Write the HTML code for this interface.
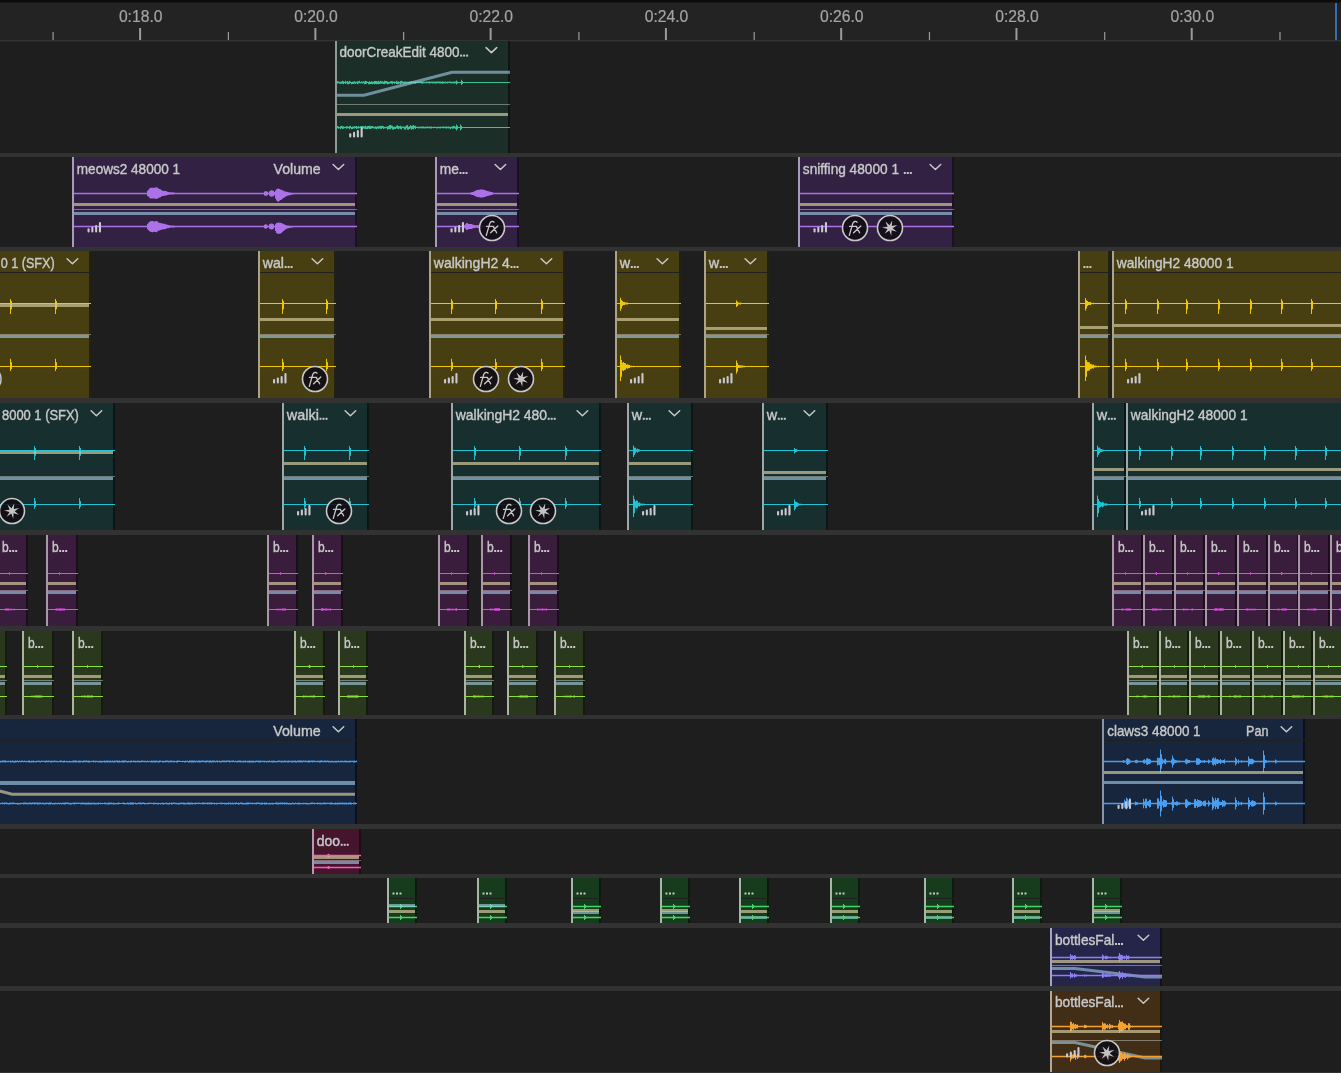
<!DOCTYPE html><html><head><meta charset="utf-8"><style>html,body{margin:0;padding:0;background:#1e1e1e;width:1341px;height:1073px;overflow:hidden}</style></head><body><svg width="1341" height="1073" viewBox="0 0 1341 1073" style="display:block;font-family:'Liberation Sans';will-change:transform">
<rect x="0" y="0" width="1341" height="1073" fill="#1e1e1e"/>
<rect x="0" y="0" width="1341" height="2" fill="#0b0b0b"/>
<rect x="0" y="2" width="1341" height="1" fill="#171717"/>
<rect x="0" y="3" width="1341" height="37" fill="#232323"/>
<rect x="0" y="40" width="1341" height="1" fill="#333333"/>
<rect x="0" y="41" width="1341" height="1" fill="#262626"/>
<g opacity="0.999">
<rect x="139.1" y="28" width="2" height="12" fill="#9b9b9b"/>
<text x="140.7" y="22" font-size="15.6" fill="#a4a4a4" stroke="#a4a4a4" stroke-width="0.2" text-anchor="middle" textLength="43.6" lengthAdjust="spacingAndGlyphs">0:18.0</text>
<rect x="314.37" y="28" width="2" height="12" fill="#9b9b9b"/>
<text x="315.97" y="22" font-size="15.6" fill="#a4a4a4" stroke="#a4a4a4" stroke-width="0.2" text-anchor="middle" textLength="43.6" lengthAdjust="spacingAndGlyphs">0:20.0</text>
<rect x="489.64" y="28" width="2" height="12" fill="#9b9b9b"/>
<text x="491.24" y="22" font-size="15.6" fill="#a4a4a4" stroke="#a4a4a4" stroke-width="0.2" text-anchor="middle" textLength="43.6" lengthAdjust="spacingAndGlyphs">0:22.0</text>
<rect x="664.91" y="28" width="2" height="12" fill="#9b9b9b"/>
<text x="666.51" y="22" font-size="15.6" fill="#a4a4a4" stroke="#a4a4a4" stroke-width="0.2" text-anchor="middle" textLength="43.6" lengthAdjust="spacingAndGlyphs">0:24.0</text>
<rect x="840.18" y="28" width="2" height="12" fill="#9b9b9b"/>
<text x="841.78" y="22" font-size="15.6" fill="#a4a4a4" stroke="#a4a4a4" stroke-width="0.2" text-anchor="middle" textLength="43.6" lengthAdjust="spacingAndGlyphs">0:26.0</text>
<rect x="1015.45" y="28" width="2" height="12" fill="#9b9b9b"/>
<text x="1017.05" y="22" font-size="15.6" fill="#a4a4a4" stroke="#a4a4a4" stroke-width="0.2" text-anchor="middle" textLength="43.6" lengthAdjust="spacingAndGlyphs">0:28.0</text>
<rect x="1190.72" y="28" width="2" height="12" fill="#9b9b9b"/>
<text x="1192.32" y="22" font-size="15.6" fill="#a4a4a4" stroke="#a4a4a4" stroke-width="0.2" text-anchor="middle" textLength="43.6" lengthAdjust="spacingAndGlyphs">0:30.0</text>
<rect x="52.5" y="32" width="1.2" height="8" fill="#9b9b9b"/>
<rect x="227.77" y="32" width="1.2" height="8" fill="#9b9b9b"/>
<rect x="403.04" y="32" width="1.2" height="8" fill="#9b9b9b"/>
<rect x="578.31" y="32" width="1.2" height="8" fill="#9b9b9b"/>
<rect x="753.58" y="32" width="1.2" height="8" fill="#9b9b9b"/>
<rect x="928.85" y="32" width="1.2" height="8" fill="#9b9b9b"/>
<rect x="1104.12" y="32" width="1.2" height="8" fill="#9b9b9b"/>
<rect x="1279.39" y="32" width="1.2" height="8" fill="#9b9b9b"/>
</g>
<rect x="1335" y="3" width="2" height="37" fill="#2f6cb0"/>
<rect x="0" y="153" width="1341" height="4" fill="#323232"/>
<rect x="0" y="247" width="1341" height="4" fill="#323232"/>
<rect x="0" y="398" width="1341" height="5" fill="#323232"/>
<rect x="0" y="530" width="1341" height="5" fill="#323232"/>
<rect x="0" y="626" width="1341" height="5" fill="#323232"/>
<rect x="0" y="715" width="1341" height="4" fill="#323232"/>
<rect x="0" y="824" width="1341" height="5" fill="#323232"/>
<rect x="0" y="874" width="1341" height="4" fill="#323232"/>
<rect x="0" y="923" width="1341" height="5" fill="#323232"/>
<rect x="0" y="986" width="1341" height="5" fill="#323232"/>
<g opacity="0.999">
<svg x="335" y="41" width="175" height="112" overflow="hidden"><g transform="translate(-335,-41)">
<rect x="335" y="41" width="173" height="112" fill="#1c2f29"/>
<rect x="508" y="41" width="2" height="112" fill="#0e1714"/>
<rect x="460.1" y="54.6" width="2" height="2" fill="#c9c9c9"/>
<rect x="463.1" y="54.6" width="2" height="2" fill="#c9c9c9"/>
<rect x="466.1" y="54.6" width="2" height="2" fill="#c9c9c9"/>
<text x="339.5" y="56.6" font-size="14.6" fill="#c9c9c9" stroke="#c9c9c9" stroke-width="0.4" text-anchor="start" textLength="120" lengthAdjust="spacingAndGlyphs">doorCreakEdit 4800</text>
<polyline points="486.1,47.6 491.4,52.6 496.7,47.6" fill="none" stroke="#c9c9c9" stroke-width="1.5" stroke-linecap="round" stroke-linejoin="round"/>
<polygon points="336,81.75 337,81.75 337,81 338,81 338,81.5 339,81.5 339,81.75 341,81.75 341,81.5 342,81.5 342,80.75 343,80.75 343,81.25 344,81.25 344,81.75 345,81.75 345,80.75 346,80.75 346,81.75 347,81.75 347,81 348,81 348,81.75 349,81.75 349,80.75 350,80.75 350,81.5 351,81.5 351,82 352,82 352,81.75 353,81.75 353,81.5 354,81.5 354,81.25 355,81.25 355,81.75 356,81.75 356,81.75 357,81.75 357,81.25 358,81.25 358,81.25 359,81.25 359,80.75 360,80.75 360,82 361,82 361,81.25 362,81.25 362,81.75 363,81.75 363,81.25 364,81.25 364,81.5 365,81.5 365,80.75 366,80.75 366,81 367,81 367,81.75 368,81.75 368,82 369,82 369,81 370,81 370,82 371,82 371,81.25 372,81.25 372,81.5 373,81.5 373,81.75 374,81.75 374,81 375,81 375,81 376,81 376,81 377,81 377,81.5 378,81.5 378,80.75 379,80.75 379,81.5 380,81.5 380,80.75 381,80.75 381,81.25 382,81.25 382,81.25 383,81.25 383,81.75 384,81.75 384,80.75 385,80.75 385,81 386,81 386,81 387,81 387,81.5 388,81.5 388,81.75 389,81.75 389,82 390,82 390,81.25 391,81.25 391,81 392,81 392,81.25 393,81.25 393,81.5 394,81.5 394,81.5 395,81.5 395,81.75 396,81.75 396,80.75 397,80.75 397,81.5 398,81.5 398,81.5 399,81.5 399,81.75 400,81.75 400,81 401,81 401,80.75 402,80.75 402,81.25 403,81.25 403,81.75 404,81.75 404,81.5 406,81.5 406,81.75 409,81.75 409,81.5 410,81.5 410,81.75 411,81.75 411,81.25 412,81.25 412,82 413,82 413,81.5 414,81.5 414,81.5 415,81.5 415,81.75 416,81.75 416,82 417,82 417,81.75 418,81.75 418,81.5 419,81.5 419,81.75 420,81.75 420,81.5 421,81.5 421,81.5 422,81.5 422,81.5 423,81.5 423,81.5 424,81.5 424,81.75 425,81.75 425,82 426,82 426,81.5 427,81.5 427,81.75 428,81.75 428,81.5 429,81.5 429,81.5 430,81.5 430,81.75 431,81.75 431,81.5 432,81.5 432,81.5 433,81.5 433,81.75 434,81.75 434,81.5 435,81.5 435,81.75 436,81.75 436,81.5 437,81.5 437,81.5 439,81.5 439,81.5 441,81.5 441,81.75 442,81.75 442,81.25 443,81.25 443,81.75 445,81.75 445,81.5 446,81.5 446,82 447,82 447,81.5 448,81.5 448,81.75 449,81.75 449,81.5 450,81.5 450,81.5 451,81.5 451,81.75 452,81.75 452,81.75 453,81.75 453,81.75 454,81.75 454,81.5 455,81.5 455,81.5 456,81.5 456,80.5 457,80.5 457,81.5 458,81.5 458,82 461,82 461,79.75 462,79.75 462,81 463,81 463,82 510,82 510,83 463,83 463,84 462,84 462,85 461,85 461,83 458,83 458,83.5 457,83.5 457,84.5 456,84.5 456,83.25 455,83.25 455,83.5 454,83.5 454,83.5 453,83.5 453,83.25 452,83.25 452,83.5 451,83.5 451,83.25 450,83.25 450,83 449,83 449,83 448,83 448,83.5 447,83.5 447,83.25 446,83.25 446,83.25 445,83.25 445,83.5 443,83.5 443,83.75 442,83.75 442,83.5 441,83.5 441,83.5 439,83.5 439,83.25 437,83.25 437,83.5 436,83.5 436,83.5 435,83.5 435,83.5 434,83.5 434,83.25 433,83.25 433,83.5 432,83.5 432,83 431,83 431,83.5 430,83.5 430,83.5 429,83.5 429,83.25 428,83.25 428,83.25 427,83.25 427,83.25 426,83.25 426,83.25 425,83.25 425,83.25 424,83.25 424,83.25 423,83.25 423,83.75 422,83.75 422,83.5 421,83.5 421,83.25 420,83.25 420,83 419,83 419,83.25 418,83.25 418,83 417,83 417,83.25 416,83.25 416,83.5 415,83.5 415,83.5 414,83.5 414,83 413,83 413,83 412,83 412,83.25 411,83.25 411,83.5 410,83.5 410,83.25 409,83.25 409,83.25 406,83.25 406,83.5 404,83.5 404,83.75 403,83.75 403,83.5 402,83.5 402,83.5 401,83.5 401,84.25 400,84.25 400,83.5 399,83.5 399,84 398,84 398,84.25 397,84.25 397,84 396,84 396,83.25 395,83.25 395,84 394,84 394,83 393,83 393,84.25 392,84.25 392,83.75 391,83.75 391,83.25 390,83.25 390,83.75 389,83.75 389,84 388,84 388,84.25 387,84.25 387,83.75 386,83.75 386,83.5 385,83.5 385,84.25 384,84.25 384,84 383,84 383,83.75 382,83.75 382,83.5 381,83.5 381,83.75 380,83.75 380,84 379,84 379,84.25 378,84.25 378,84 377,84 377,84.25 376,84.25 376,84 375,84 375,84.25 374,84.25 374,83.75 373,83.75 373,84.25 372,84.25 372,84 371,84 371,84 370,84 370,84.25 369,84.25 369,84.25 368,84.25 368,83 367,83 367,83.75 366,83.75 366,84 365,84 365,84.25 364,84.25 364,83.25 363,83.25 363,83.5 362,83.5 362,83.25 361,83.25 361,83.5 360,83.5 360,83.25 359,83.25 359,83.5 358,83.5 358,84.25 357,84.25 357,83.25 356,83.25 356,84 355,84 355,83.5 354,83.5 354,84 353,84 353,84 352,84 352,84.25 351,84.25 351,83.25 350,83.25 350,83.75 349,83.75 349,84.25 348,84.25 348,84.25 347,84.25 347,83.25 346,83.25 346,84 345,84 345,83.25 344,83.25 344,84.25 343,84.25 343,83.75 342,83.75 342,83.75 341,83.75 341,83.75 339,83.75 339,83.25 338,83.25 338,83.5 337,83.5 337,83.5 336,83.5" fill="#3cc397"/>
<polygon points="336,126 337,126 337,126 338,126 338,126.5 339,126.5 339,127 340,127 340,126.25 341,126.25 341,125.75 342,125.75 342,126.25 343,126.25 343,126.25 344,126.25 344,126.75 345,126.75 345,126.75 346,126.75 346,126.25 347,126.25 347,126.25 348,126.25 348,126.75 349,126.75 349,126 350,126 350,125.75 351,125.75 351,127 352,127 352,126.5 353,126.5 353,126.5 354,126.5 354,126.25 355,126.25 355,126.25 356,126.25 356,126 357,126 357,126.75 358,126.75 358,126 359,126 359,126.75 360,126.75 360,126.25 361,126.25 361,126 363,126 363,126.25 364,126.25 364,126.25 365,126.25 365,125.75 366,125.75 366,126.75 367,126.75 367,126 368,126 368,126 369,126 369,125.75 370,125.75 370,126 371,126 371,126 372,126 372,126 373,126 373,126.5 374,126.5 374,127 375,127 375,126.25 376,126.25 376,126.75 377,126.75 377,126.25 378,126.25 378,126.25 379,126.25 379,126.25 380,126.25 380,125.75 381,125.75 381,126 382,126 382,125.75 383,125.75 383,126.25 384,126.25 384,126.75 385,126.75 385,127 386,127 386,126.5 387,126.5 387,126.5 388,126.5 388,126 389,126 389,125 391,125 391,125.5 392,125.5 392,125.75 393,125.75 393,126.75 394,126.75 394,126.75 396,126.75 396,125.75 397,125.75 397,125.25 398,125.25 398,126 399,126 399,126.25 400,126.25 400,125.75 401,125.75 401,126.5 402,126.5 402,126.5 403,126.5 403,126.5 404,126.5 404,126.75 405,126.75 405,126.25 406,126.25 406,125.5 407,125.5 407,125 408,125 408,126.75 409,126.75 409,126.25 410,126.25 410,125 411,125 411,126 412,126 412,125.5 413,125.5 413,125 414,125 414,125.75 415,125.75 415,125.75 416,125.75 416,126.75 418,126.75 418,126.75 419,126.75 419,126.75 421,126.75 421,126.5 422,126.5 422,126.5 423,126.5 423,126.5 424,126.5 424,127 425,127 425,126.5 426,126.5 426,126.75 427,126.75 427,126.5 428,126.5 428,126.75 429,126.75 429,126.5 430,126.5 430,126.75 431,126.75 431,126.5 432,126.5 432,127 433,127 433,126.75 434,126.75 434,126.75 436,126.75 436,127 437,127 437,126.75 440,126.75 440,126.5 441,126.5 441,127 442,127 442,126.5 444,126.5 444,126.75 445,126.75 445,126.5 446,126.5 446,126.5 447,126.5 447,126.75 448,126.75 448,126.5 449,126.5 449,126.75 450,126.75 450,126.75 451,126.75 451,126.75 452,126.75 452,126.25 453,126.25 453,126 454,126 454,125.75 455,125.75 455,126.75 456,126.75 456,124.5 457,124.5 457,125.75 458,125.75 458,127 460,127 460,124.5 461,124.5 461,125.75 462,125.75 462,127 510,127 510,128 462,128 462,129.25 461,129.25 461,130.5 460,130.5 460,128 458,128 458,129.25 457,129.25 457,130.5 456,130.5 456,129 455,129 455,128.25 454,128.25 454,128.5 453,128.5 453,128.75 452,128.75 452,128.25 451,128.25 451,129.25 450,129.25 450,128.25 449,128.25 449,128.5 448,128.5 448,128.25 447,128.25 447,128.5 446,128.5 446,128.25 445,128.25 445,128.25 444,128.25 444,128.25 442,128.25 442,128 441,128 441,128.5 440,128.5 440,128.25 437,128.25 437,128.5 436,128.5 436,128 434,128 434,128.25 433,128.25 433,128 432,128 432,128.5 431,128.5 431,128.5 430,128.5 430,128.25 429,128.25 429,128.25 428,128.25 428,128.25 427,128.25 427,128.25 426,128.25 426,128.25 425,128.25 425,128.5 424,128.5 424,128.25 423,128.25 423,128.5 422,128.5 422,128.25 421,128.25 421,128.25 419,128.25 419,128.5 418,128.5 418,128 416,128 416,129 415,129 415,128.25 414,128.25 414,129.5 413,129.5 413,129 412,129 412,129.75 411,129.75 411,128.5 410,128.5 410,129 409,129 409,129.75 408,129.75 408,129.75 407,129.75 407,128.25 406,128.25 406,129.75 405,129.75 405,129.5 404,129.5 404,128.25 403,128.25 403,128 402,128 402,129.5 401,129.5 401,129 400,129 400,128.5 399,128.5 399,129.25 398,129.25 398,128.75 397,128.75 397,128.25 396,128.25 396,129 394,129 394,129.75 393,129.75 393,129.5 392,129.5 392,128.25 391,128.25 391,129.25 389,129.25 389,129 388,129 388,129.75 387,129.75 387,128.25 386,128.25 386,128.25 385,128.25 385,128.5 384,128.5 384,129 383,129 383,128 382,128 382,129 381,129 381,128.75 380,128.75 380,128.5 379,128.5 379,128.75 378,128.75 378,128.5 377,128.5 377,129.25 376,129.25 376,128.75 375,128.75 375,128.5 374,128.5 374,128.5 373,128.5 373,128.25 372,128.25 372,128.5 371,128.5 371,129 370,129 370,129 369,129 369,128.5 368,128.5 368,129 367,129 367,129.25 366,129.25 366,129 365,129 365,128.75 364,128.75 364,128.5 363,128.5 363,129 361,129 361,128 360,128 360,128.25 359,128.25 359,128.5 358,128.5 358,128.5 357,128.5 357,129 356,129 356,128 355,128 355,128.5 354,128.5 354,128.5 353,128.5 353,129 352,129 352,129.25 351,129.25 351,128.25 350,128.25 350,129.25 349,129.25 349,128.25 348,128.25 348,128.25 347,128.25 347,128.75 346,128.75 346,128 345,128 345,128.25 344,128.25 344,128.75 343,128.75 343,129 342,129 342,128.25 341,128.25 341,129.25 340,129.25 340,128.25 339,128.25 339,128.75 338,128.75 338,128.25 337,128.25 337,128.5 336,128.5" fill="#3cc397"/>
<polyline points="335,95.3 364,95.3 452,72.2 510,72.2" fill="none" stroke="rgba(163,206,233,0.62)" stroke-width="3"/>
<rect x="335" y="104" width="175" height="1" fill="rgba(200,200,200,0.5)"/>
<rect x="335" y="113" width="173" height="3" fill="rgba(205,196,152,0.72)"/>
<rect x="349.2" y="133.3" width="2.1" height="4.3" rx="1" fill="#cbc8cf"/>
<rect x="353" y="131.8" width="2.1" height="5.8" rx="1" fill="#cbc8cf"/>
<rect x="356.8" y="130.1" width="2.1" height="7.5" rx="1" fill="#cbc8cf"/>
<rect x="360.6" y="127.1" width="2.1" height="10.5" rx="1" fill="#cbc8cf"/>
<rect x="335" y="41" width="2" height="112" fill="#8f9c95"/>
</g></svg>
<svg x="72" y="157" width="285" height="90" overflow="hidden"><g transform="translate(-72,-157)">
<rect x="72" y="157" width="283" height="90" fill="#332244"/>
<rect x="355" y="157" width="2" height="90" fill="#1c1226"/>
<text x="76.8" y="174" font-size="14.6" fill="#c9c9c9" stroke="#c9c9c9" stroke-width="0.4" text-anchor="start" textLength="103.3" lengthAdjust="spacingAndGlyphs">meows2 48000 1</text>
<text x="273.6" y="174" font-size="14.6" fill="#c9c9c9" stroke="#c9c9c9" stroke-width="0.4" text-anchor="start" textLength="47" lengthAdjust="spacingAndGlyphs">Volume</text>
<polyline points="333.1,164.5 338.4,169.5 343.7,164.5" fill="none" stroke="#c9c9c9" stroke-width="1.5" stroke-linecap="round" stroke-linejoin="round"/>
<polygon points="72,192.75 147,192.75 147,190.75 148,190.75 148,189.75 149,189.75 149,188.5 150,188.5 150,187.75 155,187.75 155,187.5 156,187.5 156,187.25 157,187.25 157,187.75 158,187.75 158,188.5 159,188.5 159,189 160,189 160,189.25 161,189.25 161,190 162,190 162,190.75 164,190.75 164,191 165,191 165,191 166,191 166,191.25 167,191.25 167,191.75 168,191.75 168,192 169,192 169,192.25 170,192.25 170,192.25 173,192.25 173,192.5 174,192.5 174,192.5 175,192.5 175,192.75 264,192.75 264,191.5 265,191.5 265,191.25 267,191.25 267,191.75 268,191.75 268,192.75 269,192.75 269,191.25 270,191.25 270,190.5 271,190.5 271,190.25 272,190.25 272,190.5 273,190.5 273,190.75 274,190.75 274,192 275,192 275,190.5 276,190.5 276,189.25 277,189.25 277,188.75 278,188.75 278,188.5 279,188.5 279,189 280,189 280,189.5 281,189.5 281,189.75 282,189.75 282,190.25 283,190.25 283,190.75 284,190.75 284,191.25 285,191.25 285,191.5 286,191.5 286,191.75 287,191.75 287,192 288,192 288,192.25 289,192.25 289,192.5 290,192.5 290,192.5 291,192.5 291,192.75 292,192.75 292,192.75 294,192.75 294,192.75 357,192.75 357,194.25 294,194.25 294,194.5 292,194.5 292,194.75 291,194.75 291,195 290,195 290,195.25 289,195.25 289,195.5 288,195.5 288,195.75 287,195.75 287,196.25 286,196.25 286,196.75 285,196.75 285,197.5 284,197.5 284,198 283,198 283,198.75 282,198.75 282,199.75 281,199.75 281,200 280,200 280,200.75 279,200.75 279,201.75 278,201.75 278,201.25 277,201.25 277,200.5 276,200.5 276,198.5 275,198.5 275,195 274,195 274,196.25 273,196.25 273,196.5 272,196.5 272,196.75 271,196.75 271,196.5 270,196.5 270,195.75 269,195.75 269,194.25 268,194.25 268,195.25 267,195.25 267,195.75 265,195.75 265,195.5 264,195.5 264,194.25 175,194.25 175,194.25 174,194.25 174,194.5 173,194.5 173,194.5 170,194.5 170,194.75 169,194.75 169,194.75 168,194.75 168,195 167,195 167,195.5 166,195.5 166,195.5 165,195.5 165,195.75 164,195.75 164,196 162,196 162,196.5 161,196.5 161,197.25 160,197.25 160,197.5 159,197.5 159,198 158,198 158,198.5 157,198.5 157,199 156,199 156,198.75 155,198.75 155,198.5 150,198.5 150,197.75 149,197.75 149,196.75 148,196.75 148,196 147,196 147,194.25 72,194.25" fill="#ad72ea"/>
<rect x="72" y="203" width="283" height="3" fill="rgba(205,196,152,0.72)"/>
<rect x="72" y="209" width="285" height="1" fill="rgba(200,200,200,0.5)"/>
<rect x="72" y="212" width="283" height="3" fill="rgba(163,206,233,0.62)"/>
<polygon points="72,225.75 147,225.75 147,224 148,224 148,222.75 149,222.75 149,221.75 150,221.75 150,221.25 151,221.25 151,221 152,221 152,221 153,221 153,221.25 154,221.25 154,221.5 155,221.5 155,221.25 156,221.25 156,221 157,221 157,221.5 158,221.5 158,222.5 159,222.5 159,222.75 160,222.75 160,223 161,223 161,223.25 162,223.25 162,223.5 163,223.5 163,223.75 165,223.75 165,224.25 166,224.25 166,224.5 167,224.5 167,224.75 168,224.75 168,225 169,225 169,225.25 170,225.25 170,225.5 171,225.5 171,225.5 174,225.5 174,225.75 175,225.75 175,225.75 264,225.75 264,224.75 265,224.75 265,224.25 266,224.25 266,224.5 267,224.5 267,225.25 268,225.25 268,225.75 269,225.75 269,224.25 270,224.25 270,223.75 271,223.75 271,223.5 272,223.5 272,223.75 273,223.75 273,224.25 274,224.25 274,225.75 275,225.75 275,224.25 276,224.25 276,223 277,223 277,222.75 278,222.75 278,222.5 279,222.5 279,222.75 280,222.75 280,222.75 281,222.75 281,223 282,223 282,223.5 283,223.5 283,224 284,224 284,224.5 285,224.5 285,225 286,225 286,225.25 287,225.25 287,225.5 288,225.5 288,225.5 289,225.5 289,225.75 290,225.75 290,225.75 292,225.75 292,225.75 293,225.75 293,225.75 357,225.75 357,227.25 293,227.25 293,227.5 292,227.5 292,227.75 290,227.75 290,228 289,228 289,228.25 288,228.25 288,228.5 287,228.5 287,228.75 286,228.75 286,229.5 285,229.5 285,230.25 284,230.25 284,231 283,231 283,232 282,232 282,233 281,233 281,233.5 280,233.5 280,233.75 279,233.75 279,233.75 278,233.75 278,233.75 277,233.75 277,233 276,233 276,231 275,231 275,227.25 274,227.25 274,228.75 273,228.75 273,229.25 272,229.25 272,229.5 271,229.5 271,229.25 270,229.25 270,228.75 269,228.75 269,227.25 268,227.25 268,227.75 267,227.75 267,228.5 266,228.5 266,228.75 265,228.75 265,228.25 264,228.25 264,227.25 175,227.25 175,227.5 174,227.5 174,227.5 171,227.5 171,227.75 170,227.75 170,227.75 169,227.75 169,228.25 168,228.25 168,228.25 167,228.25 167,228.5 166,228.5 166,229 165,229 165,229.25 163,229.25 163,229.5 162,229.5 162,229.75 161,229.75 161,230 160,230 160,230.5 159,230.5 159,230.75 158,230.75 158,231.5 157,231.5 157,232.25 156,232.25 156,232 155,232 155,231.75 154,231.75 154,232 153,232 153,232.25 152,232.25 152,232 151,232 151,231.75 150,231.75 150,231.25 149,231.25 149,230.25 148,230.25 148,229.25 147,229.25 147,227.25 72,227.25" fill="#ad72ea"/>
<rect x="87.5" y="228.2" width="2.1" height="4.3" rx="1" fill="#cbc8cf"/>
<rect x="91.3" y="226.7" width="2.1" height="5.8" rx="1" fill="#cbc8cf"/>
<rect x="95.1" y="225" width="2.1" height="7.5" rx="1" fill="#cbc8cf"/>
<rect x="98.9" y="222" width="2.1" height="10.5" rx="1" fill="#cbc8cf"/>
<rect x="72" y="157" width="2" height="90" fill="#a79cba"/>
</g></svg>
<svg x="435" y="157" width="84" height="90" overflow="hidden"><g transform="translate(-435,-157)">
<rect x="435" y="157" width="82" height="90" fill="#332244"/>
<rect x="517" y="157" width="2" height="90" fill="#1c1226"/>
<rect x="459.5" y="172" width="2" height="2" fill="#c9c9c9"/>
<rect x="462.5" y="172" width="2" height="2" fill="#c9c9c9"/>
<rect x="465.5" y="172" width="2" height="2" fill="#c9c9c9"/>
<text x="439.8" y="174" font-size="14.6" fill="#c9c9c9" stroke="#c9c9c9" stroke-width="0.4" text-anchor="start" textLength="19.1" lengthAdjust="spacingAndGlyphs">me</text>
<polyline points="495.1,164.5 500.4,169.5 505.7,164.5" fill="none" stroke="#c9c9c9" stroke-width="1.5" stroke-linecap="round" stroke-linejoin="round"/>
<polygon points="435,192.75 470,192.75 470,192.5 471,192.5 471,192.25 472,192.25 472,192 473,192 473,191.75 474,191.75 474,191.25 475,191.25 475,190.75 476,190.75 476,190.25 477,190.25 477,190 478,190 478,189.75 480,189.75 480,189.5 483,189.5 483,189.75 484,189.75 484,190 485,190 485,190.25 486,190.25 486,190.75 487,190.75 487,191 488,191 488,191.25 489,191.25 489,191.5 490,191.5 490,191.75 491,191.75 491,192 492,192 492,192.25 493,192.25 493,192.75 519,192.75 519,194.25 493,194.25 493,194.75 492,194.75 492,195 491,195 491,195.25 490,195.25 490,195.5 489,195.5 489,195.75 488,195.75 488,196 487,196 487,196.25 486,196.25 486,196.75 485,196.75 485,197 484,197 484,197.25 483,197.25 483,197.5 480,197.5 480,197.25 478,197.25 478,197 477,197 477,196.75 476,196.75 476,196.25 475,196.25 475,195.75 474,195.75 474,195.25 473,195.25 473,195 472,195 472,194.75 471,194.75 471,194.5 470,194.5 470,194.25 435,194.25" fill="#ad72ea"/>
<rect x="435" y="203" width="82" height="3" fill="rgba(205,196,152,0.72)"/>
<rect x="435" y="209" width="84" height="1" fill="rgba(200,200,200,0.5)"/>
<rect x="435" y="212" width="82" height="3" fill="rgba(163,206,233,0.62)"/>
<polygon points="435,225.75 464,225.75 464,225.25 465,225.25 465,224.25 466,224.25 466,223 467,223 467,223.25 468,223.25 468,223.75 469,223.75 469,224 472,224 472,224.5 473,224.5 473,224.75 474,224.75 474,225 475,225 475,225.25 477,225.25 477,225 478,225 478,225.25 480,225.25 480,225.5 483,225.5 483,225.75 519,225.75 519,227.25 483,227.25 483,227.5 480,227.5 480,227.75 478,227.75 478,228 477,228 477,227.75 475,227.75 475,228 474,228 474,228.25 473,228.25 473,228.5 472,228.5 472,229 469,229 469,229.25 468,229.25 468,229.75 467,229.75 467,230 466,230 466,228.75 465,228.75 465,227.75 464,227.75 464,227.25 435,227.25" fill="#ad72ea"/>
<rect x="450.5" y="228.2" width="2.1" height="4.3" rx="1" fill="#cbc8cf"/>
<rect x="454.3" y="226.7" width="2.1" height="5.8" rx="1" fill="#cbc8cf"/>
<rect x="458.1" y="225" width="2.1" height="7.5" rx="1" fill="#cbc8cf"/>
<rect x="461.9" y="222" width="2.1" height="10.5" rx="1" fill="#cbc8cf"/>
<circle cx="492" cy="228" r="12.5" fill="#120e15" fill-opacity="0.9" stroke="#c8c8c8" stroke-width="1.6"/>
<g transform="translate(492,228)" fill="none" stroke="#c8c8c8" stroke-width="1.35" stroke-linecap="round"><path d="M2,-5.8 C1,-7.3 -1.6,-6.6 -2.3,-4.4 L-5.7,7.4 M-5.4,-1.6 L1.4,-1.6 M1.3,-1.6 L4.6,4.8 M5.8,-2.1 L-1.4,4.8"/></g>
<rect x="435" y="157" width="2" height="90" fill="#a79cba"/>
</g></svg>
<svg x="798" y="157" width="156" height="90" overflow="hidden"><g transform="translate(-798,-157)">
<rect x="798" y="157" width="154" height="90" fill="#332244"/>
<rect x="952" y="157" width="2" height="90" fill="#1c1226"/>
<rect x="903.8" y="172" width="2" height="2" fill="#c9c9c9"/>
<rect x="906.8" y="172" width="2" height="2" fill="#c9c9c9"/>
<rect x="909.8" y="172" width="2" height="2" fill="#c9c9c9"/>
<text x="802.8" y="174" font-size="14.6" fill="#c9c9c9" stroke="#c9c9c9" stroke-width="0.4" text-anchor="start" textLength="96.2" lengthAdjust="spacingAndGlyphs">sniffing 48000 1</text>
<polyline points="930.1,164.5 935.4,169.5 940.7,164.5" fill="none" stroke="#c9c9c9" stroke-width="1.5" stroke-linecap="round" stroke-linejoin="round"/>
<polygon points="798,192.75 954,192.75 954,194.25 798,194.25" fill="#ad72ea"/>
<rect x="798" y="203" width="154" height="3" fill="rgba(205,196,152,0.72)"/>
<rect x="798" y="209" width="156" height="1" fill="rgba(200,200,200,0.5)"/>
<rect x="798" y="212" width="154" height="3" fill="rgba(163,206,233,0.62)"/>
<polygon points="798,225.75 954,225.75 954,227.25 798,227.25" fill="#ad72ea"/>
<rect x="813.5" y="228.2" width="2.1" height="4.3" rx="1" fill="#cbc8cf"/>
<rect x="817.3" y="226.7" width="2.1" height="5.8" rx="1" fill="#cbc8cf"/>
<rect x="821.1" y="225" width="2.1" height="7.5" rx="1" fill="#cbc8cf"/>
<rect x="824.9" y="222" width="2.1" height="10.5" rx="1" fill="#cbc8cf"/>
<circle cx="855" cy="228" r="12.5" fill="#120e15" fill-opacity="0.9" stroke="#c8c8c8" stroke-width="1.6"/>
<g transform="translate(855,228)" fill="none" stroke="#c8c8c8" stroke-width="1.35" stroke-linecap="round"><path d="M2,-5.8 C1,-7.3 -1.6,-6.6 -2.3,-4.4 L-5.7,7.4 M-5.4,-1.6 L1.4,-1.6 M1.3,-1.6 L4.6,4.8 M5.8,-2.1 L-1.4,4.8"/></g>
<circle cx="890" cy="228" r="12.5" fill="#120e15" fill-opacity="0.9" stroke="#c8c8c8" stroke-width="1.6"/>
<polygon points="885.47,221.53 889.56,225.34 892.23,220.42 891.81,226 897.32,225.02 892.69,228.17 896.89,231.86 891.55,230.21 891.27,235.8 889.24,230.59 884.7,233.86 887.5,229.02 882.12,227.51 887.65,226.68" fill="#c4c4c4"/>
<rect x="798" y="157" width="2" height="90" fill="#a79cba"/>
</g></svg>
<svg x="-200" y="251" width="291" height="147" overflow="hidden"><g transform="translate(200,-251)">
<rect x="-200" y="251" width="289" height="147" fill="#484013"/>
<rect x="89" y="251" width="2" height="147" fill="#262210"/>
<text x="0.7" y="268" font-size="14.6" fill="#c9c9c9" stroke="#c9c9c9" stroke-width="0.4" text-anchor="start" textLength="53.9" lengthAdjust="spacingAndGlyphs">0 1 (SFX)</text>
<polyline points="67.1,258.7 72.4,263.7 77.7,258.7" fill="none" stroke="#c9c9c9" stroke-width="1.5" stroke-linecap="round" stroke-linejoin="round"/>
<polygon points="-200,303 10,303 10,299 11,299 11,301 12,301 12,303 55,303 55,299 56,299 56,301 57,301 57,303 91,303 91,304 57,304 57,309.25 56,309.25 56,314 55,314 55,304 12,304 12,309.25 11,309.25 11,314 10,314 10,304 -200,304" fill="#f0c800"/>
<rect x="-200" y="304" width="289" height="3" fill="rgba(205,196,152,0.72)"/>
<rect x="-200" y="334" width="291" height="1" fill="rgba(200,200,200,0.5)"/>
<rect x="-200" y="335" width="289" height="3" fill="rgba(163,206,233,0.62)"/>
<polygon points="-200,366 10,366 10,358.75 11,358.75 11,362.25 12,362.25 12,366 55,366 55,358.75 56,358.75 56,362.25 57,362.25 57,366 91,366 91,367 57,367 57,369 56,369 56,371 55,371 55,367 12,367 12,369 11,369 11,371 10,371 10,367 -200,367" fill="#f0c800"/>
<rect x="-100" y="379.1" width="2.1" height="4.3" rx="1" fill="#cbc8cf"/>
<rect x="-96.2" y="377.6" width="2.1" height="5.8" rx="1" fill="#cbc8cf"/>
<rect x="-92.4" y="375.9" width="2.1" height="7.5" rx="1" fill="#cbc8cf"/>
<rect x="-88.6" y="372.9" width="2.1" height="10.5" rx="1" fill="#cbc8cf"/>
<circle cx="-11.5" cy="379" r="12.5" fill="#120e15" fill-opacity="0.9" stroke="#c8c8c8" stroke-width="1.6"/>
<polygon points="-16.03,372.53 -11.94,376.34 -9.27,371.42 -9.69,377 -4.18,376.02 -8.81,379.17 -4.61,382.86 -9.95,381.21 -10.23,386.8 -12.26,381.59 -16.8,384.86 -14,380.02 -19.38,378.51 -13.85,377.68" fill="#c4c4c4"/>
<rect x="-200" y="272" width="291" height="1" fill="#222222"/>
</g></svg>
<svg x="258" y="251" width="78" height="147" overflow="hidden"><g transform="translate(-258,-251)">
<rect x="258" y="251" width="76" height="147" fill="#484013"/>
<rect x="334" y="251" width="2" height="147" fill="#262210"/>
<rect x="284.6" y="266" width="2" height="2" fill="#c9c9c9"/>
<rect x="287.6" y="266" width="2" height="2" fill="#c9c9c9"/>
<rect x="290.6" y="266" width="2" height="2" fill="#c9c9c9"/>
<text x="262.8" y="268" font-size="14.6" fill="#c9c9c9" stroke="#c9c9c9" stroke-width="0.4" text-anchor="start" textLength="21.2" lengthAdjust="spacingAndGlyphs">wal</text>
<polyline points="312.1,258.7 317.4,263.7 322.7,258.7" fill="none" stroke="#c9c9c9" stroke-width="1.5" stroke-linecap="round" stroke-linejoin="round"/>
<polygon points="258,303 282,303 282,299 283,299 283,301 284,301 284,303 326,303 326,299 327,299 327,301 328,301 328,303 336,303 336,304 328,304 328,309.25 327,309.25 327,314 326,314 326,304 284,304 284,309.25 283,309.25 283,314 282,314 282,304 258,304" fill="#f0c800"/>
<rect x="258" y="318" width="76" height="3" fill="rgba(205,196,152,0.72)"/>
<rect x="258" y="334" width="78" height="1" fill="rgba(200,200,200,0.5)"/>
<rect x="258" y="335" width="76" height="3" fill="rgba(163,206,233,0.62)"/>
<polygon points="258,366 282,366 282,358.75 283,358.75 283,362.25 284,362.25 284,366 326,366 326,358.75 327,358.75 327,362.25 328,362.25 328,366 336,366 336,367 328,367 328,369 327,369 327,371 326,371 326,367 284,367 284,369 283,369 283,371 282,371 282,367 258,367" fill="#f0c800"/>
<rect x="273" y="379.1" width="2.1" height="4.3" rx="1" fill="#cbc8cf"/>
<rect x="276.8" y="377.6" width="2.1" height="5.8" rx="1" fill="#cbc8cf"/>
<rect x="280.6" y="375.9" width="2.1" height="7.5" rx="1" fill="#cbc8cf"/>
<rect x="284.4" y="372.9" width="2.1" height="10.5" rx="1" fill="#cbc8cf"/>
<circle cx="315" cy="379" r="12.5" fill="#120e15" fill-opacity="0.9" stroke="#c8c8c8" stroke-width="1.6"/>
<g transform="translate(315,379)" fill="none" stroke="#c8c8c8" stroke-width="1.35" stroke-linecap="round"><path d="M2,-5.8 C1,-7.3 -1.6,-6.6 -2.3,-4.4 L-5.7,7.4 M-5.4,-1.6 L1.4,-1.6 M1.3,-1.6 L4.6,4.8 M5.8,-2.1 L-1.4,4.8"/></g>
<rect x="258" y="272" width="78" height="1" fill="#222222"/>
<rect x="258" y="251" width="2" height="147" fill="#aba68a"/>
</g></svg>
<svg x="429" y="251" width="136" height="147" overflow="hidden"><g transform="translate(-429,-251)">
<rect x="429" y="251" width="134" height="147" fill="#484013"/>
<rect x="563" y="251" width="2" height="147" fill="#262210"/>
<rect x="510.5" y="266" width="2" height="2" fill="#c9c9c9"/>
<rect x="513.5" y="266" width="2" height="2" fill="#c9c9c9"/>
<rect x="516.5" y="266" width="2" height="2" fill="#c9c9c9"/>
<text x="433.8" y="268" font-size="14.6" fill="#c9c9c9" stroke="#c9c9c9" stroke-width="0.4" text-anchor="start" textLength="76.1" lengthAdjust="spacingAndGlyphs">walkingH2 4</text>
<polyline points="541.1,258.7 546.4,263.7 551.7,258.7" fill="none" stroke="#c9c9c9" stroke-width="1.5" stroke-linecap="round" stroke-linejoin="round"/>
<polygon points="429,303 451,303 451,299 452,299 452,301 453,301 453,303 495,303 495,299 496,299 496,301 497,301 497,303 541,303 541,299 542,299 542,301 543,301 543,303 565,303 565,304 543,304 543,309.25 542,309.25 542,314 541,314 541,304 497,304 497,309.25 496,309.25 496,314 495,314 495,304 453,304 453,309.25 452,309.25 452,314 451,314 451,304 429,304" fill="#f0c800"/>
<rect x="429" y="318" width="134" height="3" fill="rgba(205,196,152,0.72)"/>
<rect x="429" y="334" width="136" height="1" fill="rgba(200,200,200,0.5)"/>
<rect x="429" y="335" width="134" height="3" fill="rgba(163,206,233,0.62)"/>
<polygon points="429,366 451,366 451,358.75 452,358.75 452,362.25 453,362.25 453,366 495,366 495,358.75 496,358.75 496,362.25 497,362.25 497,366 541,366 541,358.75 542,358.75 542,362.25 543,362.25 543,366 565,366 565,367 543,367 543,369 542,369 542,371 541,371 541,367 497,367 497,369 496,369 496,371 495,371 495,367 453,367 453,369 452,369 452,371 451,371 451,367 429,367" fill="#f0c800"/>
<rect x="444" y="379.1" width="2.1" height="4.3" rx="1" fill="#cbc8cf"/>
<rect x="447.8" y="377.6" width="2.1" height="5.8" rx="1" fill="#cbc8cf"/>
<rect x="451.6" y="375.9" width="2.1" height="7.5" rx="1" fill="#cbc8cf"/>
<rect x="455.4" y="372.9" width="2.1" height="10.5" rx="1" fill="#cbc8cf"/>
<circle cx="486" cy="379" r="12.5" fill="#120e15" fill-opacity="0.9" stroke="#c8c8c8" stroke-width="1.6"/>
<g transform="translate(486,379)" fill="none" stroke="#c8c8c8" stroke-width="1.35" stroke-linecap="round"><path d="M2,-5.8 C1,-7.3 -1.6,-6.6 -2.3,-4.4 L-5.7,7.4 M-5.4,-1.6 L1.4,-1.6 M1.3,-1.6 L4.6,4.8 M5.8,-2.1 L-1.4,4.8"/></g>
<circle cx="521" cy="379" r="12.5" fill="#120e15" fill-opacity="0.9" stroke="#c8c8c8" stroke-width="1.6"/>
<polygon points="516.47,372.53 520.56,376.34 523.23,371.42 522.81,377 528.32,376.02 523.69,379.17 527.89,382.86 522.55,381.21 522.27,386.8 520.24,381.59 515.7,384.86 518.5,380.02 513.12,378.51 518.65,377.68" fill="#c4c4c4"/>
<rect x="429" y="272" width="136" height="1" fill="#222222"/>
<rect x="429" y="251" width="2" height="147" fill="#aba68a"/>
</g></svg>
<svg x="615" y="251" width="66" height="147" overflow="hidden"><g transform="translate(-615,-251)">
<rect x="615" y="251" width="64" height="147" fill="#484013"/>
<rect x="679" y="251" width="2" height="147" fill="#262210"/>
<rect x="630.8" y="266" width="2" height="2" fill="#c9c9c9"/>
<rect x="633.8" y="266" width="2" height="2" fill="#c9c9c9"/>
<rect x="636.8" y="266" width="2" height="2" fill="#c9c9c9"/>
<text x="619.8" y="268" font-size="14.6" fill="#c9c9c9" stroke="#c9c9c9" stroke-width="0.4" text-anchor="start" textLength="10.4" lengthAdjust="spacingAndGlyphs">w</text>
<polyline points="657.1,258.7 662.4,263.7 667.7,258.7" fill="none" stroke="#c9c9c9" stroke-width="1.5" stroke-linecap="round" stroke-linejoin="round"/>
<polygon points="615,303 620,303 620,297.75 621,297.75 621,300 622,300 622,301 623,301 623,302 625,302 625,302.5 628,302.5 628,303 681,303 681,304 628,304 628,304.5 625,304.5 625,305 623,305 623,306 622,306 622,308.5 621,308.5 621,310.75 620,310.75 620,304 615,304" fill="#f0c800"/>
<rect x="615" y="318" width="64" height="3" fill="rgba(205,196,152,0.72)"/>
<rect x="615" y="334" width="66" height="1" fill="rgba(200,200,200,0.5)"/>
<rect x="615" y="335" width="64" height="3" fill="rgba(163,206,233,0.62)"/>
<polygon points="615,366 620,366 620,355.5 621,355.5 621,360 622,360 622,362.75 623,362.75 623,362 624,362 624,363 625,363 625,363.25 626,363.25 626,364.75 627,364.75 627,364.25 628,364.25 628,364.75 629,364.75 629,365 630,365 630,365.75 632,365.75 632,366 633,366 633,365.75 634,365.75 634,366 681,366 681,367 634,367 634,367.25 633,367.25 633,367 632,367 632,367.25 630,367.25 630,368 629,368 629,368.25 628,368.25 628,368.75 627,368.75 627,368.25 626,368.25 626,369.75 625,369.75 625,370 624,370 624,371 623,371 623,370.25 622,370.25 622,376.75 621,376.75 621,381 620,381 620,367 615,367" fill="#f0c800"/>
<rect x="630" y="379.1" width="2.1" height="4.3" rx="1" fill="#cbc8cf"/>
<rect x="633.8" y="377.6" width="2.1" height="5.8" rx="1" fill="#cbc8cf"/>
<rect x="637.6" y="375.9" width="2.1" height="7.5" rx="1" fill="#cbc8cf"/>
<rect x="641.4" y="372.9" width="2.1" height="10.5" rx="1" fill="#cbc8cf"/>
<rect x="615" y="272" width="66" height="1" fill="#222222"/>
<rect x="615" y="251" width="2" height="147" fill="#aba68a"/>
</g></svg>
<svg x="704" y="251" width="65" height="147" overflow="hidden"><g transform="translate(-704,-251)">
<rect x="704" y="251" width="63" height="147" fill="#484013"/>
<rect x="767" y="251" width="2" height="147" fill="#262210"/>
<rect x="719.8" y="266" width="2" height="2" fill="#c9c9c9"/>
<rect x="722.8" y="266" width="2" height="2" fill="#c9c9c9"/>
<rect x="725.8" y="266" width="2" height="2" fill="#c9c9c9"/>
<text x="708.8" y="268" font-size="14.6" fill="#c9c9c9" stroke="#c9c9c9" stroke-width="0.4" text-anchor="start" textLength="10.4" lengthAdjust="spacingAndGlyphs">w</text>
<polyline points="745.1,258.7 750.4,263.7 755.7,258.7" fill="none" stroke="#c9c9c9" stroke-width="1.5" stroke-linecap="round" stroke-linejoin="round"/>
<polygon points="704,303 736,303 736,300.5 737,300.5 737,301.75 738,301.75 738,302.5 739,302.5 739,302.75 740,302.75 740,302.5 741,302.5 741,303 769,303 769,304 741,304 741,304.5 740,304.5 740,304.25 739,304.25 739,304.5 738,304.5 738,306 737,306 737,307 736,307 736,304 704,304" fill="#f0c800"/>
<rect x="704" y="327" width="63" height="3" fill="rgba(205,196,152,0.72)"/>
<rect x="704" y="334" width="65" height="1" fill="rgba(200,200,200,0.5)"/>
<rect x="704" y="335" width="63" height="3" fill="rgba(163,206,233,0.62)"/>
<polygon points="704,366 736,366 736,360.5 737,360.5 737,363 738,363 738,365 739,365 739,365.25 741,365.25 741,365.5 743,365.5 743,365.75 745,365.75 745,366 769,366 769,367 745,367 745,367.25 743,367.25 743,367.5 741,367.5 741,367.75 739,367.75 739,368 738,368 738,371.5 737,371.5 737,373.5 736,373.5 736,367 704,367" fill="#f0c800"/>
<rect x="719" y="379.1" width="2.1" height="4.3" rx="1" fill="#cbc8cf"/>
<rect x="722.8" y="377.6" width="2.1" height="5.8" rx="1" fill="#cbc8cf"/>
<rect x="726.6" y="375.9" width="2.1" height="7.5" rx="1" fill="#cbc8cf"/>
<rect x="730.4" y="372.9" width="2.1" height="10.5" rx="1" fill="#cbc8cf"/>
<rect x="704" y="272" width="65" height="1" fill="#222222"/>
<rect x="704" y="251" width="2" height="147" fill="#aba68a"/>
</g></svg>
<svg x="1078" y="251" width="32" height="147" overflow="hidden"><g transform="translate(-1078,-251)">
<rect x="1078" y="251" width="30" height="147" fill="#484013"/>
<rect x="1108" y="251" width="2" height="147" fill="#262210"/>
<rect x="1083.4" y="266" width="2" height="2" fill="#c9c9c9"/>
<rect x="1086.4" y="266" width="2" height="2" fill="#c9c9c9"/>
<rect x="1089.4" y="266" width="2" height="2" fill="#c9c9c9"/>
<polygon points="1078,303 1085,303 1085,298 1086,298 1086,300.25 1087,300.25 1087,301 1088,301 1088,302 1091,302 1091,302.75 1092,302.75 1092,303 1093,303 1093,302.75 1094,302.75 1094,303 1110,303 1110,304 1094,304 1094,304.25 1093,304.25 1093,304 1092,304 1092,304.25 1091,304.25 1091,305 1088,305 1088,306 1087,306 1087,308.5 1086,308.5 1086,310.5 1085,310.5 1085,304 1078,304" fill="#f0c800"/>
<rect x="1078" y="326" width="30" height="3" fill="rgba(205,196,152,0.72)"/>
<rect x="1078" y="334" width="32" height="1" fill="rgba(200,200,200,0.5)"/>
<rect x="1078" y="335" width="30" height="3" fill="rgba(163,206,233,0.62)"/>
<polygon points="1078,366 1085,366 1085,355.5 1086,355.5 1086,360 1087,360 1087,362 1088,362 1088,362.25 1089,362.25 1089,362.5 1090,362.5 1090,364 1091,364 1091,364.25 1092,364.25 1092,364.75 1093,364.75 1093,364.5 1094,364.5 1094,365.5 1096,365.5 1096,365.75 1097,365.75 1097,366 1098,366 1098,365.75 1099,365.75 1099,366 1110,366 1110,367 1099,367 1099,367.25 1098,367.25 1098,367 1097,367 1097,367.25 1096,367.25 1096,367.5 1094,367.5 1094,368.5 1093,368.5 1093,368.25 1092,368.25 1092,368.75 1091,368.75 1091,369 1090,369 1090,370.5 1089,370.5 1089,370.75 1088,370.75 1088,371 1087,371 1087,376.75 1086,376.75 1086,381 1085,381 1085,367 1078,367" fill="#f0c800"/>
<rect x="-100" y="379.1" width="2.1" height="4.3" rx="1" fill="#cbc8cf"/>
<rect x="-96.2" y="377.6" width="2.1" height="5.8" rx="1" fill="#cbc8cf"/>
<rect x="-92.4" y="375.9" width="2.1" height="7.5" rx="1" fill="#cbc8cf"/>
<rect x="-88.6" y="372.9" width="2.1" height="10.5" rx="1" fill="#cbc8cf"/>
<rect x="1078" y="272" width="32" height="1" fill="#222222"/>
<rect x="1078" y="251" width="2" height="147" fill="#aba68a"/>
</g></svg>
<svg x="1112" y="251" width="290" height="147" overflow="hidden"><g transform="translate(-1112,-251)">
<rect x="1112" y="251" width="288" height="147" fill="#484013"/>
<text x="1116.8" y="268" font-size="14.6" fill="#c9c9c9" stroke="#c9c9c9" stroke-width="0.4" text-anchor="start" textLength="116.8" lengthAdjust="spacingAndGlyphs">walkingH2 48000 1</text>
<polygon points="1112,303 1125,303 1125,299 1126,299 1126,301 1127,301 1127,303 1157,303 1157,299 1158,299 1158,301 1159,301 1159,303 1186,303 1186,299 1187,299 1187,301 1188,301 1188,303 1218,303 1218,299 1219,299 1219,301 1220,301 1220,303 1250,303 1250,299 1251,299 1251,301 1252,301 1252,303 1281,303 1281,299 1282,299 1282,301 1283,301 1283,303 1311,303 1311,299 1312,299 1312,301 1313,301 1313,303 1402,303 1402,304 1313,304 1313,309.25 1312,309.25 1312,314 1311,314 1311,304 1283,304 1283,309.25 1282,309.25 1282,314 1281,314 1281,304 1252,304 1252,309.25 1251,309.25 1251,314 1250,314 1250,304 1220,304 1220,309.25 1219,309.25 1219,314 1218,314 1218,304 1188,304 1188,309.25 1187,309.25 1187,314 1186,314 1186,304 1159,304 1159,309.25 1158,309.25 1158,314 1157,314 1157,304 1127,304 1127,309.25 1126,309.25 1126,314 1125,314 1125,304 1112,304" fill="#f0c800"/>
<rect x="1112" y="324" width="288" height="3" fill="rgba(205,196,152,0.72)"/>
<rect x="1112" y="334" width="290" height="1" fill="rgba(200,200,200,0.5)"/>
<rect x="1112" y="335" width="288" height="3" fill="rgba(163,206,233,0.62)"/>
<polygon points="1112,366 1125,366 1125,358.75 1126,358.75 1126,362.25 1127,362.25 1127,366 1157,366 1157,358.75 1158,358.75 1158,362.25 1159,362.25 1159,366 1186,366 1186,358.75 1187,358.75 1187,362.25 1188,362.25 1188,366 1218,366 1218,358.75 1219,358.75 1219,362.25 1220,362.25 1220,366 1250,366 1250,358.75 1251,358.75 1251,362.25 1252,362.25 1252,366 1281,366 1281,358.75 1282,358.75 1282,362.25 1283,362.25 1283,366 1311,366 1311,358.75 1312,358.75 1312,362.25 1313,362.25 1313,366 1402,366 1402,367 1313,367 1313,369 1312,369 1312,371 1311,371 1311,367 1283,367 1283,369 1282,369 1282,371 1281,371 1281,367 1252,367 1252,369 1251,369 1251,371 1250,371 1250,367 1220,367 1220,369 1219,369 1219,371 1218,371 1218,367 1188,367 1188,369 1187,369 1187,371 1186,371 1186,367 1159,367 1159,369 1158,369 1158,371 1157,371 1157,367 1127,367 1127,369 1126,369 1126,371 1125,371 1125,367 1112,367" fill="#f0c800"/>
<rect x="1127" y="379.1" width="2.1" height="4.3" rx="1" fill="#cbc8cf"/>
<rect x="1130.8" y="377.6" width="2.1" height="5.8" rx="1" fill="#cbc8cf"/>
<rect x="1134.6" y="375.9" width="2.1" height="7.5" rx="1" fill="#cbc8cf"/>
<rect x="1138.4" y="372.9" width="2.1" height="10.5" rx="1" fill="#cbc8cf"/>
<rect x="1112" y="272" width="290" height="1" fill="#222222"/>
<rect x="1112" y="251" width="2" height="147" fill="#aba68a"/>
</g></svg>
<svg x="-200" y="403" width="315" height="127" overflow="hidden"><g transform="translate(200,-403)">
<rect x="-200" y="403" width="313" height="127" fill="#193030"/>
<rect x="113" y="403" width="2" height="127" fill="#0b1817"/>
<text x="2" y="419.8" font-size="14.6" fill="#c9c9c9" stroke="#c9c9c9" stroke-width="0.4" text-anchor="start" textLength="76.9" lengthAdjust="spacingAndGlyphs">8000 1 (SFX)</text>
<polyline points="91.1,410.7 96.4,415.7 101.7,410.7" fill="none" stroke="#c9c9c9" stroke-width="1.5" stroke-linecap="round" stroke-linejoin="round"/>
<polygon points="-200,450 34,450 34,446 35,446 35,448 36,448 36,450 79,450 79,446 80,446 80,448 81,448 81,450 115,450 115,451 81,451 81,455.75 80,455.75 80,460 79,460 79,451 36,451 36,455.75 35,455.75 35,460 34,460 34,451 -200,451" fill="#22c3d2"/>
<rect x="-200" y="451" width="313" height="3" fill="rgba(205,196,152,0.72)"/>
<rect x="-200" y="476" width="315" height="1" fill="rgba(200,200,200,0.5)"/>
<rect x="-200" y="477" width="313" height="3" fill="rgba(163,206,233,0.62)"/>
<polygon points="-200,504 34,504 34,498 35,498 35,501 36,501 36,504 79,504 79,498 80,498 80,501 81,501 81,504 115,504 115,505 81,505 81,506.75 80,506.75 80,508.75 79,508.75 79,505 36,505 36,506.75 35,506.75 35,508.75 34,508.75 34,505 -200,505" fill="#22c3d2"/>
<rect x="-100" y="511.1" width="2.1" height="4.3" rx="1" fill="#cbc8cf"/>
<rect x="-96.2" y="509.6" width="2.1" height="5.8" rx="1" fill="#cbc8cf"/>
<rect x="-92.4" y="507.9" width="2.1" height="7.5" rx="1" fill="#cbc8cf"/>
<rect x="-88.6" y="504.9" width="2.1" height="10.5" rx="1" fill="#cbc8cf"/>
<circle cx="12" cy="511" r="12.5" fill="#120e15" fill-opacity="0.9" stroke="#c8c8c8" stroke-width="1.6"/>
<polygon points="7.47,504.53 11.56,508.34 14.23,503.42 13.81,509 19.32,508.02 14.69,511.17 18.89,514.86 13.55,513.21 13.27,518.8 11.24,513.59 6.7,516.86 9.5,512.02 4.12,510.51 9.65,509.68" fill="#c4c4c4"/>
</g></svg>
<svg x="282" y="403" width="87" height="127" overflow="hidden"><g transform="translate(-282,-403)">
<rect x="282" y="403" width="85" height="127" fill="#193030"/>
<rect x="367" y="403" width="2" height="127" fill="#0b1817"/>
<rect x="319.5" y="417.8" width="2" height="2" fill="#c9c9c9"/>
<rect x="322.5" y="417.8" width="2" height="2" fill="#c9c9c9"/>
<rect x="325.5" y="417.8" width="2" height="2" fill="#c9c9c9"/>
<text x="286.8" y="419.8" font-size="14.6" fill="#c9c9c9" stroke="#c9c9c9" stroke-width="0.4" text-anchor="start" textLength="32.1" lengthAdjust="spacingAndGlyphs">walki</text>
<polyline points="345.1,410.7 350.4,415.7 355.7,410.7" fill="none" stroke="#c9c9c9" stroke-width="1.5" stroke-linecap="round" stroke-linejoin="round"/>
<polygon points="282,450 304,450 304,446 305,446 305,448 306,448 306,450 349,450 349,446 350,446 350,448 351,448 351,450 369,450 369,451 351,451 351,455.75 350,455.75 350,460 349,460 349,451 306,451 306,455.75 305,455.75 305,460 304,460 304,451 282,451" fill="#22c3d2"/>
<rect x="282" y="462" width="85" height="3" fill="rgba(205,196,152,0.72)"/>
<rect x="282" y="476" width="87" height="1" fill="rgba(200,200,200,0.5)"/>
<rect x="282" y="477" width="85" height="3" fill="rgba(163,206,233,0.62)"/>
<polygon points="282,504 304,504 304,498 305,498 305,501 306,501 306,504 349,504 349,498 350,498 350,501 351,501 351,504 369,504 369,505 351,505 351,506.75 350,506.75 350,508.75 349,508.75 349,505 306,505 306,506.75 305,506.75 305,508.75 304,508.75 304,505 282,505" fill="#22c3d2"/>
<rect x="297" y="511.1" width="2.1" height="4.3" rx="1" fill="#cbc8cf"/>
<rect x="300.8" y="509.6" width="2.1" height="5.8" rx="1" fill="#cbc8cf"/>
<rect x="304.6" y="507.9" width="2.1" height="7.5" rx="1" fill="#cbc8cf"/>
<rect x="308.4" y="504.9" width="2.1" height="10.5" rx="1" fill="#cbc8cf"/>
<circle cx="339" cy="511" r="12.5" fill="#120e15" fill-opacity="0.9" stroke="#c8c8c8" stroke-width="1.6"/>
<g transform="translate(339,511)" fill="none" stroke="#c8c8c8" stroke-width="1.35" stroke-linecap="round"><path d="M2,-5.8 C1,-7.3 -1.6,-6.6 -2.3,-4.4 L-5.7,7.4 M-5.4,-1.6 L1.4,-1.6 M1.3,-1.6 L4.6,4.8 M5.8,-2.1 L-1.4,4.8"/></g>
<rect x="282" y="403" width="2" height="127" fill="#9eaaaa"/>
</g></svg>
<svg x="451" y="403" width="150" height="127" overflow="hidden"><g transform="translate(-451,-403)">
<rect x="451" y="403" width="148" height="127" fill="#193030"/>
<rect x="599" y="403" width="2" height="127" fill="#0b1817"/>
<rect x="547.7" y="417.8" width="2" height="2" fill="#c9c9c9"/>
<rect x="550.7" y="417.8" width="2" height="2" fill="#c9c9c9"/>
<rect x="553.7" y="417.8" width="2" height="2" fill="#c9c9c9"/>
<text x="455.8" y="419.8" font-size="14.6" fill="#c9c9c9" stroke="#c9c9c9" stroke-width="0.4" text-anchor="start" textLength="91.3" lengthAdjust="spacingAndGlyphs">walkingH2 480</text>
<polyline points="577.1,410.7 582.4,415.7 587.7,410.7" fill="none" stroke="#c9c9c9" stroke-width="1.5" stroke-linecap="round" stroke-linejoin="round"/>
<polygon points="451,450 474,450 474,446 475,446 475,448 476,448 476,450 519,450 519,446 520,446 520,448 521,448 521,450 565,450 565,446 566,446 566,448 567,448 567,450 601,450 601,451 567,451 567,455.75 566,455.75 566,460 565,460 565,451 521,451 521,455.75 520,455.75 520,460 519,460 519,451 476,451 476,455.75 475,455.75 475,460 474,460 474,451 451,451" fill="#22c3d2"/>
<rect x="451" y="462" width="148" height="3" fill="rgba(205,196,152,0.72)"/>
<rect x="451" y="476" width="150" height="1" fill="rgba(200,200,200,0.5)"/>
<rect x="451" y="477" width="148" height="3" fill="rgba(163,206,233,0.62)"/>
<polygon points="451,504 474,504 474,498 475,498 475,501 476,501 476,504 519,504 519,498 520,498 520,501 521,501 521,504 565,504 565,498 566,498 566,501 567,501 567,504 601,504 601,505 567,505 567,506.75 566,506.75 566,508.75 565,508.75 565,505 521,505 521,506.75 520,506.75 520,508.75 519,508.75 519,505 476,505 476,506.75 475,506.75 475,508.75 474,508.75 474,505 451,505" fill="#22c3d2"/>
<rect x="466" y="511.1" width="2.1" height="4.3" rx="1" fill="#cbc8cf"/>
<rect x="469.8" y="509.6" width="2.1" height="5.8" rx="1" fill="#cbc8cf"/>
<rect x="473.6" y="507.9" width="2.1" height="7.5" rx="1" fill="#cbc8cf"/>
<rect x="477.4" y="504.9" width="2.1" height="10.5" rx="1" fill="#cbc8cf"/>
<circle cx="509" cy="511" r="12.5" fill="#120e15" fill-opacity="0.9" stroke="#c8c8c8" stroke-width="1.6"/>
<g transform="translate(509,511)" fill="none" stroke="#c8c8c8" stroke-width="1.35" stroke-linecap="round"><path d="M2,-5.8 C1,-7.3 -1.6,-6.6 -2.3,-4.4 L-5.7,7.4 M-5.4,-1.6 L1.4,-1.6 M1.3,-1.6 L4.6,4.8 M5.8,-2.1 L-1.4,4.8"/></g>
<circle cx="543" cy="511" r="12.5" fill="#120e15" fill-opacity="0.9" stroke="#c8c8c8" stroke-width="1.6"/>
<polygon points="538.47,504.53 542.56,508.34 545.23,503.42 544.81,509 550.32,508.02 545.69,511.17 549.89,514.86 544.55,513.21 544.27,518.8 542.24,513.59 537.7,516.86 540.5,512.02 535.12,510.51 540.65,509.68" fill="#c4c4c4"/>
<rect x="451" y="403" width="2" height="127" fill="#9eaaaa"/>
</g></svg>
<svg x="627" y="403" width="66" height="127" overflow="hidden"><g transform="translate(-627,-403)">
<rect x="627" y="403" width="64" height="127" fill="#193030"/>
<rect x="691" y="403" width="2" height="127" fill="#0b1817"/>
<rect x="642.8" y="417.8" width="2" height="2" fill="#c9c9c9"/>
<rect x="645.8" y="417.8" width="2" height="2" fill="#c9c9c9"/>
<rect x="648.8" y="417.8" width="2" height="2" fill="#c9c9c9"/>
<text x="631.8" y="419.8" font-size="14.6" fill="#c9c9c9" stroke="#c9c9c9" stroke-width="0.4" text-anchor="start" textLength="10.4" lengthAdjust="spacingAndGlyphs">w</text>
<polyline points="669.1,410.7 674.4,415.7 679.7,410.7" fill="none" stroke="#c9c9c9" stroke-width="1.5" stroke-linecap="round" stroke-linejoin="round"/>
<polygon points="627,450 633,450 633,445.5 634,445.5 634,447.5 635,447.5 635,447.75 636,447.75 636,449.25 637,449.25 637,448.5 638,448.5 638,449.25 639,449.25 639,449.5 640,449.5 640,450 693,450 693,451 640,451 640,451.5 639,451.5 639,451.75 638,451.75 638,452.5 637,452.5 637,451.75 636,451.75 636,453.25 635,453.25 635,455 634,455 634,457 633,457 633,451 627,451" fill="#22c3d2"/>
<rect x="627" y="462" width="64" height="3" fill="rgba(205,196,152,0.72)"/>
<rect x="627" y="476" width="66" height="1" fill="rgba(200,200,200,0.5)"/>
<rect x="627" y="477" width="64" height="3" fill="rgba(163,206,233,0.62)"/>
<polygon points="627,504 633,504 633,495.5 634,495.5 634,499 635,499 635,501.25 636,501.25 636,500.5 637,500.5 637,500.75 638,500.75 638,502.75 639,502.75 639,502.5 640,502.5 640,503.25 641,503.25 641,503.75 642,503.75 642,503.5 643,503.5 643,503.75 645,503.75 645,504 693,504 693,505 645,505 645,505.25 643,505.25 643,505.5 642,505.5 642,505.25 641,505.25 641,505.75 640,505.75 640,506.5 639,506.5 639,506.25 638,506.25 638,508.25 637,508.25 637,508.5 636,508.5 636,507.75 635,507.75 635,513.25 634,513.25 634,517 633,517 633,505 627,505" fill="#22c3d2"/>
<rect x="642" y="511.1" width="2.1" height="4.3" rx="1" fill="#cbc8cf"/>
<rect x="645.8" y="509.6" width="2.1" height="5.8" rx="1" fill="#cbc8cf"/>
<rect x="649.6" y="507.9" width="2.1" height="7.5" rx="1" fill="#cbc8cf"/>
<rect x="653.4" y="504.9" width="2.1" height="10.5" rx="1" fill="#cbc8cf"/>
<rect x="627" y="403" width="2" height="127" fill="#9eaaaa"/>
</g></svg>
<svg x="762" y="403" width="66" height="127" overflow="hidden"><g transform="translate(-762,-403)">
<rect x="762" y="403" width="64" height="127" fill="#193030"/>
<rect x="826" y="403" width="2" height="127" fill="#0b1817"/>
<rect x="777.8" y="417.8" width="2" height="2" fill="#c9c9c9"/>
<rect x="780.8" y="417.8" width="2" height="2" fill="#c9c9c9"/>
<rect x="783.8" y="417.8" width="2" height="2" fill="#c9c9c9"/>
<text x="766.8" y="419.8" font-size="14.6" fill="#c9c9c9" stroke="#c9c9c9" stroke-width="0.4" text-anchor="start" textLength="10.4" lengthAdjust="spacingAndGlyphs">w</text>
<polyline points="804.1,410.7 809.4,415.7 814.7,410.7" fill="none" stroke="#c9c9c9" stroke-width="1.5" stroke-linecap="round" stroke-linejoin="round"/>
<polygon points="762,450 794,450 794,448 795,448 795,449 796,449 796,449 797,449 797,449.75 798,449.75 798,450 828,450 828,451 798,451 798,451.25 797,451.25 797,452 796,452 796,452.5 795,452.5 795,453.5 794,453.5 794,451 762,451" fill="#22c3d2"/>
<rect x="762" y="471" width="64" height="3" fill="rgba(205,196,152,0.72)"/>
<rect x="762" y="476" width="66" height="1" fill="rgba(200,200,200,0.5)"/>
<rect x="762" y="477" width="64" height="3" fill="rgba(163,206,233,0.62)"/>
<polygon points="762,504 794,504 794,499.5 795,499.5 795,501.5 796,501.5 796,502 797,502 797,502.5 798,502.5 798,503.25 799,503.25 799,503.75 802,503.75 802,504 828,504 828,505 802,505 802,505.25 799,505.25 799,505.75 798,505.75 798,506.5 797,506.5 797,507 796,507 796,508.75 795,508.75 795,510.5 794,510.5 794,505 762,505" fill="#22c3d2"/>
<rect x="777" y="511.1" width="2.1" height="4.3" rx="1" fill="#cbc8cf"/>
<rect x="780.8" y="509.6" width="2.1" height="5.8" rx="1" fill="#cbc8cf"/>
<rect x="784.6" y="507.9" width="2.1" height="7.5" rx="1" fill="#cbc8cf"/>
<rect x="788.4" y="504.9" width="2.1" height="10.5" rx="1" fill="#cbc8cf"/>
<rect x="762" y="403" width="2" height="127" fill="#9eaaaa"/>
</g></svg>
<svg x="1092" y="403" width="34" height="127" overflow="hidden"><g transform="translate(-1092,-403)">
<rect x="1092" y="403" width="32" height="127" fill="#193030"/>
<rect x="1124" y="403" width="2" height="127" fill="#0b1817"/>
<rect x="1107.8" y="417.8" width="2" height="2" fill="#c9c9c9"/>
<rect x="1110.8" y="417.8" width="2" height="2" fill="#c9c9c9"/>
<rect x="1113.8" y="417.8" width="2" height="2" fill="#c9c9c9"/>
<text x="1096.8" y="419.8" font-size="14.6" fill="#c9c9c9" stroke="#c9c9c9" stroke-width="0.4" text-anchor="start" textLength="10.4" lengthAdjust="spacingAndGlyphs">w</text>
<polygon points="1092,450 1097,450 1097,445.5 1098,445.5 1098,447.5 1099,447.5 1099,447.5 1100,447.5 1100,448.75 1101,448.75 1101,449 1102,449 1102,449.5 1103,449.5 1103,449.75 1104,449.75 1104,450 1126,450 1126,451 1104,451 1104,451.25 1103,451.25 1103,451.5 1102,451.5 1102,452 1101,452 1101,452.25 1100,452.25 1100,453.5 1099,453.5 1099,455 1098,455 1098,457 1097,457 1097,451 1092,451" fill="#22c3d2"/>
<rect x="1092" y="468" width="32" height="3" fill="rgba(205,196,152,0.72)"/>
<rect x="1092" y="476" width="34" height="1" fill="rgba(200,200,200,0.5)"/>
<rect x="1092" y="477" width="32" height="3" fill="rgba(163,206,233,0.62)"/>
<polygon points="1092,504 1097,504 1097,495.5 1098,495.5 1098,499 1099,499 1099,501.25 1100,501.25 1100,502 1101,502 1101,502.5 1102,502.5 1102,501.75 1103,501.75 1103,502.5 1104,502.5 1104,503.5 1105,503.5 1105,503.25 1106,503.25 1106,503.5 1107,503.5 1107,503.75 1108,503.75 1108,504 1126,504 1126,505 1108,505 1108,505.25 1107,505.25 1107,505.5 1106,505.5 1106,505.75 1105,505.75 1105,505.5 1104,505.5 1104,506.5 1103,506.5 1103,507.25 1102,507.25 1102,506.5 1101,506.5 1101,507 1100,507 1100,507.75 1099,507.75 1099,513.25 1098,513.25 1098,517 1097,517 1097,505 1092,505" fill="#22c3d2"/>
<rect x="-100" y="511.1" width="2.1" height="4.3" rx="1" fill="#cbc8cf"/>
<rect x="-96.2" y="509.6" width="2.1" height="5.8" rx="1" fill="#cbc8cf"/>
<rect x="-92.4" y="507.9" width="2.1" height="7.5" rx="1" fill="#cbc8cf"/>
<rect x="-88.6" y="504.9" width="2.1" height="10.5" rx="1" fill="#cbc8cf"/>
<rect x="1092" y="403" width="2" height="127" fill="#9eaaaa"/>
</g></svg>
<svg x="1126" y="403" width="276" height="127" overflow="hidden"><g transform="translate(-1126,-403)">
<rect x="1126" y="403" width="274" height="127" fill="#193030"/>
<text x="1130.8" y="419.8" font-size="14.6" fill="#c9c9c9" stroke="#c9c9c9" stroke-width="0.4" text-anchor="start" textLength="116.8" lengthAdjust="spacingAndGlyphs">walkingH2 48000 1</text>
<polygon points="1126,450 1139,450 1139,446 1140,446 1140,448 1141,448 1141,450 1171,450 1171,446 1172,446 1172,448 1173,448 1173,450 1200,450 1200,446 1201,446 1201,448 1202,448 1202,450 1232,450 1232,446 1233,446 1233,448 1234,448 1234,450 1264,450 1264,446 1265,446 1265,448 1266,448 1266,450 1295,450 1295,446 1296,446 1296,448 1297,448 1297,450 1325,450 1325,446 1326,446 1326,448 1327,448 1327,450 1402,450 1402,451 1327,451 1327,455.75 1326,455.75 1326,460 1325,460 1325,451 1297,451 1297,455.75 1296,455.75 1296,460 1295,460 1295,451 1266,451 1266,455.75 1265,455.75 1265,460 1264,460 1264,451 1234,451 1234,455.75 1233,455.75 1233,460 1232,460 1232,451 1202,451 1202,455.75 1201,455.75 1201,460 1200,460 1200,451 1173,451 1173,455.75 1172,455.75 1172,460 1171,460 1171,451 1141,451 1141,455.75 1140,455.75 1140,460 1139,460 1139,451 1126,451" fill="#22c3d2"/>
<rect x="1126" y="468" width="274" height="3" fill="rgba(205,196,152,0.72)"/>
<rect x="1126" y="476" width="276" height="1" fill="rgba(200,200,200,0.5)"/>
<rect x="1126" y="477" width="274" height="3" fill="rgba(163,206,233,0.62)"/>
<polygon points="1126,504 1139,504 1139,498 1140,498 1140,501 1141,501 1141,504 1171,504 1171,498 1172,498 1172,501 1173,501 1173,504 1200,504 1200,498 1201,498 1201,501 1202,501 1202,504 1232,504 1232,498 1233,498 1233,501 1234,501 1234,504 1264,504 1264,498 1265,498 1265,501 1266,501 1266,504 1295,504 1295,498 1296,498 1296,501 1297,501 1297,504 1325,504 1325,498 1326,498 1326,501 1327,501 1327,504 1402,504 1402,505 1327,505 1327,506.75 1326,506.75 1326,508.75 1325,508.75 1325,505 1297,505 1297,506.75 1296,506.75 1296,508.75 1295,508.75 1295,505 1266,505 1266,506.75 1265,506.75 1265,508.75 1264,508.75 1264,505 1234,505 1234,506.75 1233,506.75 1233,508.75 1232,508.75 1232,505 1202,505 1202,506.75 1201,506.75 1201,508.75 1200,508.75 1200,505 1173,505 1173,506.75 1172,506.75 1172,508.75 1171,508.75 1171,505 1141,505 1141,506.75 1140,506.75 1140,508.75 1139,508.75 1139,505 1126,505" fill="#22c3d2"/>
<rect x="1141" y="511.1" width="2.1" height="4.3" rx="1" fill="#cbc8cf"/>
<rect x="1144.8" y="509.6" width="2.1" height="5.8" rx="1" fill="#cbc8cf"/>
<rect x="1148.6" y="507.9" width="2.1" height="7.5" rx="1" fill="#cbc8cf"/>
<rect x="1152.4" y="504.9" width="2.1" height="10.5" rx="1" fill="#cbc8cf"/>
<rect x="1126" y="403" width="2" height="127" fill="#9eaaaa"/>
</g></svg>
<svg x="-4" y="535" width="32" height="91" overflow="hidden"><g transform="translate(4,-535)">
<rect x="-4" y="535" width="30" height="91" fill="#3b1d3d"/>
<rect x="26" y="535" width="2" height="91" fill="#1c0e1d"/>
<rect x="9.2" y="550" width="2" height="2" fill="#c9c9c9"/>
<rect x="12.2" y="550" width="2" height="2" fill="#c9c9c9"/>
<rect x="15.2" y="550" width="2" height="2" fill="#c9c9c9"/>
<text x="1.9" y="552" font-size="14.6" fill="#c9c9c9" stroke="#c9c9c9" stroke-width="0.4" text-anchor="start" textLength="6.7" lengthAdjust="spacingAndGlyphs">b</text>
<polygon points="-4,573 9,573 9,572.25 10,572.25 10,573 28,573 28,574 10,574 10,574.75 9,574.75 9,574 -4,574" fill="#e04ae4"/>
<rect x="-4" y="582" width="30" height="3" fill="rgba(205,196,152,0.72)"/>
<rect x="-4" y="590" width="32" height="1" fill="rgba(200,200,200,0.5)"/>
<rect x="-4" y="591" width="30" height="3" fill="rgba(163,206,233,0.62)"/>
<polygon points="-4,609 5,609 5,608.5 9,608.5 9,608.75 12,608.75 12,609 13,609 13,608.75 15,608.75 15,609 28,609 28,610 15,610 15,610.25 13,610.25 13,610 12,610 12,610.25 9,610.25 9,610.5 5,610.5 5,610 -4,610" fill="#e04ae4"/>
</g></svg>
<svg x="46" y="535" width="32" height="91" overflow="hidden"><g transform="translate(-46,-535)">
<rect x="46" y="535" width="30" height="91" fill="#3b1d3d"/>
<rect x="76" y="535" width="2" height="91" fill="#1c0e1d"/>
<rect x="59.2" y="550" width="2" height="2" fill="#c9c9c9"/>
<rect x="62.2" y="550" width="2" height="2" fill="#c9c9c9"/>
<rect x="65.2" y="550" width="2" height="2" fill="#c9c9c9"/>
<text x="51.9" y="552" font-size="14.6" fill="#c9c9c9" stroke="#c9c9c9" stroke-width="0.4" text-anchor="start" textLength="6.7" lengthAdjust="spacingAndGlyphs">b</text>
<polygon points="46,573 59,573 59,572.25 60,572.25 60,573 78,573 78,574 60,574 60,574.75 59,574.75 59,574 46,574" fill="#e04ae4"/>
<rect x="46" y="582" width="30" height="3" fill="rgba(205,196,152,0.72)"/>
<rect x="46" y="590" width="32" height="1" fill="rgba(200,200,200,0.5)"/>
<rect x="46" y="591" width="30" height="3" fill="rgba(163,206,233,0.62)"/>
<polygon points="46,609 55,609 55,608.75 56,608.75 56,608.5 60,608.5 60,608.25 61,608.25 61,608.5 65,608.5 65,609 78,609 78,610 65,610 65,610.5 61,610.5 61,610.75 60,610.75 60,610.5 56,610.5 56,610.25 55,610.25 55,610 46,610" fill="#e04ae4"/>
<rect x="46" y="535" width="2" height="91" fill="#a898a8"/>
</g></svg>
<svg x="267" y="535" width="31" height="91" overflow="hidden"><g transform="translate(-267,-535)">
<rect x="267" y="535" width="29" height="91" fill="#3b1d3d"/>
<rect x="296" y="535" width="2" height="91" fill="#1c0e1d"/>
<rect x="280.2" y="550" width="2" height="2" fill="#c9c9c9"/>
<rect x="283.2" y="550" width="2" height="2" fill="#c9c9c9"/>
<rect x="286.2" y="550" width="2" height="2" fill="#c9c9c9"/>
<text x="272.9" y="552" font-size="14.6" fill="#c9c9c9" stroke="#c9c9c9" stroke-width="0.4" text-anchor="start" textLength="6.7" lengthAdjust="spacingAndGlyphs">b</text>
<polygon points="267,573 280,573 280,572.25 281,572.25 281,573 298,573 298,574 281,574 281,574.75 280,574.75 280,574 267,574" fill="#e04ae4"/>
<rect x="267" y="582" width="29" height="3" fill="rgba(205,196,152,0.72)"/>
<rect x="267" y="590" width="31" height="1" fill="rgba(200,200,200,0.5)"/>
<rect x="267" y="591" width="29" height="3" fill="rgba(163,206,233,0.62)"/>
<polygon points="267,609 276,609 276,608.75 282,608.75 282,608.5 286,608.5 286,609 298,609 298,610 286,610 286,610.5 282,610.5 282,610.25 276,610.25 276,610 267,610" fill="#e04ae4"/>
<rect x="267" y="535" width="2" height="91" fill="#a898a8"/>
</g></svg>
<svg x="312" y="535" width="31" height="91" overflow="hidden"><g transform="translate(-312,-535)">
<rect x="312" y="535" width="29" height="91" fill="#3b1d3d"/>
<rect x="341" y="535" width="2" height="91" fill="#1c0e1d"/>
<rect x="325.2" y="550" width="2" height="2" fill="#c9c9c9"/>
<rect x="328.2" y="550" width="2" height="2" fill="#c9c9c9"/>
<rect x="331.2" y="550" width="2" height="2" fill="#c9c9c9"/>
<text x="317.9" y="552" font-size="14.6" fill="#c9c9c9" stroke="#c9c9c9" stroke-width="0.4" text-anchor="start" textLength="6.7" lengthAdjust="spacingAndGlyphs">b</text>
<polygon points="312,573 325,573 325,572.25 326,572.25 326,572.75 327,572.75 327,573 343,573 343,574 327,574 327,574.25 326,574.25 326,574.75 325,574.75 325,574 312,574" fill="#e04ae4"/>
<rect x="312" y="582" width="29" height="3" fill="rgba(205,196,152,0.72)"/>
<rect x="312" y="590" width="31" height="1" fill="rgba(200,200,200,0.5)"/>
<rect x="312" y="591" width="29" height="3" fill="rgba(163,206,233,0.62)"/>
<polygon points="312,609 321,609 321,608.25 323,608.25 323,608.5 324,608.5 324,608.75 325,608.75 325,608.5 327,608.5 327,608.75 330,608.75 330,608.5 331,608.5 331,609 343,609 343,610 331,610 331,610.5 330,610.5 330,610.25 327,610.25 327,610.5 325,610.5 325,610.25 324,610.25 324,610.5 323,610.5 323,610.75 321,610.75 321,610 312,610" fill="#e04ae4"/>
<rect x="312" y="535" width="2" height="91" fill="#a898a8"/>
</g></svg>
<svg x="438" y="535" width="31" height="91" overflow="hidden"><g transform="translate(-438,-535)">
<rect x="438" y="535" width="29" height="91" fill="#3b1d3d"/>
<rect x="467" y="535" width="2" height="91" fill="#1c0e1d"/>
<rect x="451.2" y="550" width="2" height="2" fill="#c9c9c9"/>
<rect x="454.2" y="550" width="2" height="2" fill="#c9c9c9"/>
<rect x="457.2" y="550" width="2" height="2" fill="#c9c9c9"/>
<text x="443.9" y="552" font-size="14.6" fill="#c9c9c9" stroke="#c9c9c9" stroke-width="0.4" text-anchor="start" textLength="6.7" lengthAdjust="spacingAndGlyphs">b</text>
<polygon points="438,573 451,573 451,572.25 452,572.25 452,573 469,573 469,574 452,574 452,574.75 451,574.75 451,574 438,574" fill="#e04ae4"/>
<rect x="438" y="582" width="29" height="3" fill="rgba(205,196,152,0.72)"/>
<rect x="438" y="590" width="31" height="1" fill="rgba(200,200,200,0.5)"/>
<rect x="438" y="591" width="29" height="3" fill="rgba(163,206,233,0.62)"/>
<polygon points="438,609 447,609 447,608.5 450,608.5 450,608.75 454,608.75 454,609 455,609 455,608.5 456,608.5 456,608.25 457,608.25 457,609 469,609 469,610 457,610 457,610.75 456,610.75 456,610.5 455,610.5 455,610 454,610 454,610.25 450,610.25 450,610.5 447,610.5 447,610 438,610" fill="#e04ae4"/>
<rect x="438" y="535" width="2" height="91" fill="#a898a8"/>
</g></svg>
<svg x="481" y="535" width="31" height="91" overflow="hidden"><g transform="translate(-481,-535)">
<rect x="481" y="535" width="29" height="91" fill="#3b1d3d"/>
<rect x="510" y="535" width="2" height="91" fill="#1c0e1d"/>
<rect x="494.2" y="550" width="2" height="2" fill="#c9c9c9"/>
<rect x="497.2" y="550" width="2" height="2" fill="#c9c9c9"/>
<rect x="500.2" y="550" width="2" height="2" fill="#c9c9c9"/>
<text x="486.9" y="552" font-size="14.6" fill="#c9c9c9" stroke="#c9c9c9" stroke-width="0.4" text-anchor="start" textLength="6.7" lengthAdjust="spacingAndGlyphs">b</text>
<polygon points="481,573 494,573 494,572.25 495,572.25 495,573 512,573 512,574 495,574 495,574.75 494,574.75 494,574 481,574" fill="#e04ae4"/>
<rect x="481" y="582" width="29" height="3" fill="rgba(205,196,152,0.72)"/>
<rect x="481" y="590" width="31" height="1" fill="rgba(200,200,200,0.5)"/>
<rect x="481" y="591" width="29" height="3" fill="rgba(163,206,233,0.62)"/>
<polygon points="481,609 490,609 490,608.5 491,608.5 491,608.75 494,608.75 494,608.5 495,608.5 495,608.25 500,608.25 500,609 512,609 512,610 500,610 500,610.75 495,610.75 495,610.5 494,610.5 494,610.25 491,610.25 491,610.5 490,610.5 490,610 481,610" fill="#e04ae4"/>
<rect x="481" y="535" width="2" height="91" fill="#a898a8"/>
</g></svg>
<svg x="528" y="535" width="31" height="91" overflow="hidden"><g transform="translate(-528,-535)">
<rect x="528" y="535" width="29" height="91" fill="#3b1d3d"/>
<rect x="557" y="535" width="2" height="91" fill="#1c0e1d"/>
<rect x="541.2" y="550" width="2" height="2" fill="#c9c9c9"/>
<rect x="544.2" y="550" width="2" height="2" fill="#c9c9c9"/>
<rect x="547.2" y="550" width="2" height="2" fill="#c9c9c9"/>
<text x="533.9" y="552" font-size="14.6" fill="#c9c9c9" stroke="#c9c9c9" stroke-width="0.4" text-anchor="start" textLength="6.7" lengthAdjust="spacingAndGlyphs">b</text>
<polygon points="528,573 541,573 541,572.25 542,572.25 542,573 559,573 559,574 542,574 542,574.75 541,574.75 541,574 528,574" fill="#e04ae4"/>
<rect x="528" y="582" width="29" height="3" fill="rgba(205,196,152,0.72)"/>
<rect x="528" y="590" width="31" height="1" fill="rgba(200,200,200,0.5)"/>
<rect x="528" y="591" width="29" height="3" fill="rgba(163,206,233,0.62)"/>
<polygon points="528,609 537,609 537,608.5 538,608.5 538,608.75 542,608.75 542,608.5 543,608.5 543,608.75 546,608.75 546,608.5 547,608.5 547,609 559,609 559,610 547,610 547,610.5 546,610.5 546,610.25 543,610.25 543,610.5 542,610.5 542,610.25 538,610.25 538,610.5 537,610.5 537,610 528,610" fill="#e04ae4"/>
<rect x="528" y="535" width="2" height="91" fill="#a898a8"/>
</g></svg>
<svg x="1112" y="535" width="31" height="91" overflow="hidden"><g transform="translate(-1112,-535)">
<rect x="1112" y="535" width="29" height="91" fill="#3b1d3d"/>
<rect x="1141" y="535" width="2" height="91" fill="#1c0e1d"/>
<rect x="1125.2" y="550" width="2" height="2" fill="#c9c9c9"/>
<rect x="1128.2" y="550" width="2" height="2" fill="#c9c9c9"/>
<rect x="1131.2" y="550" width="2" height="2" fill="#c9c9c9"/>
<text x="1117.9" y="552" font-size="14.6" fill="#c9c9c9" stroke="#c9c9c9" stroke-width="0.4" text-anchor="start" textLength="6.7" lengthAdjust="spacingAndGlyphs">b</text>
<polygon points="1112,573 1125,573 1125,572.25 1126,572.25 1126,573 1143,573 1143,574 1126,574 1126,574.75 1125,574.75 1125,574 1112,574" fill="#e04ae4"/>
<rect x="1112" y="582" width="29" height="3" fill="rgba(205,196,152,0.72)"/>
<rect x="1112" y="590" width="31" height="1" fill="rgba(200,200,200,0.5)"/>
<rect x="1112" y="591" width="29" height="3" fill="rgba(163,206,233,0.62)"/>
<polygon points="1112,609 1121,609 1121,608.75 1122,608.75 1122,608.5 1123,608.5 1123,608.75 1124,608.75 1124,609 1125,609 1125,608.75 1126,608.75 1126,608.5 1131,608.5 1131,609 1143,609 1143,610 1131,610 1131,610.5 1126,610.5 1126,610.25 1125,610.25 1125,610 1124,610 1124,610.25 1123,610.25 1123,610.5 1122,610.5 1122,610.25 1121,610.25 1121,610 1112,610" fill="#e04ae4"/>
<rect x="1112" y="535" width="2" height="91" fill="#a898a8"/>
</g></svg>
<svg x="1143" y="535" width="31" height="91" overflow="hidden"><g transform="translate(-1143,-535)">
<rect x="1143" y="535" width="29" height="91" fill="#3b1d3d"/>
<rect x="1172" y="535" width="2" height="91" fill="#1c0e1d"/>
<rect x="1156.2" y="550" width="2" height="2" fill="#c9c9c9"/>
<rect x="1159.2" y="550" width="2" height="2" fill="#c9c9c9"/>
<rect x="1162.2" y="550" width="2" height="2" fill="#c9c9c9"/>
<text x="1148.9" y="552" font-size="14.6" fill="#c9c9c9" stroke="#c9c9c9" stroke-width="0.4" text-anchor="start" textLength="6.7" lengthAdjust="spacingAndGlyphs">b</text>
<polygon points="1143,573 1155,573 1155,572.75 1156,572.75 1156,572 1157,572 1157,573 1174,573 1174,574 1157,574 1157,575 1156,575 1156,574.25 1155,574.25 1155,574 1143,574" fill="#e04ae4"/>
<rect x="1143" y="582" width="29" height="3" fill="rgba(205,196,152,0.72)"/>
<rect x="1143" y="590" width="31" height="1" fill="rgba(200,200,200,0.5)"/>
<rect x="1143" y="591" width="29" height="3" fill="rgba(163,206,233,0.62)"/>
<polygon points="1143,609 1152,609 1152,608.5 1157,608.5 1157,608.75 1162,608.75 1162,609 1174,609 1174,610 1162,610 1162,610.25 1157,610.25 1157,610.5 1152,610.5 1152,610 1143,610" fill="#e04ae4"/>
<rect x="1143" y="535" width="2" height="91" fill="#a898a8"/>
</g></svg>
<svg x="1174" y="535" width="31" height="91" overflow="hidden"><g transform="translate(-1174,-535)">
<rect x="1174" y="535" width="29" height="91" fill="#3b1d3d"/>
<rect x="1203" y="535" width="2" height="91" fill="#1c0e1d"/>
<rect x="1187.2" y="550" width="2" height="2" fill="#c9c9c9"/>
<rect x="1190.2" y="550" width="2" height="2" fill="#c9c9c9"/>
<rect x="1193.2" y="550" width="2" height="2" fill="#c9c9c9"/>
<text x="1179.9" y="552" font-size="14.6" fill="#c9c9c9" stroke="#c9c9c9" stroke-width="0.4" text-anchor="start" textLength="6.7" lengthAdjust="spacingAndGlyphs">b</text>
<polygon points="1174,573 1187,573 1187,572.25 1188,572.25 1188,573 1205,573 1205,574 1188,574 1188,574.75 1187,574.75 1187,574 1174,574" fill="#e04ae4"/>
<rect x="1174" y="582" width="29" height="3" fill="rgba(205,196,152,0.72)"/>
<rect x="1174" y="590" width="31" height="1" fill="rgba(200,200,200,0.5)"/>
<rect x="1174" y="591" width="29" height="3" fill="rgba(163,206,233,0.62)"/>
<polygon points="1174,609 1183,609 1183,608.5 1184,608.5 1184,608.75 1188,608.75 1188,609 1191,609 1191,608.75 1192,608.75 1192,608.5 1193,608.5 1193,609 1205,609 1205,610 1193,610 1193,610.5 1192,610.5 1192,610.25 1191,610.25 1191,610 1188,610 1188,610.25 1184,610.25 1184,610.5 1183,610.5 1183,610 1174,610" fill="#e04ae4"/>
<rect x="1174" y="535" width="2" height="91" fill="#a898a8"/>
</g></svg>
<svg x="1205" y="535" width="32" height="91" overflow="hidden"><g transform="translate(-1205,-535)">
<rect x="1205" y="535" width="30" height="91" fill="#3b1d3d"/>
<rect x="1235" y="535" width="2" height="91" fill="#1c0e1d"/>
<rect x="1218.2" y="550" width="2" height="2" fill="#c9c9c9"/>
<rect x="1221.2" y="550" width="2" height="2" fill="#c9c9c9"/>
<rect x="1224.2" y="550" width="2" height="2" fill="#c9c9c9"/>
<text x="1210.9" y="552" font-size="14.6" fill="#c9c9c9" stroke="#c9c9c9" stroke-width="0.4" text-anchor="start" textLength="6.7" lengthAdjust="spacingAndGlyphs">b</text>
<polygon points="1205,573 1218,573 1218,572 1219,572 1219,572.75 1220,572.75 1220,573 1237,573 1237,574 1220,574 1220,574.25 1219,574.25 1219,575 1218,575 1218,574 1205,574" fill="#e04ae4"/>
<rect x="1205" y="582" width="30" height="3" fill="rgba(205,196,152,0.72)"/>
<rect x="1205" y="590" width="32" height="1" fill="rgba(200,200,200,0.5)"/>
<rect x="1205" y="591" width="30" height="3" fill="rgba(163,206,233,0.62)"/>
<polygon points="1205,609 1214,609 1214,608.5 1215,608.5 1215,608.25 1217,608.25 1217,608.5 1220,608.5 1220,608.25 1222,608.25 1222,608.5 1224,608.5 1224,609 1237,609 1237,610 1224,610 1224,610.5 1222,610.5 1222,610.75 1220,610.75 1220,610.5 1217,610.5 1217,610.75 1215,610.75 1215,610.5 1214,610.5 1214,610 1205,610" fill="#e04ae4"/>
<rect x="1205" y="535" width="2" height="91" fill="#a898a8"/>
</g></svg>
<svg x="1237" y="535" width="31" height="91" overflow="hidden"><g transform="translate(-1237,-535)">
<rect x="1237" y="535" width="29" height="91" fill="#3b1d3d"/>
<rect x="1266" y="535" width="2" height="91" fill="#1c0e1d"/>
<rect x="1250.2" y="550" width="2" height="2" fill="#c9c9c9"/>
<rect x="1253.2" y="550" width="2" height="2" fill="#c9c9c9"/>
<rect x="1256.2" y="550" width="2" height="2" fill="#c9c9c9"/>
<text x="1242.9" y="552" font-size="14.6" fill="#c9c9c9" stroke="#c9c9c9" stroke-width="0.4" text-anchor="start" textLength="6.7" lengthAdjust="spacingAndGlyphs">b</text>
<polygon points="1237,573 1250,573 1250,572.25 1251,572.25 1251,573 1268,573 1268,574 1251,574 1251,574.75 1250,574.75 1250,574 1237,574" fill="#e04ae4"/>
<rect x="1237" y="582" width="29" height="3" fill="rgba(205,196,152,0.72)"/>
<rect x="1237" y="590" width="31" height="1" fill="rgba(200,200,200,0.5)"/>
<rect x="1237" y="591" width="29" height="3" fill="rgba(163,206,233,0.62)"/>
<polygon points="1237,609 1246,609 1246,608.5 1248,608.5 1248,608.75 1256,608.75 1256,609 1268,609 1268,610 1256,610 1256,610.25 1248,610.25 1248,610.5 1246,610.5 1246,610 1237,610" fill="#e04ae4"/>
<rect x="1237" y="535" width="2" height="91" fill="#a898a8"/>
</g></svg>
<svg x="1268" y="535" width="31" height="91" overflow="hidden"><g transform="translate(-1268,-535)">
<rect x="1268" y="535" width="29" height="91" fill="#3b1d3d"/>
<rect x="1297" y="535" width="2" height="91" fill="#1c0e1d"/>
<rect x="1281.2" y="550" width="2" height="2" fill="#c9c9c9"/>
<rect x="1284.2" y="550" width="2" height="2" fill="#c9c9c9"/>
<rect x="1287.2" y="550" width="2" height="2" fill="#c9c9c9"/>
<text x="1273.9" y="552" font-size="14.6" fill="#c9c9c9" stroke="#c9c9c9" stroke-width="0.4" text-anchor="start" textLength="6.7" lengthAdjust="spacingAndGlyphs">b</text>
<polygon points="1268,573 1281,573 1281,572 1282,572 1282,572.75 1283,572.75 1283,573 1299,573 1299,574 1283,574 1283,574.25 1282,574.25 1282,575 1281,575 1281,574 1268,574" fill="#e04ae4"/>
<rect x="1268" y="582" width="29" height="3" fill="rgba(205,196,152,0.72)"/>
<rect x="1268" y="590" width="31" height="1" fill="rgba(200,200,200,0.5)"/>
<rect x="1268" y="591" width="29" height="3" fill="rgba(163,206,233,0.62)"/>
<polygon points="1268,609 1277,609 1277,608.75 1280,608.75 1280,609 1281,609 1281,608.75 1282,608.75 1282,608.5 1287,608.5 1287,609 1299,609 1299,610 1287,610 1287,610.5 1282,610.5 1282,610.25 1281,610.25 1281,610 1280,610 1280,610.25 1277,610.25 1277,610 1268,610" fill="#e04ae4"/>
<rect x="1268" y="535" width="2" height="91" fill="#a898a8"/>
</g></svg>
<svg x="1298" y="535" width="32" height="91" overflow="hidden"><g transform="translate(-1298,-535)">
<rect x="1298" y="535" width="30" height="91" fill="#3b1d3d"/>
<rect x="1328" y="535" width="2" height="91" fill="#1c0e1d"/>
<rect x="1311.2" y="550" width="2" height="2" fill="#c9c9c9"/>
<rect x="1314.2" y="550" width="2" height="2" fill="#c9c9c9"/>
<rect x="1317.2" y="550" width="2" height="2" fill="#c9c9c9"/>
<text x="1303.9" y="552" font-size="14.6" fill="#c9c9c9" stroke="#c9c9c9" stroke-width="0.4" text-anchor="start" textLength="6.7" lengthAdjust="spacingAndGlyphs">b</text>
<polygon points="1298,573 1311,573 1311,572.25 1312,572.25 1312,573 1330,573 1330,574 1312,574 1312,574.75 1311,574.75 1311,574 1298,574" fill="#e04ae4"/>
<rect x="1298" y="582" width="30" height="3" fill="rgba(205,196,152,0.72)"/>
<rect x="1298" y="590" width="32" height="1" fill="rgba(200,200,200,0.5)"/>
<rect x="1298" y="591" width="30" height="3" fill="rgba(163,206,233,0.62)"/>
<polygon points="1298,609 1307,609 1307,608.75 1313,608.75 1313,608.5 1316,608.5 1316,608.75 1317,608.75 1317,609 1330,609 1330,610 1317,610 1317,610.25 1316,610.25 1316,610.5 1313,610.5 1313,610.25 1307,610.25 1307,610 1298,610" fill="#e04ae4"/>
<rect x="1298" y="535" width="2" height="91" fill="#a898a8"/>
</g></svg>
<svg x="1330" y="535" width="31" height="91" overflow="hidden"><g transform="translate(-1330,-535)">
<rect x="1330" y="535" width="29" height="91" fill="#3b1d3d"/>
<rect x="1359" y="535" width="2" height="91" fill="#1c0e1d"/>
<rect x="1343.2" y="550" width="2" height="2" fill="#c9c9c9"/>
<rect x="1346.2" y="550" width="2" height="2" fill="#c9c9c9"/>
<rect x="1349.2" y="550" width="2" height="2" fill="#c9c9c9"/>
<text x="1335.9" y="552" font-size="14.6" fill="#c9c9c9" stroke="#c9c9c9" stroke-width="0.4" text-anchor="start" textLength="6.7" lengthAdjust="spacingAndGlyphs">b</text>
<polygon points="1330,573 1343,573 1343,572.25 1344,572.25 1344,573 1361,573 1361,574 1344,574 1344,574.75 1343,574.75 1343,574 1330,574" fill="#e04ae4"/>
<rect x="1330" y="582" width="29" height="3" fill="rgba(205,196,152,0.72)"/>
<rect x="1330" y="590" width="31" height="1" fill="rgba(200,200,200,0.5)"/>
<rect x="1330" y="591" width="29" height="3" fill="rgba(163,206,233,0.62)"/>
<polygon points="1330,609 1339,609 1339,608.5 1342,608.5 1342,608.75 1343,608.75 1343,608.5 1346,608.5 1346,608.75 1347,608.75 1347,608.5 1349,608.5 1349,609 1361,609 1361,610 1349,610 1349,610.5 1347,610.5 1347,610.25 1346,610.25 1346,610.5 1343,610.5 1343,610.25 1342,610.25 1342,610.5 1339,610.5 1339,610 1330,610" fill="#e04ae4"/>
<rect x="1330" y="535" width="2" height="91" fill="#a898a8"/>
</g></svg>
<svg x="-25" y="631" width="32" height="84" overflow="hidden"><g transform="translate(25,-631)">
<rect x="-25" y="631" width="30" height="84" fill="#2b3a1e"/>
<rect x="5" y="631" width="2" height="84" fill="#141c0d"/>
<rect x="-11.8" y="646" width="2" height="2" fill="#c9c9c9"/>
<rect x="-8.8" y="646" width="2" height="2" fill="#c9c9c9"/>
<rect x="-5.8" y="646" width="2" height="2" fill="#c9c9c9"/>
<text x="-19.1" y="648" font-size="14.6" fill="#c9c9c9" stroke="#c9c9c9" stroke-width="0.4" text-anchor="start" textLength="6.7" lengthAdjust="spacingAndGlyphs">b</text>
<polygon points="-25,666 -10,666 -10,665.25 -9,665.25 -9,666 7,666 7,667 -9,667 -9,667.75 -10,667.75 -10,667 -25,667" fill="#8ee040"/>
<rect x="-25" y="675" width="30" height="3" fill="rgba(205,196,152,0.72)"/>
<rect x="-25" y="680" width="32" height="1" fill="rgba(200,200,200,0.5)"/>
<rect x="-25" y="682" width="30" height="3" fill="rgba(163,206,233,0.62)"/>
<polygon points="-25,696 -16,696 -16,695.75 -13,695.75 -13,696 -12,696 -12,695.75 -11,695.75 -11,695.5 -9,695.5 -9,695.75 -4,695.75 -4,696 7,696 7,697 -4,697 -4,697.25 -9,697.25 -9,697.5 -11,697.5 -11,697.25 -12,697.25 -12,697 -13,697 -13,697.25 -16,697.25 -16,697 -25,697" fill="#8ee040"/>
</g></svg>
<svg x="22" y="631" width="32" height="84" overflow="hidden"><g transform="translate(-22,-631)">
<rect x="22" y="631" width="30" height="84" fill="#2b3a1e"/>
<rect x="52" y="631" width="2" height="84" fill="#141c0d"/>
<rect x="35.2" y="646" width="2" height="2" fill="#c9c9c9"/>
<rect x="38.2" y="646" width="2" height="2" fill="#c9c9c9"/>
<rect x="41.2" y="646" width="2" height="2" fill="#c9c9c9"/>
<text x="27.9" y="648" font-size="14.6" fill="#c9c9c9" stroke="#c9c9c9" stroke-width="0.4" text-anchor="start" textLength="6.7" lengthAdjust="spacingAndGlyphs">b</text>
<polygon points="22,666 37,666 37,665.25 38,665.25 38,666 54,666 54,667 38,667 38,667.75 37,667.75 37,667 22,667" fill="#8ee040"/>
<rect x="22" y="675" width="30" height="3" fill="rgba(205,196,152,0.72)"/>
<rect x="22" y="680" width="32" height="1" fill="rgba(200,200,200,0.5)"/>
<rect x="22" y="682" width="30" height="3" fill="rgba(163,206,233,0.62)"/>
<polygon points="22,696 31,696 31,695.75 35,695.75 35,695.5 41,695.5 41,695.75 43,695.75 43,696 54,696 54,697 43,697 43,697.25 41,697.25 41,697.5 35,697.5 35,697.25 31,697.25 31,697 22,697" fill="#8ee040"/>
<rect x="22" y="631" width="2" height="84" fill="#adb5a0"/>
</g></svg>
<svg x="72" y="631" width="31" height="84" overflow="hidden"><g transform="translate(-72,-631)">
<rect x="72" y="631" width="29" height="84" fill="#2b3a1e"/>
<rect x="101" y="631" width="2" height="84" fill="#141c0d"/>
<rect x="85.2" y="646" width="2" height="2" fill="#c9c9c9"/>
<rect x="88.2" y="646" width="2" height="2" fill="#c9c9c9"/>
<rect x="91.2" y="646" width="2" height="2" fill="#c9c9c9"/>
<text x="77.9" y="648" font-size="14.6" fill="#c9c9c9" stroke="#c9c9c9" stroke-width="0.4" text-anchor="start" textLength="6.7" lengthAdjust="spacingAndGlyphs">b</text>
<polygon points="72,666 87,666 87,665.25 88,665.25 88,666 103,666 103,667 88,667 88,667.75 87,667.75 87,667 72,667" fill="#8ee040"/>
<rect x="72" y="675" width="29" height="3" fill="rgba(205,196,152,0.72)"/>
<rect x="72" y="680" width="31" height="1" fill="rgba(200,200,200,0.5)"/>
<rect x="72" y="682" width="29" height="3" fill="rgba(163,206,233,0.62)"/>
<polygon points="72,696 81,696 81,695.75 84,695.75 84,695.5 85,695.5 85,695.75 87,695.75 87,695.5 90,695.5 90,695.75 91,695.75 91,695.5 93,695.5 93,696 103,696 103,697 93,697 93,697.5 91,697.5 91,697.25 90,697.25 90,697.5 87,697.5 87,697.25 85,697.25 85,697.5 84,697.5 84,697.25 81,697.25 81,697 72,697" fill="#8ee040"/>
<rect x="72" y="631" width="2" height="84" fill="#adb5a0"/>
</g></svg>
<svg x="294" y="631" width="31" height="84" overflow="hidden"><g transform="translate(-294,-631)">
<rect x="294" y="631" width="29" height="84" fill="#2b3a1e"/>
<rect x="323" y="631" width="2" height="84" fill="#141c0d"/>
<rect x="307.2" y="646" width="2" height="2" fill="#c9c9c9"/>
<rect x="310.2" y="646" width="2" height="2" fill="#c9c9c9"/>
<rect x="313.2" y="646" width="2" height="2" fill="#c9c9c9"/>
<text x="299.9" y="648" font-size="14.6" fill="#c9c9c9" stroke="#c9c9c9" stroke-width="0.4" text-anchor="start" textLength="6.7" lengthAdjust="spacingAndGlyphs">b</text>
<polygon points="294,666 308,666 308,665.75 309,665.75 309,665 310,665 310,665.75 311,665.75 311,666 325,666 325,667 311,667 311,667.25 310,667.25 310,668 309,668 309,667.25 308,667.25 308,667 294,667" fill="#8ee040"/>
<rect x="294" y="675" width="29" height="3" fill="rgba(205,196,152,0.72)"/>
<rect x="294" y="680" width="31" height="1" fill="rgba(200,200,200,0.5)"/>
<rect x="294" y="682" width="29" height="3" fill="rgba(163,206,233,0.62)"/>
<polygon points="294,696 303,696 303,695.5 304,695.5 304,695.75 308,695.75 308,696 309,696 309,695.75 313,695.75 313,695.5 315,695.5 315,696 325,696 325,697 315,697 315,697.5 313,697.5 313,697.25 309,697.25 309,697 308,697 308,697.25 304,697.25 304,697.5 303,697.5 303,697 294,697" fill="#8ee040"/>
<rect x="294" y="631" width="2" height="84" fill="#adb5a0"/>
</g></svg>
<svg x="338" y="631" width="30" height="84" overflow="hidden"><g transform="translate(-338,-631)">
<rect x="338" y="631" width="28" height="84" fill="#2b3a1e"/>
<rect x="366" y="631" width="2" height="84" fill="#141c0d"/>
<rect x="351.2" y="646" width="2" height="2" fill="#c9c9c9"/>
<rect x="354.2" y="646" width="2" height="2" fill="#c9c9c9"/>
<rect x="357.2" y="646" width="2" height="2" fill="#c9c9c9"/>
<text x="343.9" y="648" font-size="14.6" fill="#c9c9c9" stroke="#c9c9c9" stroke-width="0.4" text-anchor="start" textLength="6.7" lengthAdjust="spacingAndGlyphs">b</text>
<polygon points="338,666 353,666 353,665.25 354,665.25 354,666 368,666 368,667 354,667 354,667.75 353,667.75 353,667 338,667" fill="#8ee040"/>
<rect x="338" y="675" width="28" height="3" fill="rgba(205,196,152,0.72)"/>
<rect x="338" y="680" width="30" height="1" fill="rgba(200,200,200,0.5)"/>
<rect x="338" y="682" width="28" height="3" fill="rgba(163,206,233,0.62)"/>
<polygon points="338,696 347,696 347,695.5 356,695.5 356,695.25 357,695.25 357,695.5 358,695.5 358,695.75 359,695.75 359,696 368,696 368,697 359,697 359,697.25 358,697.25 358,697.5 357,697.5 357,697.75 356,697.75 356,697.5 347,697.5 347,697 338,697" fill="#8ee040"/>
<rect x="338" y="631" width="2" height="84" fill="#adb5a0"/>
</g></svg>
<svg x="464" y="631" width="30" height="84" overflow="hidden"><g transform="translate(-464,-631)">
<rect x="464" y="631" width="28" height="84" fill="#2b3a1e"/>
<rect x="492" y="631" width="2" height="84" fill="#141c0d"/>
<rect x="477.2" y="646" width="2" height="2" fill="#c9c9c9"/>
<rect x="480.2" y="646" width="2" height="2" fill="#c9c9c9"/>
<rect x="483.2" y="646" width="2" height="2" fill="#c9c9c9"/>
<text x="469.9" y="648" font-size="14.6" fill="#c9c9c9" stroke="#c9c9c9" stroke-width="0.4" text-anchor="start" textLength="6.7" lengthAdjust="spacingAndGlyphs">b</text>
<polygon points="464,666 478,666 478,665.75 479,665.75 479,665 480,665 480,666 494,666 494,667 480,667 480,668 479,668 479,667.25 478,667.25 478,667 464,667" fill="#8ee040"/>
<rect x="464" y="675" width="28" height="3" fill="rgba(205,196,152,0.72)"/>
<rect x="464" y="680" width="30" height="1" fill="rgba(200,200,200,0.5)"/>
<rect x="464" y="682" width="28" height="3" fill="rgba(163,206,233,0.62)"/>
<polygon points="464,696 473,696 473,695.5 476,695.5 476,695.75 478,695.75 478,695.5 479,695.5 479,695.75 484,695.75 484,696 494,696 494,697 484,697 484,697.25 479,697.25 479,697.5 478,697.5 478,697.25 476,697.25 476,697.5 473,697.5 473,697 464,697" fill="#8ee040"/>
<rect x="464" y="631" width="2" height="84" fill="#adb5a0"/>
</g></svg>
<svg x="507" y="631" width="31" height="84" overflow="hidden"><g transform="translate(-507,-631)">
<rect x="507" y="631" width="29" height="84" fill="#2b3a1e"/>
<rect x="536" y="631" width="2" height="84" fill="#141c0d"/>
<rect x="520.2" y="646" width="2" height="2" fill="#c9c9c9"/>
<rect x="523.2" y="646" width="2" height="2" fill="#c9c9c9"/>
<rect x="526.2" y="646" width="2" height="2" fill="#c9c9c9"/>
<text x="512.9" y="648" font-size="14.6" fill="#c9c9c9" stroke="#c9c9c9" stroke-width="0.4" text-anchor="start" textLength="6.7" lengthAdjust="spacingAndGlyphs">b</text>
<polygon points="507,666 522,666 522,665.25 523,665.25 523,665.75 524,665.75 524,666 538,666 538,667 524,667 524,667.25 523,667.25 523,667.75 522,667.75 522,667 507,667" fill="#8ee040"/>
<rect x="507" y="675" width="29" height="3" fill="rgba(205,196,152,0.72)"/>
<rect x="507" y="680" width="31" height="1" fill="rgba(200,200,200,0.5)"/>
<rect x="507" y="682" width="29" height="3" fill="rgba(163,206,233,0.62)"/>
<polygon points="507,696 518,696 518,695.75 520,695.75 520,695.5 523,695.5 523,695.75 524,695.75 524,695.5 528,695.5 528,696 538,696 538,697 528,697 528,697.5 524,697.5 524,697.25 523,697.25 523,697.5 520,697.5 520,697.25 518,697.25 518,697 507,697" fill="#8ee040"/>
<rect x="507" y="631" width="2" height="84" fill="#adb5a0"/>
</g></svg>
<svg x="554" y="631" width="31" height="84" overflow="hidden"><g transform="translate(-554,-631)">
<rect x="554" y="631" width="29" height="84" fill="#2b3a1e"/>
<rect x="583" y="631" width="2" height="84" fill="#141c0d"/>
<rect x="567.2" y="646" width="2" height="2" fill="#c9c9c9"/>
<rect x="570.2" y="646" width="2" height="2" fill="#c9c9c9"/>
<rect x="573.2" y="646" width="2" height="2" fill="#c9c9c9"/>
<text x="559.9" y="648" font-size="14.6" fill="#c9c9c9" stroke="#c9c9c9" stroke-width="0.4" text-anchor="start" textLength="6.7" lengthAdjust="spacingAndGlyphs">b</text>
<polygon points="554,666 569,666 569,665.25 570,665.25 570,666 585,666 585,667 570,667 570,667.75 569,667.75 569,667 554,667" fill="#8ee040"/>
<rect x="554" y="675" width="29" height="3" fill="rgba(205,196,152,0.72)"/>
<rect x="554" y="680" width="31" height="1" fill="rgba(200,200,200,0.5)"/>
<rect x="554" y="682" width="29" height="3" fill="rgba(163,206,233,0.62)"/>
<polygon points="554,696 563,696 563,695.75 564,695.75 564,696 565,696 565,695.75 570,695.75 570,695.5 571,695.5 571,695.75 572,695.75 572,696 573,696 573,695.75 574,695.75 574,695.5 575,695.5 575,696 585,696 585,697 575,697 575,697.5 574,697.5 574,697.25 573,697.25 573,697 572,697 572,697.25 571,697.25 571,697.5 570,697.5 570,697.25 565,697.25 565,697 564,697 564,697.25 563,697.25 563,697 554,697" fill="#8ee040"/>
<rect x="554" y="631" width="2" height="84" fill="#adb5a0"/>
</g></svg>
<svg x="1127" y="631" width="32" height="84" overflow="hidden"><g transform="translate(-1127,-631)">
<rect x="1127" y="631" width="30" height="84" fill="#2b3a1e"/>
<rect x="1157" y="631" width="2" height="84" fill="#141c0d"/>
<rect x="1140.2" y="646" width="2" height="2" fill="#c9c9c9"/>
<rect x="1143.2" y="646" width="2" height="2" fill="#c9c9c9"/>
<rect x="1146.2" y="646" width="2" height="2" fill="#c9c9c9"/>
<text x="1132.9" y="648" font-size="14.6" fill="#c9c9c9" stroke="#c9c9c9" stroke-width="0.4" text-anchor="start" textLength="6.7" lengthAdjust="spacingAndGlyphs">b</text>
<polygon points="1127,666 1141,666 1141,665.75 1142,665.75 1142,665.25 1143,665.25 1143,666 1159,666 1159,667 1143,667 1143,667.75 1142,667.75 1142,667.25 1141,667.25 1141,667 1127,667" fill="#8ee040"/>
<rect x="1127" y="675" width="30" height="3" fill="rgba(205,196,152,0.72)"/>
<rect x="1127" y="680" width="32" height="1" fill="rgba(200,200,200,0.5)"/>
<rect x="1127" y="682" width="30" height="3" fill="rgba(163,206,233,0.62)"/>
<polygon points="1127,696 1136,696 1136,695.75 1139,695.75 1139,696 1142,696 1142,695.75 1144,695.75 1144,695.5 1146,695.5 1146,695.75 1148,695.75 1148,696 1159,696 1159,697 1148,697 1148,697.25 1146,697.25 1146,697.5 1144,697.5 1144,697.25 1142,697.25 1142,697 1139,697 1139,697.25 1136,697.25 1136,697 1127,697" fill="#8ee040"/>
<rect x="1127" y="631" width="2" height="84" fill="#adb5a0"/>
</g></svg>
<svg x="1159" y="631" width="30" height="84" overflow="hidden"><g transform="translate(-1159,-631)">
<rect x="1159" y="631" width="28" height="84" fill="#2b3a1e"/>
<rect x="1187" y="631" width="2" height="84" fill="#141c0d"/>
<rect x="1172.2" y="646" width="2" height="2" fill="#c9c9c9"/>
<rect x="1175.2" y="646" width="2" height="2" fill="#c9c9c9"/>
<rect x="1178.2" y="646" width="2" height="2" fill="#c9c9c9"/>
<text x="1164.9" y="648" font-size="14.6" fill="#c9c9c9" stroke="#c9c9c9" stroke-width="0.4" text-anchor="start" textLength="6.7" lengthAdjust="spacingAndGlyphs">b</text>
<polygon points="1159,666 1174,666 1174,665.25 1175,665.25 1175,666 1189,666 1189,667 1175,667 1175,667.75 1174,667.75 1174,667 1159,667" fill="#8ee040"/>
<rect x="1159" y="675" width="28" height="3" fill="rgba(205,196,152,0.72)"/>
<rect x="1159" y="680" width="30" height="1" fill="rgba(200,200,200,0.5)"/>
<rect x="1159" y="682" width="28" height="3" fill="rgba(163,206,233,0.62)"/>
<polygon points="1159,696 1168,696 1168,695.75 1171,695.75 1171,696 1172,696 1172,695.75 1173,695.75 1173,695.5 1175,695.5 1175,695.75 1179,695.75 1179,695.5 1180,695.5 1180,696 1189,696 1189,697 1180,697 1180,697.5 1179,697.5 1179,697.25 1175,697.25 1175,697.5 1173,697.5 1173,697.25 1172,697.25 1172,697 1171,697 1171,697.25 1168,697.25 1168,697 1159,697" fill="#8ee040"/>
<rect x="1159" y="631" width="2" height="84" fill="#adb5a0"/>
</g></svg>
<svg x="1189" y="631" width="31" height="84" overflow="hidden"><g transform="translate(-1189,-631)">
<rect x="1189" y="631" width="29" height="84" fill="#2b3a1e"/>
<rect x="1218" y="631" width="2" height="84" fill="#141c0d"/>
<rect x="1202.2" y="646" width="2" height="2" fill="#c9c9c9"/>
<rect x="1205.2" y="646" width="2" height="2" fill="#c9c9c9"/>
<rect x="1208.2" y="646" width="2" height="2" fill="#c9c9c9"/>
<text x="1194.9" y="648" font-size="14.6" fill="#c9c9c9" stroke="#c9c9c9" stroke-width="0.4" text-anchor="start" textLength="6.7" lengthAdjust="spacingAndGlyphs">b</text>
<polygon points="1189,666 1204,666 1204,665.25 1205,665.25 1205,666 1220,666 1220,667 1205,667 1205,667.75 1204,667.75 1204,667 1189,667" fill="#8ee040"/>
<rect x="1189" y="675" width="29" height="3" fill="rgba(205,196,152,0.72)"/>
<rect x="1189" y="680" width="31" height="1" fill="rgba(200,200,200,0.5)"/>
<rect x="1189" y="682" width="29" height="3" fill="rgba(163,206,233,0.62)"/>
<polygon points="1189,696 1198,696 1198,695.5 1203,695.5 1203,695.25 1204,695.25 1204,695.5 1205,695.5 1205,695.75 1208,695.75 1208,695.5 1210,695.5 1210,696 1220,696 1220,697 1210,697 1210,697.5 1208,697.5 1208,697.25 1205,697.25 1205,697.5 1204,697.5 1204,697.75 1203,697.75 1203,697.5 1198,697.5 1198,697 1189,697" fill="#8ee040"/>
<rect x="1189" y="631" width="2" height="84" fill="#adb5a0"/>
</g></svg>
<svg x="1220" y="631" width="32" height="84" overflow="hidden"><g transform="translate(-1220,-631)">
<rect x="1220" y="631" width="30" height="84" fill="#2b3a1e"/>
<rect x="1250" y="631" width="2" height="84" fill="#141c0d"/>
<rect x="1233.2" y="646" width="2" height="2" fill="#c9c9c9"/>
<rect x="1236.2" y="646" width="2" height="2" fill="#c9c9c9"/>
<rect x="1239.2" y="646" width="2" height="2" fill="#c9c9c9"/>
<text x="1225.9" y="648" font-size="14.6" fill="#c9c9c9" stroke="#c9c9c9" stroke-width="0.4" text-anchor="start" textLength="6.7" lengthAdjust="spacingAndGlyphs">b</text>
<polygon points="1220,666 1235,666 1235,665.25 1236,665.25 1236,666 1252,666 1252,667 1236,667 1236,667.75 1235,667.75 1235,667 1220,667" fill="#8ee040"/>
<rect x="1220" y="675" width="30" height="3" fill="rgba(205,196,152,0.72)"/>
<rect x="1220" y="680" width="32" height="1" fill="rgba(200,200,200,0.5)"/>
<rect x="1220" y="682" width="30" height="3" fill="rgba(163,206,233,0.62)"/>
<polygon points="1220,696 1229,696 1229,695.75 1231,695.75 1231,696 1233,696 1233,695.75 1234,695.75 1234,695.5 1237,695.5 1237,695.75 1239,695.75 1239,695.5 1241,695.5 1241,696 1252,696 1252,697 1241,697 1241,697.5 1239,697.5 1239,697.25 1237,697.25 1237,697.5 1234,697.5 1234,697.25 1233,697.25 1233,697 1231,697 1231,697.25 1229,697.25 1229,697 1220,697" fill="#8ee040"/>
<rect x="1220" y="631" width="2" height="84" fill="#adb5a0"/>
</g></svg>
<svg x="1252" y="631" width="31" height="84" overflow="hidden"><g transform="translate(-1252,-631)">
<rect x="1252" y="631" width="29" height="84" fill="#2b3a1e"/>
<rect x="1281" y="631" width="2" height="84" fill="#141c0d"/>
<rect x="1265.2" y="646" width="2" height="2" fill="#c9c9c9"/>
<rect x="1268.2" y="646" width="2" height="2" fill="#c9c9c9"/>
<rect x="1271.2" y="646" width="2" height="2" fill="#c9c9c9"/>
<text x="1257.9" y="648" font-size="14.6" fill="#c9c9c9" stroke="#c9c9c9" stroke-width="0.4" text-anchor="start" textLength="6.7" lengthAdjust="spacingAndGlyphs">b</text>
<polygon points="1252,666 1267,666 1267,665 1268,665 1268,666 1283,666 1283,667 1268,667 1268,668 1267,668 1267,667 1252,667" fill="#8ee040"/>
<rect x="1252" y="675" width="29" height="3" fill="rgba(205,196,152,0.72)"/>
<rect x="1252" y="680" width="31" height="1" fill="rgba(200,200,200,0.5)"/>
<rect x="1252" y="682" width="29" height="3" fill="rgba(163,206,233,0.62)"/>
<polygon points="1252,696 1261,696 1261,695.75 1264,695.75 1264,695.5 1265,695.5 1265,695.75 1266,695.75 1266,696 1268,696 1268,695.75 1271,695.75 1271,695.5 1273,695.5 1273,696 1283,696 1283,697 1273,697 1273,697.5 1271,697.5 1271,697.25 1268,697.25 1268,697 1266,697 1266,697.25 1265,697.25 1265,697.5 1264,697.5 1264,697.25 1261,697.25 1261,697 1252,697" fill="#8ee040"/>
<rect x="1252" y="631" width="2" height="84" fill="#adb5a0"/>
</g></svg>
<svg x="1283" y="631" width="30" height="84" overflow="hidden"><g transform="translate(-1283,-631)">
<rect x="1283" y="631" width="28" height="84" fill="#2b3a1e"/>
<rect x="1311" y="631" width="2" height="84" fill="#141c0d"/>
<rect x="1296.2" y="646" width="2" height="2" fill="#c9c9c9"/>
<rect x="1299.2" y="646" width="2" height="2" fill="#c9c9c9"/>
<rect x="1302.2" y="646" width="2" height="2" fill="#c9c9c9"/>
<text x="1288.9" y="648" font-size="14.6" fill="#c9c9c9" stroke="#c9c9c9" stroke-width="0.4" text-anchor="start" textLength="6.7" lengthAdjust="spacingAndGlyphs">b</text>
<polygon points="1283,666 1298,666 1298,665.25 1299,665.25 1299,666 1313,666 1313,667 1299,667 1299,667.75 1298,667.75 1298,667 1283,667" fill="#8ee040"/>
<rect x="1283" y="675" width="28" height="3" fill="rgba(205,196,152,0.72)"/>
<rect x="1283" y="680" width="30" height="1" fill="rgba(200,200,200,0.5)"/>
<rect x="1283" y="682" width="28" height="3" fill="rgba(163,206,233,0.62)"/>
<polygon points="1283,696 1292,696 1292,695.5 1293,695.5 1293,695.25 1294,695.25 1294,695.5 1300,695.5 1300,695.75 1303,695.75 1303,695.5 1304,695.5 1304,696 1313,696 1313,697 1304,697 1304,697.5 1303,697.5 1303,697.25 1300,697.25 1300,697.5 1294,697.5 1294,697.75 1293,697.75 1293,697.5 1292,697.5 1292,697 1283,697" fill="#8ee040"/>
<rect x="1283" y="631" width="2" height="84" fill="#adb5a0"/>
</g></svg>
<svg x="1313" y="631" width="34" height="84" overflow="hidden"><g transform="translate(-1313,-631)">
<rect x="1313" y="631" width="32" height="84" fill="#2b3a1e"/>
<rect x="1345" y="631" width="2" height="84" fill="#141c0d"/>
<rect x="1326.2" y="646" width="2" height="2" fill="#c9c9c9"/>
<rect x="1329.2" y="646" width="2" height="2" fill="#c9c9c9"/>
<rect x="1332.2" y="646" width="2" height="2" fill="#c9c9c9"/>
<text x="1318.9" y="648" font-size="14.6" fill="#c9c9c9" stroke="#c9c9c9" stroke-width="0.4" text-anchor="start" textLength="6.7" lengthAdjust="spacingAndGlyphs">b</text>
<polygon points="1313,666 1328,666 1328,665.25 1329,665.25 1329,666 1347,666 1347,667 1329,667 1329,667.75 1328,667.75 1328,667 1313,667" fill="#8ee040"/>
<rect x="1313" y="675" width="32" height="3" fill="rgba(205,196,152,0.72)"/>
<rect x="1313" y="680" width="34" height="1" fill="rgba(200,200,200,0.5)"/>
<rect x="1313" y="682" width="32" height="3" fill="rgba(163,206,233,0.62)"/>
<polygon points="1313,696 1322,696 1322,695.75 1325,695.75 1325,695.5 1328,695.5 1328,695.75 1331,695.75 1331,695.5 1332,695.5 1332,695.75 1334,695.75 1334,696 1347,696 1347,697 1334,697 1334,697.25 1332,697.25 1332,697.5 1331,697.5 1331,697.25 1328,697.25 1328,697.5 1325,697.5 1325,697.25 1322,697.25 1322,697 1313,697" fill="#8ee040"/>
<rect x="1313" y="631" width="2" height="84" fill="#adb5a0"/>
</g></svg>
<svg x="-10" y="719" width="367" height="105" overflow="hidden"><g transform="translate(10,-719)">
<rect x="-10" y="719" width="365" height="105" fill="#18273d"/>
<rect x="355" y="719" width="2" height="105" fill="#0b121d"/>
<text x="273.2" y="736" font-size="14.6" fill="#c9c9c9" stroke="#c9c9c9" stroke-width="0.4" text-anchor="start" textLength="47.5" lengthAdjust="spacingAndGlyphs">Volume</text>
<polyline points="333.1,726.8 338.4,731.8 343.7,726.8" fill="none" stroke="#c9c9c9" stroke-width="1.5" stroke-linecap="round" stroke-linejoin="round"/>
<polygon points="-10,760.75 -9,760.75 -9,760.5 -8,760.5 -8,760.5 -7,760.5 -7,760.75 -6,760.75 -6,760.5 -5,760.5 -5,760.75 -4,760.75 -4,760.5 -3,760.5 -3,760.75 -2,760.75 -2,760.5 -1,760.5 -1,760.5 0,760.5 0,760.75 1,760.75 1,760.75 2,760.75 2,760.5 3,760.5 3,760.5 4,760.5 4,760.5 6,760.5 6,760.75 7,760.75 7,761 8,761 8,760.75 9,760.75 9,761 10,761 10,760.5 11,760.5 11,761 12,761 12,760.5 13,760.5 13,760.75 14,760.75 14,761 15,761 15,760.5 16,760.5 16,760.75 17,760.75 17,760.5 18,760.5 18,761 19,761 19,760.5 20,760.5 20,761 21,761 21,760.5 22,760.5 22,760.5 23,760.5 23,761 24,761 24,760.5 25,760.5 25,761 26,761 26,760.75 27,760.75 27,761 28,761 28,760.5 30,760.5 30,761 31,761 31,760.75 32,760.75 32,760.75 33,760.75 33,760.5 34,760.5 34,761 36,761 36,760.75 37,760.75 37,760.75 38,760.75 38,760.5 39,760.5 39,760.75 40,760.75 40,761 41,761 41,760.5 42,760.5 42,760.75 44,760.75 44,760.75 45,760.75 45,760.75 46,760.75 46,760.5 47,760.5 47,760.75 48,760.75 48,760.5 49,760.5 49,760.75 50,760.75 50,760.75 52,760.75 52,760.75 54,760.75 54,760.5 55,760.5 55,760.75 57,760.75 57,761 59,761 59,760.75 60,760.75 60,760.5 61,760.5 61,760.5 62,760.5 62,761 63,761 63,760.75 64,760.75 64,760.5 65,760.5 65,761 66,761 66,760.75 67,760.75 67,761 68,761 68,761 69,761 69,760.75 70,760.75 70,761 71,761 71,761 72,761 72,760.75 73,760.75 73,760.5 74,760.5 74,760.5 75,760.5 75,760.5 76,760.5 76,760.5 77,760.5 77,761 78,761 78,760.75 79,760.75 79,760.5 80,760.5 80,760.75 81,760.75 81,760.75 82,760.75 82,761 83,761 83,760.5 84,760.5 84,760.5 85,760.5 85,760.5 87,760.5 87,760.75 88,760.75 88,760.5 89,760.5 89,760.75 90,760.75 90,761 91,761 91,760.75 93,760.75 93,760.5 94,760.5 94,760.75 95,760.75 95,760.75 96,760.75 96,760.75 97,760.75 97,760.75 98,760.75 98,761 99,761 99,760.75 102,760.75 102,761 103,761 103,760.75 104,760.75 104,760.5 105,760.5 105,761 106,761 106,760.5 107,760.5 107,760.5 108,760.5 108,760.75 109,760.75 109,760.75 110,760.75 110,760.5 111,760.5 111,761 112,761 112,760.5 113,760.5 113,761 114,761 114,760.5 115,760.5 115,760.75 116,760.75 116,760.5 117,760.5 117,760.5 118,760.5 118,760.75 119,760.75 119,760.5 120,760.5 120,761 121,761 121,760.75 122,760.75 122,760.5 125,760.5 125,760.5 126,760.5 126,760.75 127,760.75 127,761 128,761 128,760.75 129,760.75 129,761 130,761 130,760.75 131,760.75 131,760.5 132,760.5 132,761 133,761 133,760.5 134,760.5 134,760.75 135,760.75 135,760.75 136,760.75 136,761 137,761 137,760.5 138,760.5 138,760.75 139,760.75 139,760.75 140,760.75 140,761 141,761 141,760.5 143,760.5 143,760.75 144,760.75 144,760.75 146,760.75 146,761 147,761 147,760.5 148,760.5 148,761 149,761 149,760.75 150,760.75 150,761 151,761 151,760.5 152,760.5 152,760.75 153,760.75 153,760.5 154,760.5 154,760.75 155,760.75 155,760.5 156,760.5 156,760.5 157,760.5 157,761 158,761 158,760.75 159,760.75 159,760.5 160,760.5 160,760.5 161,760.5 161,761 162,761 162,760.75 164,760.75 164,761 165,761 165,760.5 167,760.5 167,760.5 168,760.5 168,760.75 169,760.75 169,760.75 170,760.75 170,760.5 172,760.5 172,760.75 174,760.75 174,760.75 175,760.75 175,761 176,761 176,760.75 177,760.75 177,760.5 178,760.5 178,760.5 179,760.5 179,760.75 181,760.75 181,761 182,761 182,760.75 183,760.75 183,760.75 184,760.75 184,761 185,761 185,760.5 186,760.5 186,761 187,761 187,760.5 188,760.5 188,761 189,761 189,760.5 190,760.5 190,760.5 191,760.5 191,760.5 194,760.5 194,760.5 195,760.5 195,760.75 196,760.75 196,760.75 197,760.75 197,760.75 198,760.75 198,760.5 199,760.5 199,760.5 200,760.5 200,760.75 201,760.75 201,760.5 202,760.5 202,760.5 203,760.5 203,760.5 204,760.5 204,760.75 205,760.75 205,760.75 206,760.75 206,760.5 207,760.5 207,760.5 208,760.5 208,760.75 209,760.75 209,760.5 211,760.5 211,760.75 212,760.75 212,760.5 213,760.5 213,760.5 214,760.5 214,760.5 215,760.5 215,761 216,761 216,760.5 217,760.5 217,760.5 218,760.5 218,761 219,761 219,760.5 220,760.5 220,761 221,761 221,760.75 222,760.75 222,760.5 223,760.5 223,760.5 225,760.5 225,760.75 226,760.75 226,760.5 227,760.5 227,760.5 229,760.5 229,760.5 230,760.5 230,760.75 231,760.75 231,760.75 232,760.75 232,760.5 233,760.5 233,760.5 234,760.5 234,761 235,761 235,760.5 236,760.5 236,761 237,761 237,760.75 238,760.75 238,760.5 240,760.5 240,760.5 241,760.5 241,761 242,761 242,760.75 243,760.75 243,760.75 244,760.75 244,760.75 245,760.75 245,760.5 246,760.5 246,761 247,761 247,760.75 249,760.75 249,760.5 250,760.5 250,760.75 253,760.75 253,760.5 254,760.5 254,761 255,761 255,760.75 256,760.75 256,760.5 257,760.5 257,760.75 258,760.75 258,760.5 259,760.5 259,760.75 260,760.75 260,760.5 261,760.5 261,760.75 263,760.75 263,760.75 264,760.75 264,760.75 265,760.75 265,760.75 266,760.75 266,761 267,761 267,760.75 269,760.75 269,760.5 270,760.5 270,761 271,761 271,760.75 272,760.75 272,760.75 273,760.75 273,760.5 274,760.5 274,760.75 275,760.75 275,761 276,761 276,761 277,761 277,760.75 278,760.75 278,760.5 279,760.5 279,760.5 280,760.5 280,760.75 281,760.75 281,760.75 283,760.75 283,760.75 284,760.75 284,760.5 285,760.5 285,760.75 286,760.75 286,760.75 287,760.75 287,760.75 288,760.75 288,760.5 289,760.5 289,760.75 290,760.75 290,760.75 291,760.75 291,760.75 293,760.75 293,760.5 294,760.5 294,760.75 295,760.75 295,760.5 296,760.5 296,761 297,761 297,760.5 300,760.5 300,760.5 301,760.5 301,760.5 302,760.5 302,760.75 303,760.75 303,760.5 304,760.5 304,760.75 305,760.75 305,760.5 306,760.5 306,760.75 308,760.75 308,760.5 310,760.5 310,760.75 311,760.75 311,760.5 312,760.5 312,760.5 313,760.5 313,760.5 314,760.5 314,760.5 315,760.5 315,761 316,761 316,760.75 317,760.75 317,760.75 319,760.75 319,760.75 320,760.75 320,760.5 321,760.5 321,760.5 322,760.5 322,760.5 323,760.5 323,761 324,761 324,760.5 326,760.5 326,760.75 327,760.75 327,760.5 328,760.5 328,760.75 329,760.75 329,760.75 330,760.75 330,761 331,761 331,760.75 332,760.75 332,760.75 333,760.75 333,761 334,761 334,761 335,761 335,760.75 337,760.75 337,761 338,761 338,760.5 339,760.5 339,761 340,761 340,760.75 343,760.75 343,761 344,761 344,760.75 345,760.75 345,760.5 346,760.5 346,760.75 347,760.75 347,761 348,761 348,760.75 349,760.75 349,760.75 350,760.75 350,760.75 351,760.75 351,760.75 353,760.75 353,760.75 354,760.75 354,760.5 355,760.5 355,761 356,761 356,760.5 357,760.5 357,762.25 356,762.25 356,762.25 355,762.25 355,762.5 354,762.5 354,762.5 353,762.5 353,762 351,762 351,762.25 350,762.25 350,762.5 349,762.5 349,762.25 348,762.25 348,762.25 347,762.25 347,762.5 346,762.5 346,762.25 345,762.25 345,762.25 344,762.25 344,762.25 343,762.25 343,762.25 340,762.25 340,762.25 339,762.25 339,762.25 338,762.25 338,762.25 337,762.25 337,762.5 335,762.5 335,762.25 334,762.25 334,762.5 333,762.5 333,762.5 332,762.5 332,762.25 331,762.25 331,762.5 330,762.5 330,762.25 329,762.25 329,762.5 328,762.5 328,762 327,762 327,762.25 326,762.25 326,762.25 324,762.25 324,762.25 323,762.25 323,762 322,762 322,762.25 321,762.25 321,762.5 320,762.5 320,762.5 319,762.5 319,762.25 317,762.25 317,762 316,762 316,762.25 315,762.25 315,762.25 314,762.25 314,762 313,762 313,762.5 312,762.5 312,762 311,762 311,762.25 310,762.25 310,762.5 308,762.5 308,762.25 306,762.25 306,762 305,762 305,762.25 304,762.25 304,762 303,762 303,762.5 302,762.5 302,762.25 301,762.25 301,762.5 300,762.5 300,762.25 297,762.25 297,762.5 296,762.5 296,762.5 295,762.5 295,762.25 294,762.25 294,762.25 293,762.25 293,762.5 291,762.5 291,762 290,762 290,762.25 289,762.25 289,762.5 288,762.5 288,762.5 287,762.5 287,762 286,762 286,762.5 285,762.5 285,762.25 284,762.25 284,762.25 283,762.25 283,762.5 281,762.5 281,762.25 280,762.25 280,762 279,762 279,762.25 278,762.25 278,762.25 277,762.25 277,762.25 276,762.25 276,762.5 275,762.5 275,762.25 274,762.25 274,762.5 273,762.5 273,762.5 272,762.5 272,762.25 271,762.25 271,762.25 270,762.25 270,762.25 269,762.25 269,762.25 267,762.25 267,762.5 266,762.5 266,762 265,762 265,762.5 264,762.5 264,762.25 263,762.25 263,762 261,762 261,762.5 260,762.5 260,762.5 259,762.5 259,762.25 258,762.25 258,762.25 257,762.25 257,762 256,762 256,762.5 255,762.5 255,762.25 254,762.25 254,762.5 253,762.5 253,762.5 250,762.5 250,762.5 249,762.5 249,762.5 247,762.5 247,762 246,762 246,762.5 245,762.5 245,762.25 244,762.25 244,762.5 243,762.5 243,762.25 242,762.25 242,762.25 241,762.25 241,762.5 240,762.5 240,762.25 238,762.25 238,762.5 237,762.5 237,762.25 236,762.25 236,762 235,762 235,762.25 234,762.25 234,762 233,762 233,762.25 232,762.25 232,762 231,762 231,762.25 230,762.25 230,762.5 229,762.5 229,762 227,762 227,762.25 226,762.25 226,762.25 225,762.25 225,762.25 223,762.25 223,762 222,762 222,762.5 221,762.5 221,762.5 220,762.5 220,762.25 219,762.25 219,762 218,762 218,762.5 217,762.5 217,762 216,762 216,762.5 215,762.5 215,762 214,762 214,762.5 213,762.5 213,762.25 212,762.25 212,762.5 211,762.5 211,762.5 209,762.5 209,762.25 208,762.25 208,762 207,762 207,762.5 206,762.5 206,762.5 205,762.5 205,762.25 204,762.25 204,762 203,762 203,762.25 202,762.25 202,762 201,762 201,762.5 200,762.5 200,762.5 199,762.5 199,762.25 198,762.25 198,762.5 197,762.5 197,762 196,762 196,762.5 195,762.5 195,762.25 194,762.25 194,762.5 191,762.5 191,762.25 190,762.25 190,762.5 189,762.5 189,762.5 188,762.5 188,762 187,762 187,762 186,762 186,762.5 185,762.5 185,762.5 184,762.5 184,762 183,762 183,762.25 182,762.25 182,762 181,762 181,762 179,762 179,762 178,762 178,762.5 177,762.5 177,762.5 176,762.5 176,762 175,762 175,762.5 174,762.5 174,762.25 172,762.25 172,762.25 170,762.25 170,762.25 169,762.25 169,762.5 168,762.5 168,762 167,762 167,762.25 165,762.25 165,762.25 164,762.25 164,762.5 162,762.5 162,762 161,762 161,762 160,762 160,762.5 159,762.5 159,762.5 158,762.5 158,762.25 157,762.25 157,762.25 156,762.25 156,762.5 155,762.5 155,762.5 154,762.5 154,762.25 153,762.25 153,762.5 152,762.5 152,762.5 151,762.5 151,762.25 150,762.25 150,762 149,762 149,762.25 148,762.25 148,762.25 147,762.25 147,762.25 146,762.25 146,762.25 144,762.25 144,762 143,762 143,762.25 141,762.25 141,762.25 140,762.25 140,762.5 139,762.5 139,762.25 138,762.25 138,762.25 137,762.25 137,762.25 136,762.25 136,762.5 135,762.5 135,762.25 134,762.25 134,762.25 133,762.25 133,762 132,762 132,762.25 131,762.25 131,762.5 130,762.5 130,762.25 129,762.25 129,762.25 128,762.25 128,762.5 127,762.5 127,762.25 126,762.25 126,762 125,762 125,762.5 122,762.5 122,762.25 121,762.25 121,762.25 120,762.25 120,762.5 119,762.5 119,762.5 118,762.5 118,762.5 117,762.5 117,762 116,762 116,762.25 115,762.25 115,762.5 114,762.5 114,762.5 113,762.5 113,762.25 112,762.25 112,762.25 111,762.25 111,762.5 110,762.5 110,762.5 109,762.5 109,762.25 108,762.25 108,762.5 107,762.5 107,762.25 106,762.25 106,762.5 105,762.5 105,762.5 104,762.5 104,762 103,762 103,762.5 102,762.5 102,762.5 99,762.5 99,762.25 98,762.25 98,762.25 97,762.25 97,762 96,762 96,762.5 95,762.5 95,762 94,762 94,762.5 93,762.5 93,762 91,762 91,762.25 90,762.25 90,762.5 89,762.5 89,762.5 88,762.5 88,762.25 87,762.25 87,762.25 85,762.25 85,762 84,762 84,762.5 83,762.5 83,762.5 82,762.5 82,762 81,762 81,762.5 80,762.5 80,762.5 79,762.5 79,762.5 78,762.5 78,762.25 77,762.25 77,762.25 76,762.25 76,762.5 75,762.5 75,762.25 74,762.25 74,762.5 73,762.5 73,762.25 72,762.25 72,762.25 71,762.25 71,762.5 70,762.5 70,762.25 69,762.25 69,762.5 68,762.5 68,762.25 67,762.25 67,762.25 66,762.25 66,762 65,762 65,762.5 64,762.5 64,762.5 63,762.5 63,762.25 62,762.25 62,762 61,762 61,762.5 60,762.5 60,762 59,762 59,762.25 57,762.25 57,762.25 55,762.25 55,762 54,762 54,762.25 52,762.25 52,762.5 50,762.5 50,762 49,762 49,762.25 48,762.25 48,762.25 47,762.25 47,762.25 46,762.25 46,762.5 45,762.5 45,762.25 44,762.25 44,762 42,762 42,762 41,762 41,762.5 40,762.5 40,762.25 39,762.25 39,762 38,762 38,762 37,762 37,762.5 36,762.5 36,762.25 34,762.25 34,762.5 33,762.5 33,762.25 32,762.25 32,762.5 31,762.5 31,762.25 30,762.25 30,762.5 28,762.5 28,762 27,762 27,762.25 26,762.25 26,762.25 25,762.25 25,762 24,762 24,762.25 23,762.25 23,762 22,762 22,762.25 21,762.25 21,762.25 20,762.25 20,762 19,762 19,762.5 18,762.5 18,762 17,762 17,762.25 16,762.25 16,762.5 15,762.5 15,762.5 14,762.5 14,762.5 13,762.5 13,762.25 12,762.25 12,762.25 11,762.25 11,762.5 10,762.5 10,762 9,762 9,762.25 8,762.25 8,762.25 7,762.25 7,762 6,762 6,762.5 4,762.5 4,762 3,762 3,762.5 2,762.5 2,762.25 1,762.25 1,762.5 0,762.5 0,762.25 -1,762.25 -1,762 -2,762 -2,762.5 -3,762.5 -3,762.5 -4,762.5 -4,762.25 -5,762.25 -5,762.5 -6,762.5 -6,762.25 -7,762.25 -7,762 -8,762 -8,762.5 -9,762.5 -9,762.5 -10,762.5" fill="#4a9ef0"/>
<rect x="-10" y="781" width="365" height="4" fill="rgba(163,206,233,0.62)"/>
<polyline points="-10,788.5 12,794.2 355,794.2" fill="none" stroke="rgba(205,196,152,0.72)" stroke-width="3"/>
<polygon points="-10,803 -9,803 -9,802.75 -8,802.75 -8,802.5 -7,802.5 -7,803 -6,803 -6,802.5 -5,802.5 -5,802.75 -4,802.75 -4,802.75 -3,802.75 -3,802.5 -1,802.5 -1,802.5 0,802.5 0,803 1,803 1,802.75 2,802.75 2,802.5 3,802.5 3,802.75 4,802.75 4,802.5 5,802.5 5,802.5 6,802.5 6,802.5 7,802.5 7,802.75 8,802.75 8,803 9,803 9,802.75 10,802.75 10,802.5 11,802.5 11,802.75 12,802.75 12,802.5 14,802.5 14,802.75 15,802.75 15,803 17,803 17,802.75 18,802.75 18,803 20,803 20,802.75 22,802.75 22,803 23,803 23,802.5 24,802.5 24,802.5 26,802.5 26,802.75 27,802.75 27,802.75 28,802.75 28,802.75 29,802.75 29,802.5 31,802.5 31,802.75 32,802.75 32,802.5 33,802.5 33,802.5 34,802.5 34,802.5 35,802.5 35,802.5 36,802.5 36,802.5 37,802.5 37,802.5 38,802.5 38,802.75 39,802.75 39,802.5 41,802.5 41,803 42,803 42,802.5 43,802.5 43,802.75 44,802.75 44,803 45,803 45,802.75 46,802.75 46,802.5 47,802.5 47,802.75 48,802.75 48,802.75 49,802.75 49,802.5 51,802.5 51,802.5 52,802.5 52,803 53,803 53,803 54,803 54,802.75 55,802.75 55,802.75 56,802.75 56,803 57,803 57,802.75 58,802.75 58,802.75 59,802.75 59,802.75 60,802.75 60,802.75 61,802.75 61,803 62,803 62,802.5 63,802.5 63,802.75 64,802.75 64,802.5 66,802.5 66,802.5 68,802.5 68,802.5 69,802.5 69,803 70,803 70,802.75 71,802.75 71,803 72,803 72,802.75 73,802.75 73,802.75 74,802.75 74,802.5 75,802.5 75,802.5 76,802.5 76,802.75 77,802.75 77,802.75 78,802.75 78,802.5 79,802.5 79,802.75 80,802.75 80,802.75 81,802.75 81,802.75 82,802.75 82,802.5 84,802.5 84,803 85,803 85,802.5 86,802.5 86,802.75 88,802.75 88,802.5 89,802.5 89,802.75 92,802.75 92,802.75 94,802.75 94,802.5 95,802.5 95,803 96,803 96,802.75 97,802.75 97,803 98,803 98,802.5 99,802.5 99,802.75 100,802.75 100,802.75 101,802.75 101,803 102,803 102,802.75 103,802.75 103,803 104,803 104,802.5 105,802.5 105,802.75 107,802.75 107,803 108,803 108,802.5 110,802.5 110,802.75 111,802.75 111,802.5 112,802.5 112,803 113,803 113,802.5 114,802.5 114,803 115,803 115,803 117,803 117,802.75 118,802.75 118,802.5 119,802.5 119,802.75 120,802.75 120,803 122,803 122,802.75 123,802.75 123,802.5 124,802.5 124,802.75 125,802.75 125,803 127,803 127,802.5 128,802.5 128,802.75 129,802.75 129,802.75 130,802.75 130,802.5 134,802.5 134,803 135,803 135,802.5 136,802.5 136,803 137,803 137,803 138,803 138,802.5 139,802.5 139,802.5 141,802.5 141,802.75 142,802.75 142,802.5 144,802.5 144,802.75 145,802.75 145,803 148,803 148,802.5 149,802.5 149,802.75 152,802.75 152,803 153,803 153,802.5 154,802.5 154,802.75 156,802.75 156,802.75 157,802.75 157,803 158,803 158,802.75 159,802.75 159,803 160,803 160,803 161,803 161,802.75 162,802.75 162,802.75 164,802.75 164,803 165,803 165,802.75 166,802.75 166,802.5 167,802.5 167,803 169,803 169,802.5 170,802.5 170,803 171,803 171,802.5 172,802.5 172,802.75 173,802.75 173,802.5 175,802.5 175,802.75 177,802.75 177,803 178,803 178,802.75 180,802.75 180,802.75 181,802.75 181,802.5 182,802.5 182,802.75 183,802.75 183,802.5 184,802.5 184,802.75 186,802.75 186,803 187,803 187,802.5 188,802.5 188,802.5 190,802.5 190,802.75 191,802.75 191,802.5 192,802.5 192,802.75 193,802.75 193,802.75 194,802.75 194,803 195,803 195,802.5 196,802.5 196,802.75 198,802.75 198,802.75 199,802.75 199,802.5 200,802.5 200,803 201,803 201,802.75 202,802.75 202,802.5 203,802.5 203,802.5 204,802.5 204,802.5 205,802.5 205,802.75 206,802.75 206,802.75 207,802.75 207,802.5 208,802.5 208,802.75 209,802.75 209,802.5 211,802.5 211,802.5 212,802.5 212,802.75 214,802.75 214,802.75 215,802.75 215,803 216,803 216,802.75 217,802.75 217,803 218,803 218,802.75 220,802.75 220,802.75 221,802.75 221,802.5 222,802.5 222,802.75 223,802.75 223,802.75 224,802.75 224,802.75 225,802.75 225,802.75 226,802.75 226,803 227,803 227,802.75 228,802.75 228,802.5 229,802.5 229,802.75 230,802.75 230,802.5 231,802.5 231,803 232,803 232,802.5 233,802.5 233,803 234,803 234,802.75 235,802.75 235,802.5 236,802.5 236,802.5 237,802.5 237,803 238,803 238,802.5 239,802.5 239,803 240,803 240,802.5 241,802.5 241,802.5 242,802.5 242,802.75 244,802.75 244,803 245,803 245,803 246,803 246,802.5 249,802.5 249,802.75 250,802.75 250,802.5 251,802.5 251,803 252,803 252,802.5 253,802.5 253,802.75 254,802.75 254,803 255,803 255,802.75 256,802.75 256,802.5 257,802.5 257,802.5 259,802.5 259,802.75 260,802.75 260,802.75 262,802.75 262,802.5 263,802.5 263,803 264,803 264,802.5 265,802.5 265,802.75 266,802.75 266,802.5 267,802.5 267,803 268,803 268,803 269,803 269,802.75 270,802.75 270,803 271,803 271,802.75 272,802.75 272,802.75 273,802.75 273,803 274,803 274,803 275,803 275,802.5 276,802.5 276,802.5 277,802.5 277,802.75 278,802.75 278,802.5 279,802.5 279,802.75 280,802.75 280,802.5 282,802.5 282,802.75 283,802.75 283,802.5 284,802.5 284,802.5 285,802.5 285,802.75 286,802.75 286,802.5 287,802.5 287,802.75 288,802.75 288,803 289,803 289,802.75 290,802.75 290,803 292,803 292,802.5 293,802.5 293,803 294,803 294,803 295,803 295,802.5 296,802.5 296,803 297,803 297,802.75 298,802.75 298,802.5 299,802.5 299,803 300,803 300,802.75 301,802.75 301,803 303,803 303,802.75 304,802.75 304,802.75 305,802.75 305,803 306,803 306,802.75 307,802.75 307,803 309,803 309,803 310,803 310,802.75 311,802.75 311,802.5 312,802.5 312,802.5 313,802.5 313,802.75 315,802.75 315,803 317,803 317,802.5 318,802.5 318,802.75 319,802.75 319,802.75 320,802.75 320,802.75 321,802.75 321,802.75 322,802.75 322,803 323,803 323,802.5 325,802.5 325,802.75 327,802.75 327,802.75 329,802.75 329,802.75 330,802.75 330,802.5 331,802.5 331,802.5 332,802.5 332,802.75 333,802.75 333,803 334,803 334,803 335,803 335,802.5 336,802.5 336,803 337,803 337,802.5 338,802.5 338,802.75 340,802.75 340,802.5 341,802.5 341,802.75 342,802.75 342,802.5 343,802.5 343,802.75 344,802.75 344,802.75 345,802.75 345,802.5 346,802.5 346,802.75 347,802.75 347,803 348,803 348,802.5 349,802.5 349,802.5 350,802.5 350,802.5 351,802.5 351,802.75 352,802.75 352,803 353,803 353,802.75 354,802.75 354,802.5 355,802.5 355,802.5 356,802.5 356,803 357,803 357,804 356,804 356,804.5 355,804.5 355,804.25 354,804.25 354,804.25 353,804.25 353,804 352,804 352,804.5 351,804.5 351,804.5 350,804.5 350,804.25 349,804.25 349,804.5 348,804.5 348,804.25 347,804.25 347,804.5 346,804.5 346,804.25 345,804.25 345,804.5 344,804.5 344,804.25 343,804.25 343,804.5 342,804.5 342,804.25 341,804.25 341,804.25 340,804.25 340,804.5 338,804.5 338,804.25 337,804.25 337,804.5 336,804.5 336,804.5 335,804.5 335,804.5 334,804.5 334,804.25 333,804.25 333,804.5 332,804.5 332,804.25 331,804.25 331,804.5 330,804.5 330,804.25 329,804.25 329,804 327,804 327,804.25 325,804.25 325,804.25 323,804.25 323,804.25 322,804.25 322,804.25 321,804.25 321,804.5 320,804.5 320,804.25 319,804.25 319,804 318,804 318,804.5 317,804.5 317,804 315,804 315,804.25 313,804.25 313,804 312,804 312,804.25 311,804.25 311,804.25 310,804.25 310,804.25 309,804.25 309,804.5 307,804.5 307,804.25 306,804.25 306,804.5 305,804.5 305,804 304,804 304,804.25 303,804.25 303,804.25 301,804.25 301,804.25 300,804.25 300,804.5 299,804.5 299,804.5 298,804.5 298,804.25 297,804.25 297,804.25 296,804.25 296,804 295,804 295,804.5 294,804.5 294,804.25 293,804.25 293,804.25 292,804.25 292,804.5 290,804.5 290,804.5 289,804.5 289,804.5 288,804.5 288,804.25 287,804.25 287,804.5 286,804.5 286,804.25 285,804.25 285,804.5 284,804.5 284,804 283,804 283,804.5 282,804.5 282,804.25 280,804.25 280,804.25 279,804.25 279,804.5 278,804.5 278,804.5 277,804.5 277,804.5 276,804.5 276,804 275,804 275,804 274,804 274,804.5 273,804.5 273,804.5 272,804.5 272,804.25 271,804.25 271,804.5 270,804.5 270,804.5 269,804.5 269,804.5 268,804.5 268,804 267,804 267,804.5 266,804.5 266,804.5 265,804.5 265,804.5 264,804.5 264,804 263,804 263,804.5 262,804.5 262,804.5 260,804.5 260,804.25 259,804.25 259,804 257,804 257,804.5 256,804.5 256,804.25 255,804.25 255,804.25 254,804.25 254,804 253,804 253,804.25 252,804.25 252,804.25 251,804.25 251,804 250,804 250,804 249,804 249,804.5 246,804.5 246,804.5 245,804.5 245,804.25 244,804.25 244,804.5 242,804.5 242,804.25 241,804.25 241,804 240,804 240,804.5 239,804.5 239,804.5 238,804.5 238,804.25 237,804.25 237,804 236,804 236,804.5 235,804.5 235,804 234,804 234,804.5 233,804.5 233,804.25 232,804.25 232,804.25 231,804.25 231,804.5 230,804.5 230,804 229,804 229,804.5 228,804.5 228,804.25 227,804.25 227,804.5 226,804.5 226,804.25 225,804.25 225,804.5 224,804.5 224,804 223,804 223,804.25 222,804.25 222,804.25 221,804.25 221,804.25 220,804.25 220,804 218,804 218,804.25 217,804.25 217,804.5 216,804.5 216,804 215,804 215,804.5 214,804.5 214,804 212,804 212,804.5 211,804.5 211,804.25 209,804.25 209,804.25 208,804.25 208,804.5 207,804.5 207,804 206,804 206,804.25 205,804.25 205,804 204,804 204,804.5 203,804.5 203,804.25 202,804.25 202,804 201,804 201,804.25 200,804.25 200,804 199,804 199,804.25 198,804.25 198,804 196,804 196,804.5 195,804.5 195,804.25 194,804.25 194,804 193,804 193,804.5 192,804.5 192,804.25 191,804.25 191,804.5 190,804.5 190,804.5 188,804.5 188,804.25 187,804.25 187,804.25 186,804.25 186,804.5 184,804.5 184,804.5 183,804.5 183,804 182,804 182,804.25 181,804.25 181,804.25 180,804.25 180,804.5 178,804.5 178,804.5 177,804.5 177,804.25 175,804.25 175,804 173,804 173,804.5 172,804.5 172,804.5 171,804.5 171,804 170,804 170,804.5 169,804.5 169,804.5 167,804.5 167,804.25 166,804.25 166,804 165,804 165,804.25 164,804.25 164,804.5 162,804.5 162,804 161,804 161,804.5 160,804.5 160,804 159,804 159,804.5 158,804.5 158,804.5 157,804.5 157,804 156,804 156,804.25 154,804.25 154,804.5 153,804.5 153,804 152,804 152,804 149,804 149,804.25 148,804.25 148,804.25 145,804.25 145,804.5 144,804.5 144,804 142,804 142,804.5 141,804.5 141,804.25 139,804.25 139,804 138,804 138,804.25 137,804.25 137,804.5 136,804.5 136,804.25 135,804.25 135,804 134,804 134,804.5 130,804.5 130,804.25 129,804.25 129,804.5 128,804.5 128,804.25 127,804.25 127,804.25 125,804.25 125,804.5 124,804.5 124,804.25 123,804.25 123,804 122,804 122,804 120,804 120,804 119,804 119,804.5 118,804.5 118,804.25 117,804.25 117,804.25 115,804.25 115,804.5 114,804.5 114,804.5 113,804.5 113,804.25 112,804.25 112,804.25 111,804.25 111,804.25 110,804.25 110,804.5 108,804.5 108,804.5 107,804.5 107,804.25 105,804.25 105,804.25 104,804.25 104,804 103,804 103,804.25 102,804.25 102,804.25 101,804.25 101,804.25 100,804.25 100,804 99,804 99,804.5 98,804.5 98,804.5 97,804.5 97,804.25 96,804.25 96,804.5 95,804.5 95,804.5 94,804.5 94,804.25 92,804.25 92,804.5 89,804.5 89,804.5 88,804.5 88,804.5 86,804.5 86,804.5 85,804.5 85,804.5 84,804.5 84,804.25 82,804.25 82,804.5 81,804.5 81,804.25 80,804.25 80,804 79,804 79,804 78,804 78,804 77,804 77,804.25 76,804.25 76,804 75,804 75,804.5 74,804.5 74,804.25 73,804.25 73,804 72,804 72,804.5 71,804.5 71,804.5 70,804.5 70,804.5 69,804.5 69,804.25 68,804.25 68,804 66,804 66,804.5 64,804.5 64,804.25 63,804.25 63,804.25 62,804.25 62,804.5 61,804.5 61,804 60,804 60,804.5 59,804.5 59,804 58,804 58,804.25 57,804.25 57,804.25 56,804.25 56,804.25 55,804.25 55,804.5 54,804.5 54,804.25 53,804.25 53,804.5 52,804.5 52,804 51,804 51,804.5 49,804.5 49,804.5 48,804.5 48,804 47,804 47,804.25 46,804.25 46,804.25 45,804.25 45,804.5 44,804.5 44,804.5 43,804.5 43,804 42,804 42,804.25 41,804.25 41,804.25 39,804.25 39,804.5 38,804.5 38,804.5 37,804.5 37,804 36,804 36,804.25 35,804.25 35,804.5 34,804.5 34,804 33,804 33,804.25 32,804.25 32,804.5 31,804.5 31,804.25 29,804.25 29,804.25 28,804.25 28,804.5 27,804.5 27,804.25 26,804.25 26,804.25 24,804.25 24,804.5 23,804.5 23,804 22,804 22,804.25 20,804.25 20,804.5 18,804.5 18,804.5 17,804.5 17,804.25 15,804.25 15,804 14,804 14,804.25 12,804.25 12,804.25 11,804.25 11,804.25 10,804.25 10,804.5 9,804.5 9,804.5 8,804.5 8,804.25 7,804.25 7,804.25 6,804.25 6,804 5,804 5,804.5 4,804.5 4,804 3,804 3,804.25 2,804.25 2,804 1,804 1,804.25 0,804.25 0,804.5 -1,804.5 -1,804.25 -3,804.25 -3,804 -4,804 -4,804.5 -5,804.5 -5,804 -6,804 -6,804.25 -7,804.25 -7,804.25 -8,804.25 -8,804.5 -9,804.5 -9,804.5 -10,804.5" fill="#4a9ef0"/>
<rect x="-10" y="740" width="367" height="1" fill="#222222"/>
</g></svg>
<svg x="1102" y="719" width="203" height="105" overflow="hidden"><g transform="translate(-1102,-719)">
<rect x="1102" y="719" width="201" height="105" fill="#18273d"/>
<rect x="1303" y="719" width="2" height="105" fill="#0b121d"/>
<text x="1107.2" y="736" font-size="14.6" fill="#c9c9c9" stroke="#c9c9c9" stroke-width="0.4" text-anchor="start" textLength="93.4" lengthAdjust="spacingAndGlyphs">claws3 48000 1</text>
<text x="1246" y="736" font-size="14.6" fill="#c9c9c9" stroke="#c9c9c9" stroke-width="0.4" text-anchor="start" textLength="22.4" lengthAdjust="spacingAndGlyphs">Pan</text>
<polyline points="1281.1,726.8 1286.4,731.8 1291.7,726.8" fill="none" stroke="#c9c9c9" stroke-width="1.5" stroke-linecap="round" stroke-linejoin="round"/>
<polygon points="1102,760.75 1123,760.75 1123,760 1124,760 1124,760.5 1125,760.5 1125,760.75 1126,760.75 1126,759 1127,759 1127,758 1128,758 1128,758.75 1129,758.75 1129,759.25 1130,759.25 1130,760.5 1131,760.5 1131,760.75 1135,760.75 1135,760 1136,760 1136,759.75 1137,759.75 1137,760.25 1138,760.25 1138,760.75 1143,760.75 1143,759.75 1144,759.75 1144,759.25 1145,759.25 1145,760.25 1146,760.25 1146,758.5 1147,758.5 1147,758 1148,758 1148,758.75 1149,758.75 1149,759 1150,759 1150,759.5 1151,759.5 1151,760.75 1157,760.75 1157,757.5 1158,757.5 1158,758.25 1159,758.25 1159,757.75 1160,757.75 1160,749.5 1161,749.5 1161,754.25 1162,754.25 1162,758.75 1163,758.75 1163,760.25 1164,760.25 1164,759.25 1165,759.25 1165,758.75 1166,758.75 1166,760.5 1167,760.5 1167,760.75 1171,760.75 1171,759.5 1172,759.5 1172,755.5 1173,755.5 1173,758 1174,758 1174,759.5 1175,759.5 1175,760 1176,760 1176,760.25 1177,760.25 1177,760.5 1180,760.5 1180,760.75 1185,760.75 1185,759.5 1186,759.5 1186,758.75 1187,758.75 1187,759.5 1188,759.5 1188,760 1190,760 1190,760.75 1196,760.75 1196,758.25 1199,758.25 1199,758.75 1200,758.75 1200,760 1201,760 1201,760.5 1204,760.5 1204,760 1205,760 1205,760.75 1208,760.75 1208,759.5 1209,759.5 1209,760.25 1210,760.25 1210,760.75 1212,760.75 1212,758.25 1213,758.25 1213,757.5 1214,757.5 1214,758.75 1215,758.75 1215,757.5 1216,757.5 1216,759.25 1217,759.25 1217,759 1218,759 1218,759.75 1219,759.75 1219,760 1220,760 1220,759 1221,759 1221,760.25 1223,760.25 1223,760 1224,760 1224,759.25 1225,759.25 1225,760.75 1235,760.75 1235,757.5 1236,757.5 1236,759 1237,759 1237,760.75 1238,760.75 1238,759.5 1239,759.5 1239,760.75 1241,760.75 1241,760.25 1242,760.25 1242,760.75 1248,760.75 1248,756.5 1249,756.5 1249,758.5 1250,758.5 1250,759 1251,759 1251,758.75 1253,758.75 1253,759.75 1254,759.75 1254,760.5 1255,760.5 1255,760.75 1263,760.75 1263,750.5 1264,750.5 1264,755 1265,755 1265,760 1266,760 1266,760.25 1267,760.25 1267,760.75 1268,760.75 1268,760.5 1269,760.5 1269,760.75 1275,760.75 1275,759.5 1276,759.5 1276,760.25 1277,760.25 1277,760.75 1305,760.75 1305,762.25 1277,762.25 1277,762.75 1276,762.75 1276,763.5 1275,763.5 1275,762.25 1269,762.25 1269,762.5 1268,762.5 1268,762.25 1267,762.25 1267,762.75 1266,762.75 1266,763 1265,763 1265,768 1264,768 1264,772.5 1263,772.5 1263,762.25 1255,762.25 1255,762.5 1254,762.5 1254,763.25 1253,763.25 1253,764.25 1251,764.25 1251,764 1250,764 1250,764.5 1249,764.5 1249,766.5 1248,766.5 1248,762.25 1242,762.25 1242,762.75 1241,762.75 1241,762.25 1239,762.25 1239,763.5 1238,763.5 1238,762.25 1237,762.25 1237,764 1236,764 1236,765.5 1235,765.5 1235,762.25 1225,762.25 1225,763.75 1224,763.75 1224,763 1223,763 1223,762.75 1221,762.75 1221,764 1220,764 1220,763 1219,763 1219,763.25 1218,763.25 1218,764 1217,764 1217,763.75 1216,763.75 1216,765.5 1215,765.5 1215,764.25 1214,764.25 1214,765.5 1213,765.5 1213,764.75 1212,764.75 1212,762.25 1210,762.25 1210,762.75 1209,762.75 1209,763.5 1208,763.5 1208,762.25 1205,762.25 1205,763 1204,763 1204,762.5 1201,762.5 1201,763 1200,763 1200,764.25 1199,764.25 1199,764.75 1196,764.75 1196,762.25 1190,762.25 1190,763 1188,763 1188,763.5 1187,763.5 1187,764.25 1186,764.25 1186,763.5 1185,763.5 1185,762.25 1180,762.25 1180,762.5 1177,762.5 1177,762.75 1176,762.75 1176,763 1175,763 1175,763.5 1174,763.5 1174,765 1173,765 1173,767.5 1172,767.5 1172,763.5 1171,763.5 1171,762.25 1167,762.25 1167,762.5 1166,762.5 1166,764.25 1165,764.25 1165,763.75 1164,763.75 1164,762.75 1163,762.75 1163,764.25 1162,764.25 1162,768.75 1161,768.75 1161,773.5 1160,773.5 1160,765.25 1159,765.25 1159,764.75 1158,764.75 1158,765.5 1157,765.5 1157,762.25 1151,762.25 1151,763.5 1150,763.5 1150,764 1149,764 1149,764.25 1148,764.25 1148,765 1147,765 1147,764.5 1146,764.5 1146,762.75 1145,762.75 1145,763.75 1144,763.75 1144,763.25 1143,763.25 1143,762.25 1138,762.25 1138,762.75 1137,762.75 1137,763.25 1136,763.25 1136,763 1135,763 1135,762.25 1131,762.25 1131,762.5 1130,762.5 1130,763.75 1129,763.75 1129,764.25 1128,764.25 1128,765 1127,765 1127,764 1126,764 1126,762.25 1125,762.25 1125,762.5 1124,762.5 1124,763 1123,763 1123,762.25 1102,762.25" fill="#4a9ef0"/>
<rect x="1102" y="771" width="201" height="3" fill="rgba(205,196,152,0.72)"/>
<rect x="1102" y="781" width="201" height="3" fill="rgba(163,206,233,0.62)"/>
<polygon points="1102,802.75 1124,802.75 1124,799.5 1125,799.5 1125,801 1126,801 1126,797.5 1127,797.5 1127,798.75 1128,798.75 1128,800.5 1129,800.5 1129,801.75 1130,801.75 1130,800.25 1131,800.25 1131,802.75 1135,802.75 1135,801.5 1136,801.5 1136,802 1137,802 1137,802.25 1138,802.25 1138,802.75 1143,802.75 1143,798.75 1144,798.75 1144,801.5 1145,801.5 1145,798.75 1147,798.75 1147,801.5 1148,801.5 1148,801 1149,801 1149,799.5 1150,799.5 1150,800 1151,800 1151,802.75 1157,802.75 1157,798.25 1158,798.25 1158,798.5 1159,798.5 1159,801.25 1160,801.25 1160,790.5 1161,790.5 1161,795.75 1162,795.75 1162,801.5 1163,801.5 1163,799.5 1164,799.5 1164,800 1166,800 1166,800.5 1167,800.5 1167,802.75 1171,802.75 1171,802.25 1172,802.25 1172,796.5 1173,796.5 1173,799.25 1174,799.25 1174,802.25 1175,802.25 1175,802 1176,802 1176,801.25 1177,801.25 1177,801.5 1178,801.5 1178,802.25 1180,802.25 1180,802.75 1185,802.75 1185,799.5 1186,799.5 1186,799 1187,799 1187,800.5 1188,800.5 1188,801.5 1189,801.5 1189,802 1190,802 1190,802.25 1191,802.25 1191,802.75 1194,802.75 1194,799.25 1195,799.25 1195,799 1196,799 1196,801 1197,801 1197,799.25 1198,799.25 1198,800 1199,800 1199,800.25 1200,800.25 1200,800.5 1201,800.5 1201,801 1202,801 1202,802.25 1203,802.25 1203,801 1204,801 1204,800.75 1205,800.75 1205,800.5 1206,800.5 1206,802.75 1208,802.75 1208,800.5 1209,800.5 1209,801.75 1210,801.75 1210,802.75 1212,802.75 1212,796.75 1213,796.75 1213,798.5 1214,798.5 1214,800.75 1215,800.75 1215,797.75 1216,797.75 1216,800 1217,800 1217,798 1218,798 1218,798.25 1219,798.25 1219,801.5 1220,801.5 1220,801.75 1221,801.75 1221,802 1222,802 1222,800 1223,800 1223,800.75 1224,800.75 1224,800.5 1225,800.5 1225,801.5 1226,801.5 1226,802.75 1235,802.75 1235,797.5 1236,797.5 1236,800 1237,800 1237,802.75 1238,802.75 1238,801.25 1239,801.25 1239,802.5 1241,802.5 1241,801.75 1242,801.75 1242,802.75 1248,802.75 1248,797.5 1249,797.5 1249,800 1250,800 1250,802 1251,802 1251,800.75 1252,800.75 1252,800.25 1253,800.25 1253,800.75 1254,800.75 1254,801 1255,801 1255,801.75 1256,801.75 1256,802.75 1263,802.75 1263,792.5 1264,792.5 1264,797 1265,797 1265,802.75 1267,802.75 1267,802.5 1268,802.5 1268,802.75 1275,802.75 1275,801.5 1276,801.5 1276,802.25 1277,802.25 1277,802.75 1305,802.75 1305,804.25 1277,804.25 1277,804.75 1276,804.75 1276,805.5 1275,805.5 1275,804.25 1268,804.25 1268,804.5 1267,804.5 1267,804.25 1265,804.25 1265,810 1264,810 1264,814.5 1263,814.5 1263,804.25 1256,804.25 1256,805.25 1255,805.25 1255,806 1254,806 1254,806.25 1253,806.25 1253,806.75 1252,806.75 1252,806.25 1251,806.25 1251,805 1250,805 1250,807 1249,807 1249,809.5 1248,809.5 1248,804.25 1242,804.25 1242,805.25 1241,805.25 1241,804.5 1239,804.5 1239,805.75 1238,805.75 1238,804.25 1237,804.25 1237,807 1236,807 1236,809.5 1235,809.5 1235,804.25 1226,804.25 1226,805.5 1225,805.5 1225,806.5 1224,806.5 1224,806.25 1223,806.25 1223,807 1222,807 1222,805 1221,805 1221,805.25 1220,805.25 1220,805.5 1219,805.5 1219,808.75 1218,808.75 1218,809 1217,809 1217,807 1216,807 1216,809.25 1215,809.25 1215,806.25 1214,806.25 1214,808.5 1213,808.5 1213,810.25 1212,810.25 1212,804.25 1210,804.25 1210,805.25 1209,805.25 1209,806.5 1208,806.5 1208,804.25 1206,804.25 1206,806.5 1205,806.5 1205,806.25 1204,806.25 1204,806 1203,806 1203,804.75 1202,804.75 1202,806 1201,806 1201,806.5 1200,806.5 1200,806.75 1199,806.75 1199,807 1198,807 1198,807.75 1197,807.75 1197,806 1196,806 1196,808 1195,808 1195,807.75 1194,807.75 1194,804.25 1191,804.25 1191,804.75 1190,804.75 1190,805 1189,805 1189,805.5 1188,805.5 1188,806.5 1187,806.5 1187,808 1186,808 1186,807.5 1185,807.5 1185,804.25 1180,804.25 1180,804.75 1178,804.75 1178,805.5 1177,805.5 1177,805.75 1176,805.75 1176,805 1175,805 1175,804.75 1174,804.75 1174,807.75 1173,807.75 1173,810.5 1172,810.5 1172,804.75 1171,804.75 1171,804.25 1167,804.25 1167,806.5 1166,806.5 1166,807 1164,807 1164,807.5 1163,807.5 1163,805.5 1162,805.5 1162,811.25 1161,811.25 1161,816.5 1160,816.5 1160,805.75 1159,805.75 1159,808.5 1158,808.5 1158,808.75 1157,808.75 1157,804.25 1151,804.25 1151,807 1150,807 1150,807.5 1149,807.5 1149,806 1148,806 1148,805.5 1147,805.5 1147,808.25 1145,808.25 1145,805.5 1144,805.5 1144,808.25 1143,808.25 1143,804.25 1138,804.25 1138,804.75 1137,804.75 1137,805 1136,805 1136,805.5 1135,805.5 1135,804.25 1131,804.25 1131,806.75 1130,806.75 1130,805.25 1129,805.25 1129,806.5 1128,806.5 1128,808.25 1127,808.25 1127,809.5 1126,809.5 1126,806 1125,806 1125,807.5 1124,807.5 1124,804.25 1102,804.25" fill="#4a9ef0"/>
<rect x="1117.5" y="804.7" width="2.1" height="4.3" rx="1" fill="#cbc8cf"/>
<rect x="1121.3" y="803.2" width="2.1" height="5.8" rx="1" fill="#cbc8cf"/>
<rect x="1125.1" y="801.5" width="2.1" height="7.5" rx="1" fill="#cbc8cf"/>
<rect x="1128.9" y="798.5" width="2.1" height="10.5" rx="1" fill="#cbc8cf"/>
<rect x="1102" y="740" width="203" height="1" fill="#222222"/>
<rect x="1102" y="719" width="2" height="105" fill="#8a96a8"/>
</g></svg>
<svg x="312" y="829" width="49" height="45" overflow="hidden"><g transform="translate(-312,-829)">
<rect x="312" y="829" width="47" height="45" fill="#46162f"/>
<rect x="359" y="829" width="2" height="45" fill="#230b17"/>
<rect x="340.7" y="843.8" width="2" height="2" fill="#c9c9c9"/>
<rect x="343.7" y="843.8" width="2" height="2" fill="#c9c9c9"/>
<rect x="346.7" y="843.8" width="2" height="2" fill="#c9c9c9"/>
<text x="316.8" y="845.8" font-size="14.6" fill="#c9c9c9" stroke="#c9c9c9" stroke-width="0.4" text-anchor="start" textLength="23.3" lengthAdjust="spacingAndGlyphs">doo</text>
<polygon points="312,854.75 327,854.75 327,854.25 328,854.25 328,853.75 329,853.75 329,854.25 330,854.25 330,854.75 361,854.75 361,856.25 330,856.25 330,856.75 329,856.75 329,857.25 328,857.25 328,856.75 327,856.75 327,856.25 312,856.25" fill="#ff5ab8"/>
<rect x="312" y="856" width="47" height="3" fill="rgba(205,196,152,0.72)"/>
<rect x="312" y="860" width="49" height="1" fill="rgba(200,200,200,0.5)"/>
<rect x="312" y="861" width="47" height="3" fill="rgba(163,206,233,0.62)"/>
<polygon points="312,866.75 327,866.75 327,866.5 328,866.5 328,866 329,866 329,866.5 330,866.5 330,866.75 361,866.75 361,868.25 330,868.25 330,868.5 329,868.5 329,869 328,869 328,868.5 327,868.5 327,868.25 312,868.25" fill="#ff5ab8"/>
<rect x="312" y="829" width="2" height="45" fill="#b898b0"/>
</g></svg>
<svg x="387" y="878" width="30" height="45" overflow="hidden"><g transform="translate(-387,-878)">
<rect x="387" y="878" width="28" height="45" fill="#183c1e"/>
<rect x="415" y="878" width="2" height="45" fill="#0c1c0e"/>
<rect x="392.5" y="892.5" width="2" height="2" fill="#c9c9c9"/>
<rect x="396" y="892.5" width="2" height="2" fill="#c9c9c9"/>
<rect x="399.5" y="892.5" width="2" height="2" fill="#c9c9c9"/>
<polygon points="387,905.75 400,905.75 400,904 401,904 401,905 402,905 402,905.75 417,905.75 417,907.25 402,907.25 402,908 401,908 401,909 400,909 400,907.25 387,907.25" fill="#44d66a"/>
<rect x="387" y="904" width="28" height="3" fill="rgba(163,206,233,0.62)"/>
<rect x="387" y="910" width="28" height="3" fill="rgba(205,196,152,0.72)"/>
<polygon points="387,916.75 400,916.75 400,915 401,915 401,916 402,916 402,916.75 417,916.75 417,918.25 402,918.25 402,919 401,919 401,920 400,920 400,918.25 387,918.25" fill="#44d66a"/>
<rect x="387" y="898" width="30" height="1" fill="#222222"/>
<rect x="387" y="878" width="2" height="45" fill="#a8b8a8"/>
</g></svg>
<svg x="477" y="878" width="30" height="45" overflow="hidden"><g transform="translate(-477,-878)">
<rect x="477" y="878" width="28" height="45" fill="#183c1e"/>
<rect x="505" y="878" width="2" height="45" fill="#0c1c0e"/>
<rect x="482.5" y="892.5" width="2" height="2" fill="#c9c9c9"/>
<rect x="486" y="892.5" width="2" height="2" fill="#c9c9c9"/>
<rect x="489.5" y="892.5" width="2" height="2" fill="#c9c9c9"/>
<polygon points="477,905.75 490,905.75 490,904 491,904 491,905 492,905 492,905.75 507,905.75 507,907.25 492,907.25 492,908 491,908 491,909 490,909 490,907.25 477,907.25" fill="#44d66a"/>
<rect x="477" y="904" width="28" height="3" fill="rgba(163,206,233,0.62)"/>
<rect x="477" y="910" width="28" height="3" fill="rgba(205,196,152,0.72)"/>
<polygon points="477,916.75 490,916.75 490,915 491,915 491,916 492,916 492,916.75 507,916.75 507,918.25 492,918.25 492,919 491,919 491,920 490,920 490,918.25 477,918.25" fill="#44d66a"/>
<rect x="477" y="898" width="30" height="1" fill="#222222"/>
<rect x="477" y="878" width="2" height="45" fill="#a8b8a8"/>
</g></svg>
<svg x="571" y="878" width="30" height="45" overflow="hidden"><g transform="translate(-571,-878)">
<rect x="571" y="878" width="28" height="45" fill="#183c1e"/>
<rect x="599" y="878" width="2" height="45" fill="#0c1c0e"/>
<rect x="576.5" y="892.5" width="2" height="2" fill="#c9c9c9"/>
<rect x="580" y="892.5" width="2" height="2" fill="#c9c9c9"/>
<rect x="583.5" y="892.5" width="2" height="2" fill="#c9c9c9"/>
<polygon points="571,905.75 584,905.75 584,904 585,904 585,905 586,905 586,905.75 601,905.75 601,907.25 586,907.25 586,908 585,908 585,909 584,909 584,907.25 571,907.25" fill="#44d66a"/>
<rect x="571" y="909" width="28" height="3" fill="rgba(205,196,152,0.72)"/>
<rect x="571" y="911" width="28" height="3" fill="rgba(163,206,233,0.62)"/>
<polygon points="571,916.75 584,916.75 584,915 585,915 585,916 586,916 586,916.75 601,916.75 601,918.25 586,918.25 586,919 585,919 585,920 584,920 584,918.25 571,918.25" fill="#44d66a"/>
<rect x="571" y="898" width="30" height="1" fill="#222222"/>
<rect x="571" y="878" width="2" height="45" fill="#a8b8a8"/>
</g></svg>
<svg x="660" y="878" width="30" height="45" overflow="hidden"><g transform="translate(-660,-878)">
<rect x="660" y="878" width="28" height="45" fill="#183c1e"/>
<rect x="688" y="878" width="2" height="45" fill="#0c1c0e"/>
<rect x="665.5" y="892.5" width="2" height="2" fill="#c9c9c9"/>
<rect x="669" y="892.5" width="2" height="2" fill="#c9c9c9"/>
<rect x="672.5" y="892.5" width="2" height="2" fill="#c9c9c9"/>
<polygon points="660,905.75 673,905.75 673,904 674,904 674,905 675,905 675,905.75 690,905.75 690,907.25 675,907.25 675,908 674,908 674,909 673,909 673,907.25 660,907.25" fill="#44d66a"/>
<rect x="660" y="909" width="28" height="3" fill="rgba(205,196,152,0.72)"/>
<rect x="660" y="911" width="28" height="3" fill="rgba(163,206,233,0.62)"/>
<polygon points="660,916.75 673,916.75 673,915 674,915 674,916 675,916 675,916.75 690,916.75 690,918.25 675,918.25 675,919 674,919 674,920 673,920 673,918.25 660,918.25" fill="#44d66a"/>
<rect x="660" y="898" width="30" height="1" fill="#222222"/>
<rect x="660" y="878" width="2" height="45" fill="#a8b8a8"/>
</g></svg>
<svg x="739" y="878" width="30" height="45" overflow="hidden"><g transform="translate(-739,-878)">
<rect x="739" y="878" width="28" height="45" fill="#183c1e"/>
<rect x="767" y="878" width="2" height="45" fill="#0c1c0e"/>
<rect x="744.5" y="892.5" width="2" height="2" fill="#c9c9c9"/>
<rect x="748" y="892.5" width="2" height="2" fill="#c9c9c9"/>
<rect x="751.5" y="892.5" width="2" height="2" fill="#c9c9c9"/>
<polygon points="739,905.75 752,905.75 752,904 753,904 753,905 754,905 754,905.75 769,905.75 769,907.25 754,907.25 754,908 753,908 753,909 752,909 752,907.25 739,907.25" fill="#44d66a"/>
<rect x="739" y="910" width="28" height="3" fill="rgba(205,196,152,0.72)"/>
<rect x="739" y="916" width="28" height="3" fill="rgba(163,206,233,0.62)"/>
<polygon points="739,916.75 752,916.75 752,915 753,915 753,916 754,916 754,916.75 769,916.75 769,918.25 754,918.25 754,919 753,919 753,920 752,920 752,918.25 739,918.25" fill="#44d66a"/>
<rect x="739" y="898" width="30" height="1" fill="#222222"/>
<rect x="739" y="878" width="2" height="45" fill="#a8b8a8"/>
</g></svg>
<svg x="830" y="878" width="30" height="45" overflow="hidden"><g transform="translate(-830,-878)">
<rect x="830" y="878" width="28" height="45" fill="#183c1e"/>
<rect x="858" y="878" width="2" height="45" fill="#0c1c0e"/>
<rect x="835.5" y="892.5" width="2" height="2" fill="#c9c9c9"/>
<rect x="839" y="892.5" width="2" height="2" fill="#c9c9c9"/>
<rect x="842.5" y="892.5" width="2" height="2" fill="#c9c9c9"/>
<polygon points="830,905.75 843,905.75 843,904 844,904 844,905 845,905 845,905.75 860,905.75 860,907.25 845,907.25 845,908 844,908 844,909 843,909 843,907.25 830,907.25" fill="#44d66a"/>
<rect x="830" y="910" width="28" height="3" fill="rgba(205,196,152,0.72)"/>
<rect x="830" y="916" width="28" height="3" fill="rgba(163,206,233,0.62)"/>
<polygon points="830,916.75 843,916.75 843,915 844,915 844,916 845,916 845,916.75 860,916.75 860,918.25 845,918.25 845,919 844,919 844,920 843,920 843,918.25 830,918.25" fill="#44d66a"/>
<rect x="830" y="898" width="30" height="1" fill="#222222"/>
<rect x="830" y="878" width="2" height="45" fill="#a8b8a8"/>
</g></svg>
<svg x="924" y="878" width="30" height="45" overflow="hidden"><g transform="translate(-924,-878)">
<rect x="924" y="878" width="28" height="45" fill="#183c1e"/>
<rect x="952" y="878" width="2" height="45" fill="#0c1c0e"/>
<rect x="929.5" y="892.5" width="2" height="2" fill="#c9c9c9"/>
<rect x="933" y="892.5" width="2" height="2" fill="#c9c9c9"/>
<rect x="936.5" y="892.5" width="2" height="2" fill="#c9c9c9"/>
<polygon points="924,905.75 937,905.75 937,904 938,904 938,905 939,905 939,905.75 954,905.75 954,907.25 939,907.25 939,908 938,908 938,909 937,909 937,907.25 924,907.25" fill="#44d66a"/>
<rect x="924" y="910" width="28" height="3" fill="rgba(205,196,152,0.72)"/>
<rect x="924" y="916" width="28" height="3" fill="rgba(163,206,233,0.62)"/>
<polygon points="924,916.75 937,916.75 937,915 938,915 938,916 939,916 939,916.75 954,916.75 954,918.25 939,918.25 939,919 938,919 938,920 937,920 937,918.25 924,918.25" fill="#44d66a"/>
<rect x="924" y="898" width="30" height="1" fill="#222222"/>
<rect x="924" y="878" width="2" height="45" fill="#a8b8a8"/>
</g></svg>
<svg x="1012" y="878" width="30" height="45" overflow="hidden"><g transform="translate(-1012,-878)">
<rect x="1012" y="878" width="28" height="45" fill="#183c1e"/>
<rect x="1040" y="878" width="2" height="45" fill="#0c1c0e"/>
<rect x="1017.5" y="892.5" width="2" height="2" fill="#c9c9c9"/>
<rect x="1021" y="892.5" width="2" height="2" fill="#c9c9c9"/>
<rect x="1024.5" y="892.5" width="2" height="2" fill="#c9c9c9"/>
<polygon points="1012,905.75 1025,905.75 1025,904 1026,904 1026,905 1027,905 1027,905.75 1042,905.75 1042,907.25 1027,907.25 1027,908 1026,908 1026,909 1025,909 1025,907.25 1012,907.25" fill="#44d66a"/>
<rect x="1012" y="910" width="28" height="3" fill="rgba(205,196,152,0.72)"/>
<rect x="1012" y="916" width="28" height="3" fill="rgba(163,206,233,0.62)"/>
<polygon points="1012,916.75 1025,916.75 1025,915 1026,915 1026,916 1027,916 1027,916.75 1042,916.75 1042,918.25 1027,918.25 1027,919 1026,919 1026,920 1025,920 1025,918.25 1012,918.25" fill="#44d66a"/>
<rect x="1012" y="898" width="30" height="1" fill="#222222"/>
<rect x="1012" y="878" width="2" height="45" fill="#a8b8a8"/>
</g></svg>
<svg x="1092" y="878" width="30" height="45" overflow="hidden"><g transform="translate(-1092,-878)">
<rect x="1092" y="878" width="28" height="45" fill="#183c1e"/>
<rect x="1120" y="878" width="2" height="45" fill="#0c1c0e"/>
<rect x="1097.5" y="892.5" width="2" height="2" fill="#c9c9c9"/>
<rect x="1101" y="892.5" width="2" height="2" fill="#c9c9c9"/>
<rect x="1104.5" y="892.5" width="2" height="2" fill="#c9c9c9"/>
<polygon points="1092,905.75 1105,905.75 1105,904 1106,904 1106,905 1107,905 1107,905.75 1122,905.75 1122,907.25 1107,907.25 1107,908 1106,908 1106,909 1105,909 1105,907.25 1092,907.25" fill="#44d66a"/>
<rect x="1092" y="909" width="28" height="3" fill="rgba(205,196,152,0.72)"/>
<rect x="1092" y="911" width="28" height="3" fill="rgba(163,206,233,0.62)"/>
<polygon points="1092,916.75 1105,916.75 1105,915 1106,915 1106,916 1107,916 1107,916.75 1122,916.75 1122,918.25 1107,918.25 1107,919 1106,919 1106,920 1105,920 1105,918.25 1092,918.25" fill="#44d66a"/>
<rect x="1092" y="898" width="30" height="1" fill="#222222"/>
<rect x="1092" y="878" width="2" height="45" fill="#a8b8a8"/>
</g></svg>
<svg x="1050" y="928" width="112" height="58" overflow="hidden"><g transform="translate(-1050,-928)">
<rect x="1050" y="928" width="110" height="58" fill="#26264a"/>
<rect x="1160" y="928" width="2" height="58" fill="#121224"/>
<rect x="1115" y="943" width="2" height="2" fill="#c9c9c9"/>
<rect x="1118" y="943" width="2" height="2" fill="#c9c9c9"/>
<rect x="1121" y="943" width="2" height="2" fill="#c9c9c9"/>
<text x="1055" y="945" font-size="14.6" fill="#c9c9c9" stroke="#c9c9c9" stroke-width="0.4" text-anchor="start" textLength="59.4" lengthAdjust="spacingAndGlyphs">bottlesFal</text>
<polyline points="1138.1,935.3 1143.4,940.3 1148.7,935.3" fill="none" stroke="#c9c9c9" stroke-width="1.5" stroke-linecap="round" stroke-linejoin="round"/>
<polygon points="1050,956.75 1070,956.75 1070,954 1071,954 1071,955.5 1072,955.5 1072,955.25 1073,955.25 1073,956 1074,956 1074,955.25 1075,955.25 1075,955.5 1076,955.5 1076,956.75 1102,956.75 1102,954.5 1103,954.5 1103,955.5 1104,955.5 1104,956.5 1105,956.5 1105,955.75 1107,955.75 1107,956.25 1108,956.25 1108,956.5 1109,956.5 1109,956.75 1110,956.75 1110,956.5 1111,956.5 1111,956.75 1118,956.75 1118,955.75 1119,955.75 1119,953 1120,953 1120,954.75 1122,954.75 1122,955.25 1123,955.25 1123,956.25 1124,956.25 1124,955.75 1125,955.75 1125,956.5 1126,956.5 1126,954.75 1127,954.75 1127,956 1128,956 1128,955.5 1129,955.5 1129,956.5 1130,956.5 1130,956.75 1162,956.75 1162,958.25 1130,958.25 1130,958.5 1129,958.5 1129,959.5 1128,959.5 1128,959 1127,959 1127,960.25 1126,960.25 1126,958.5 1125,958.5 1125,959.25 1124,959.25 1124,958.75 1123,958.75 1123,959.75 1122,959.75 1122,960.25 1120,960.25 1120,961.5 1119,961.5 1119,959.25 1118,959.25 1118,958.25 1111,958.25 1111,958.5 1110,958.5 1110,958.25 1109,958.25 1109,958.5 1108,958.5 1108,958.75 1107,958.75 1107,959.25 1105,959.25 1105,958.5 1104,958.5 1104,959.5 1103,959.5 1103,960 1102,960 1102,958.25 1076,958.25 1076,959.5 1075,959.5 1075,959.75 1074,959.75 1074,959 1073,959 1073,959.75 1072,959.75 1072,959.25 1071,959.25 1071,960.5 1070,960.5 1070,958.25 1050,958.25" fill="#8f80f5"/>
<rect x="1050" y="960" width="110" height="3" fill="rgba(205,196,152,0.72)"/>
<rect x="1050" y="965" width="112" height="1" fill="rgba(200,200,200,0.5)"/>
<polyline points="1050,968.5 1075,968.5 1145,977 1162,977" fill="none" stroke="rgba(163,206,233,0.62)" stroke-width="3"/>
<polygon points="1050,974.75 1070,974.75 1070,972 1071,972 1071,973.5 1072,973.5 1072,973.5 1073,973.5 1073,974.5 1074,974.5 1074,973.25 1075,973.25 1075,974.25 1077,974.25 1077,974.75 1084,974.75 1084,974.25 1085,974.25 1085,974.75 1086,974.75 1086,974.5 1087,974.5 1087,974.75 1102,974.75 1102,972.5 1103,972.5 1103,973.5 1104,973.5 1104,974.25 1106,974.25 1106,974 1107,974 1107,974.25 1111,974.25 1111,974.75 1118,974.75 1118,973.75 1119,973.75 1119,971 1120,971 1120,973 1121,973 1121,974 1122,974 1122,972.25 1123,972.25 1123,974 1124,974 1124,973.75 1125,973.75 1125,973.25 1126,973.25 1126,974.25 1127,974.25 1127,974.5 1129,974.5 1129,973.75 1130,973.75 1130,974.75 1131,974.75 1131,974.5 1132,974.5 1132,974.75 1162,974.75 1162,976.25 1132,976.25 1132,976.5 1131,976.5 1131,976.25 1130,976.25 1130,977.25 1129,977.25 1129,976.5 1127,976.5 1127,976.75 1126,976.75 1126,977.75 1125,977.75 1125,977.25 1124,977.25 1124,977 1123,977 1123,978.75 1122,978.75 1122,977 1121,977 1121,978 1120,978 1120,979.5 1119,979.5 1119,977.25 1118,977.25 1118,976.25 1111,976.25 1111,976.75 1107,976.75 1107,977 1106,977 1106,976.75 1104,976.75 1104,977.5 1103,977.5 1103,978 1102,978 1102,976.25 1087,976.25 1087,976.5 1086,976.5 1086,976.25 1085,976.25 1085,976.75 1084,976.75 1084,976.25 1077,976.25 1077,976.75 1075,976.75 1075,977.75 1074,977.75 1074,976.5 1073,976.5 1073,977.5 1072,977.5 1072,977.25 1071,977.25 1071,978.5 1070,978.5 1070,976.25 1050,976.25" fill="#8f80f5"/>
<rect x="1050" y="928" width="2" height="58" fill="#a8a4c8"/>
</g></svg>
<svg x="1050" y="991" width="112" height="81" overflow="hidden"><g transform="translate(-1050,-991)">
<rect x="1050" y="991" width="110" height="81" fill="#432e17"/>
<rect x="1160" y="991" width="2" height="81" fill="#1f160c"/>
<rect x="1115" y="1005.3" width="2" height="2" fill="#c9c9c9"/>
<rect x="1118" y="1005.3" width="2" height="2" fill="#c9c9c9"/>
<rect x="1121" y="1005.3" width="2" height="2" fill="#c9c9c9"/>
<text x="1055" y="1007.3" font-size="14.6" fill="#c9c9c9" stroke="#c9c9c9" stroke-width="0.4" text-anchor="start" textLength="59.4" lengthAdjust="spacingAndGlyphs">bottlesFal</text>
<polyline points="1138.1,998.3 1143.4,1003.3 1148.7,998.3" fill="none" stroke="#c9c9c9" stroke-width="1.5" stroke-linecap="round" stroke-linejoin="round"/>
<polygon points="1050,1025.75 1070,1025.75 1070,1021.5 1071,1021.5 1071,1022 1072,1022 1072,1023.75 1073,1023.75 1073,1023 1074,1023 1074,1024.5 1075,1024.5 1075,1024 1076,1024 1076,1024.75 1077,1024.75 1077,1024.5 1078,1024.5 1078,1025.75 1084,1025.75 1084,1024.75 1085,1024.75 1085,1025 1086,1025 1086,1025.25 1087,1025.25 1087,1025.75 1102,1025.75 1102,1022 1103,1022 1103,1023.5 1104,1023.5 1104,1023.25 1105,1023.25 1105,1023.5 1106,1023.5 1106,1025 1107,1025 1107,1024.25 1108,1024.25 1108,1025.5 1109,1025.5 1109,1023.75 1110,1023.75 1110,1024.5 1111,1024.5 1111,1025.25 1112,1025.25 1112,1025 1113,1025 1113,1025.75 1118,1025.75 1118,1023.5 1119,1023.5 1119,1020 1120,1020 1120,1021.75 1122,1021.75 1122,1021.5 1123,1021.5 1123,1023 1124,1023 1124,1023.5 1125,1023.5 1125,1023.75 1126,1023.75 1126,1025 1127,1025 1127,1025.25 1128,1025.25 1128,1023.25 1130,1023.25 1130,1025.25 1131,1025.25 1131,1025.75 1132,1025.75 1132,1025.5 1133,1025.5 1133,1025.75 1162,1025.75 1162,1027.25 1133,1027.25 1133,1027.5 1132,1027.5 1132,1027.25 1131,1027.25 1131,1027.75 1130,1027.75 1130,1029.75 1128,1029.75 1128,1027.75 1127,1027.75 1127,1028 1126,1028 1126,1029.25 1125,1029.25 1125,1029.5 1124,1029.5 1124,1030 1123,1030 1123,1031.5 1122,1031.5 1122,1031.25 1120,1031.25 1120,1033 1119,1033 1119,1029.5 1118,1029.5 1118,1027.25 1113,1027.25 1113,1028 1112,1028 1112,1027.75 1111,1027.75 1111,1028.5 1110,1028.5 1110,1029.25 1109,1029.25 1109,1027.5 1108,1027.5 1108,1028.75 1107,1028.75 1107,1028 1106,1028 1106,1029.5 1105,1029.5 1105,1029.75 1104,1029.75 1104,1029.5 1103,1029.5 1103,1030.5 1102,1030.5 1102,1027.25 1087,1027.25 1087,1027.75 1086,1027.75 1086,1028 1085,1028 1085,1028.25 1084,1028.25 1084,1027.25 1078,1027.25 1078,1028.5 1077,1028.5 1077,1028.25 1076,1028.25 1076,1029 1075,1029 1075,1028.5 1074,1028.5 1074,1030 1073,1030 1073,1029.25 1072,1029.25 1072,1031 1071,1031 1071,1031.5 1070,1031.5 1070,1027.25 1050,1027.25" fill="#f4a232"/>
<rect x="1050" y="1030" width="110" height="3" fill="rgba(205,196,152,0.72)"/>
<rect x="1050" y="1040" width="112" height="1" fill="rgba(200,200,200,0.5)"/>
<polyline points="1050,1042.5 1075,1042.5 1145,1058 1162,1058" fill="none" stroke="rgba(163,206,233,0.62)" stroke-width="3"/>
<polygon points="1050,1055.75 1070,1055.75 1070,1051.5 1071,1051.5 1071,1053.75 1072,1053.75 1072,1054.5 1074,1054.5 1074,1055.25 1075,1055.25 1075,1053.25 1076,1053.25 1076,1055.5 1077,1055.5 1077,1054 1078,1054 1078,1055.75 1084,1055.75 1084,1055 1085,1055 1085,1054.75 1086,1054.75 1086,1055.5 1087,1055.5 1087,1055.75 1102,1055.75 1102,1052 1103,1052 1103,1054 1105,1054 1105,1054.5 1106,1054.5 1106,1055 1107,1055 1107,1054.25 1108,1054.25 1108,1054 1109,1054 1109,1053.75 1110,1053.75 1110,1054 1111,1054 1111,1054.75 1112,1054.75 1112,1055.5 1113,1055.5 1113,1055.75 1118,1055.75 1118,1052.25 1119,1052.25 1119,1050 1120,1050 1120,1051.5 1121,1051.5 1121,1052.25 1122,1052.25 1122,1053.75 1123,1053.75 1123,1054 1124,1054 1124,1052.25 1125,1052.25 1125,1054 1126,1054 1126,1055 1127,1055 1127,1053.5 1128,1053.5 1128,1054.5 1129,1054.5 1129,1055.25 1131,1055.25 1131,1055.75 1162,1055.75 1162,1057.25 1131,1057.25 1131,1057.75 1129,1057.75 1129,1058.5 1128,1058.5 1128,1059.5 1127,1059.5 1127,1058 1126,1058 1126,1059 1125,1059 1125,1060.75 1124,1060.75 1124,1059 1123,1059 1123,1059.25 1122,1059.25 1122,1060.75 1121,1060.75 1121,1061.5 1120,1061.5 1120,1063 1119,1063 1119,1060.75 1118,1060.75 1118,1057.25 1113,1057.25 1113,1057.5 1112,1057.5 1112,1058.25 1111,1058.25 1111,1059 1110,1059 1110,1059.25 1109,1059.25 1109,1059 1108,1059 1108,1058.75 1107,1058.75 1107,1058 1106,1058 1106,1058.5 1105,1058.5 1105,1059 1103,1059 1103,1060.5 1102,1060.5 1102,1057.25 1087,1057.25 1087,1057.5 1086,1057.5 1086,1058.25 1085,1058.25 1085,1058 1084,1058 1084,1057.25 1078,1057.25 1078,1059 1077,1059 1077,1057.5 1076,1057.5 1076,1059.75 1075,1059.75 1075,1057.75 1074,1057.75 1074,1058.5 1072,1058.5 1072,1059.25 1071,1059.25 1071,1061.5 1070,1061.5 1070,1057.25 1050,1057.25" fill="#f4a232"/>
<rect x="1066" y="1053.3" width="2.1" height="4.3" rx="1" fill="#cbc8cf"/>
<rect x="1069.8" y="1051.8" width="2.1" height="5.8" rx="1" fill="#cbc8cf"/>
<rect x="1073.6" y="1050.1" width="2.1" height="7.5" rx="1" fill="#cbc8cf"/>
<rect x="1077.4" y="1047.1" width="2.1" height="10.5" rx="1" fill="#cbc8cf"/>
<circle cx="1107" cy="1053" r="12.5" fill="#120e15" fill-opacity="0.9" stroke="#c8c8c8" stroke-width="1.6"/>
<polygon points="1102.47,1046.53 1106.56,1050.34 1109.23,1045.42 1108.81,1051 1114.32,1050.02 1109.69,1053.17 1113.89,1056.86 1108.55,1055.21 1108.27,1060.8 1106.24,1055.59 1101.7,1058.86 1104.5,1054.02 1099.12,1052.51 1104.65,1051.68" fill="#c4c4c4"/>
<rect x="1050" y="991" width="2" height="81" fill="#b8a890"/>
</g></svg>
<rect x="0" y="1072" width="1341" height="1" fill="#323232"/>
</g>
</svg></body></html>
